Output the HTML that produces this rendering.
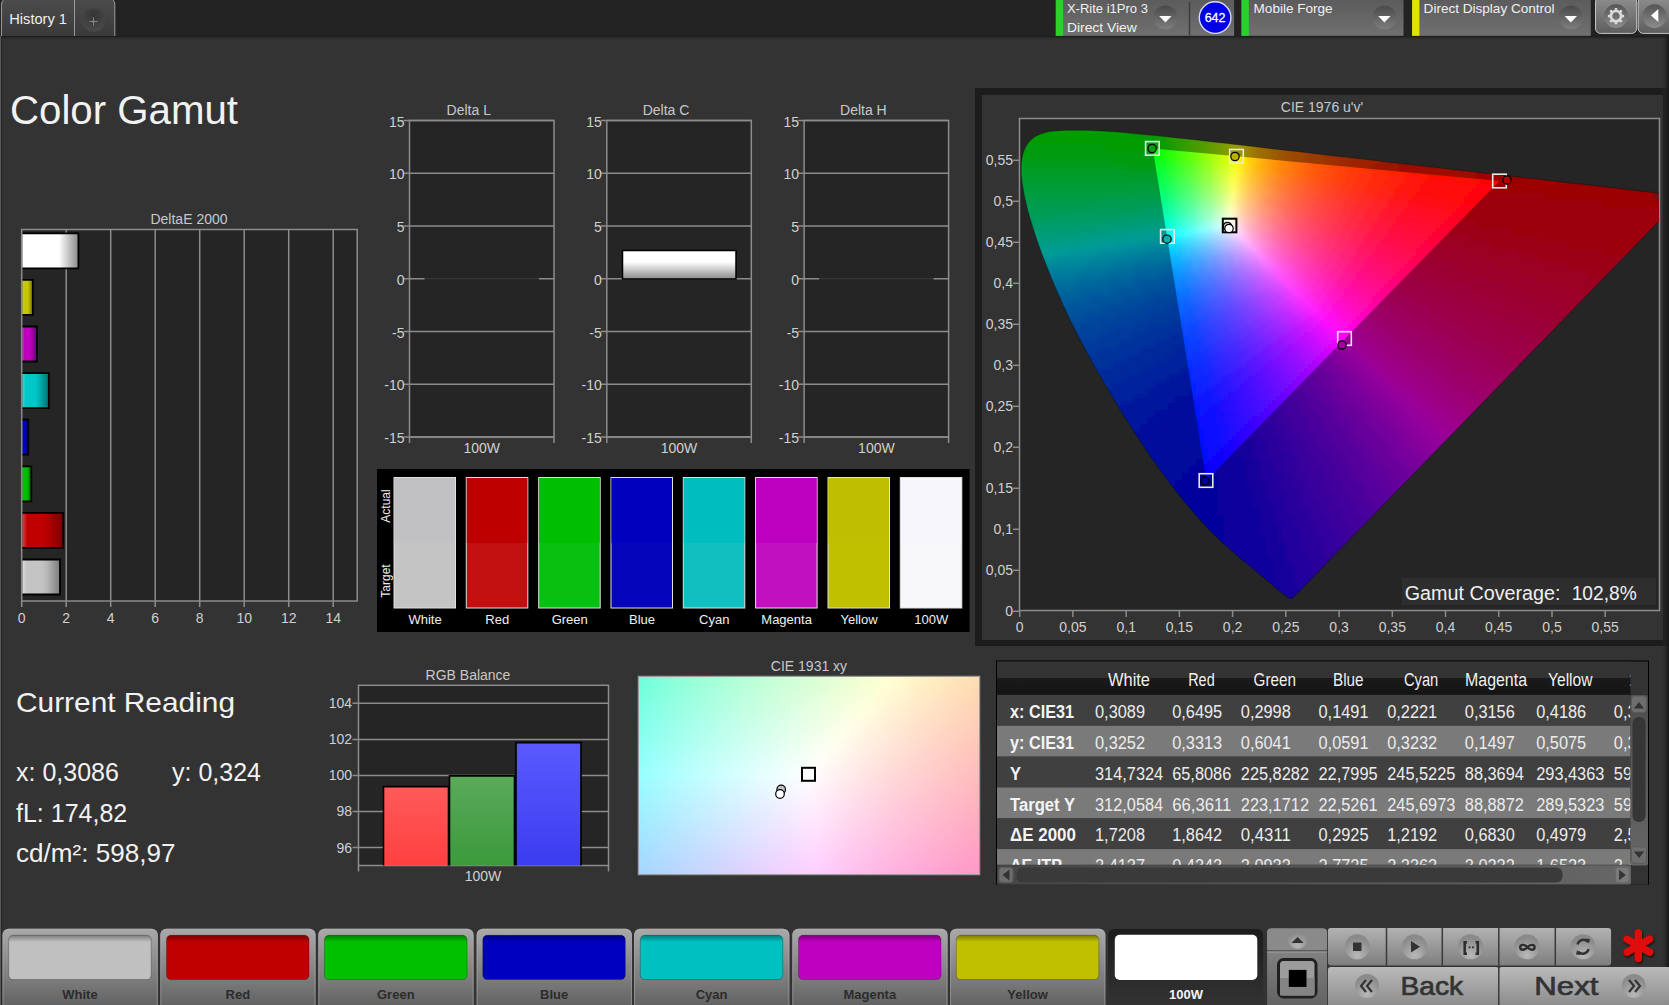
<!DOCTYPE html>
<html><head><meta charset="utf-8">
<style>
html,body{margin:0;padding:0;background:#333;overflow:hidden;}
body{width:1669px;height:1005px;position:relative;font-family:"Liberation Sans",sans-serif;}
svg{position:absolute;left:0;top:0;}
text{font-family:"Liberation Sans",sans-serif;}
</style></head><body>
<svg width="1669" height="1005" viewBox="0 0 1669 1005">
<defs>
<linearGradient id="tabg" x1="0" y1="0" x2="0" y2="1"><stop offset="0" stop-color="#4d4d4d"/><stop offset="1" stop-color="#383838"/></linearGradient>
<linearGradient id="blkg" x1="0" y1="0" x2="0" y2="1"><stop offset="0" stop-color="#5a5a5a"/><stop offset="1" stop-color="#6e6e6e"/></linearGradient>
<radialGradient id="ddg" cx="0.5" cy="0.3" r="0.6"><stop offset="0" stop-color="#4a4a4a"/><stop offset="1" stop-color="#7a7a7a"/></radialGradient>
<linearGradient id="whbar" x1="0" y1="0" x2="1" y2="0"><stop offset="0" stop-color="#fff"/><stop offset="0.45" stop-color="#fff"/><stop offset="1" stop-color="#8a8a8a"/></linearGradient>
<linearGradient id="dcbar" x1="0" y1="0" x2="0" y2="1"><stop offset="0" stop-color="#fff"/><stop offset="0.4" stop-color="#fff"/><stop offset="1" stop-color="#8a8a8a"/></linearGradient>
</defs>

<rect x="0" y="0" width="1669" height="36" fill="#232323"/>
<rect x="0" y="36" width="1669" height="969" fill="#333"/>
<rect x="0" y="36" width="1669" height="1.5" fill="#1e1e1e"/><rect x="0" y="37.5" width="1669" height="1" fill="#2a2a2a"/>
<rect x="0" y="36" width="1" height="969" fill="#5a5a5a"/><rect x="1" y="36" width="1" height="969" fill="#262626"/>
<defs>
<linearGradient id="tabg2" x1="0" y1="0" x2="0" y2="1"><stop offset="0" stop-color="#4b4b4b"/><stop offset="1" stop-color="#3a3a3a"/></linearGradient>
<linearGradient id="dvg" x1="0" y1="0" x2="0" y2="1"><stop offset="0" stop-color="#5c5c5c"/><stop offset="1" stop-color="#707070"/></linearGradient>
<linearGradient id="ddc" x1="0" y1="0" x2="0" y2="1"><stop offset="0" stop-color="#4a4a4a"/><stop offset="1" stop-color="#7e7e7e"/></linearGradient>
<radialGradient id="plusg" cx="0.5" cy="0.3" r="0.7"><stop offset="0" stop-color="#353535"/><stop offset="1" stop-color="#4a4a4a"/></radialGradient>
<linearGradient id="gearbg" x1="0" y1="0" x2="0" y2="1"><stop offset="0" stop-color="#6a6a6a"/><stop offset="1" stop-color="#7a7a7a"/></linearGradient>
</defs>
<path d="M1 36 V5 Q1 0 6 0 H111 Q115 0 115 4 V36Z" fill="url(#tabg2)"/>
<path d="M1.5 36 V5 Q1.5 1.5 3.5 0" fill="none" stroke="#9a9a9a" stroke-width="1"/>
<path d="M113 0 Q114.8 1.5 114.8 4 V36" fill="none" stroke="#9a9a9a" stroke-width="1"/>
<line x1="74.5" y1="0" x2="74.5" y2="36" stroke="#9a9a9a" stroke-width="1"/>
<text x="9.3" y="24" font-size="14" fill="#f0f0f0" textLength="57.7" lengthAdjust="spacingAndGlyphs">History 1</text>
<circle cx="93.5" cy="20" r="11.7" fill="url(#plusg)"/>
<path d="M89.5 21.5 h8 M93.5 17.5 v8" stroke="#8a8a8a" stroke-width="1"/>
<rect x="1055.8" y="0" width="178.29999999999995" height="35.8" fill="url(#dvg)"/>
<rect x="1055.8" y="0" width="7.3" height="35.8" fill="#2bd12b"/>
<circle cx="1165.4" cy="17.6" r="12" fill="url(#ddc)"/>
<path d="M1159.2 15.9 L1171.6000000000001 15.9 L1165.4 22.4Z" fill="#fff"/>
<line x1="1189.5" y1="2" x2="1189.5" y2="35.3" stroke="#3c3c3c" stroke-width="1.5"/>
<circle cx="1215.1" cy="17.6" r="15.8" fill="#0000e6" stroke="#dcdcff" stroke-width="1.4"/>
<text x="1215.1" y="22" font-size="12.5" fill="#fff" stroke="#fff" stroke-width="0.3" text-anchor="middle">642</text>
<text x="1066.9" y="13" font-size="13" fill="#f0f0f0" textLength="81" lengthAdjust="spacingAndGlyphs">X-Rite i1Pro 3</text>
<text x="1066.9" y="31.6" font-size="13" fill="#f0f0f0" textLength="70" lengthAdjust="spacingAndGlyphs">Direct View</text>
<rect x="1241.5" y="0" width="162.0" height="35.8" fill="url(#dvg)"/>
<rect x="1241.5" y="0" width="7.3" height="35.8" fill="#2bd12b"/>
<circle cx="1384.4" cy="17.6" r="12" fill="url(#ddc)"/>
<path d="M1378.2 15.9 L1390.6000000000001 15.9 L1384.4 22.4Z" fill="#fff"/>
<text x="1253.6" y="13" font-size="13" fill="#f0f0f0" textLength="79" lengthAdjust="spacingAndGlyphs">Mobile Forge</text>
<rect x="1412.1" y="0" width="178.70000000000005" height="35.8" fill="url(#dvg)"/>
<rect x="1412.1" y="0" width="7.3" height="35.8" fill="#e3e300"/>
<circle cx="1570.8" cy="17.6" r="12" fill="url(#ddc)"/>
<path d="M1564.6 15.9 L1577.0 15.9 L1570.8 22.4Z" fill="#fff"/>
<text x="1423.6" y="13" font-size="13" fill="#f0f0f0" textLength="131" lengthAdjust="spacingAndGlyphs">Direct Display Control</text>
<linearGradient id="gbg" x1="0" y1="0" x2="0" y2="1"><stop offset="0" stop-color="#8e8e8e"/><stop offset="1" stop-color="#5e5e5e"/></linearGradient>
<linearGradient id="gcg" x1="0" y1="0" x2="0" y2="1"><stop offset="0" stop-color="#545454"/><stop offset="1" stop-color="#8c8c8c"/></linearGradient>
<rect x="1595.5" y="-3" width="41.2" height="36.4" rx="5" fill="url(#gbg)" stroke="#c4c4c4" stroke-width="1"/>
<circle cx="1616" cy="16.1" r="11.9" fill="url(#gcg)"/>
<g transform="translate(1616 16.1)" fill="#dadada"><rect x="-1.3" y="-8.1" width="2.6" height="3" transform="rotate(0)"/><rect x="-1.3" y="-8.1" width="2.6" height="3" transform="rotate(45)"/><rect x="-1.3" y="-8.1" width="2.6" height="3" transform="rotate(90)"/><rect x="-1.3" y="-8.1" width="2.6" height="3" transform="rotate(135)"/><rect x="-1.3" y="-8.1" width="2.6" height="3" transform="rotate(180)"/><rect x="-1.3" y="-8.1" width="2.6" height="3" transform="rotate(225)"/><rect x="-1.3" y="-8.1" width="2.6" height="3" transform="rotate(270)"/><rect x="-1.3" y="-8.1" width="2.6" height="3" transform="rotate(315)"/><circle r="5.1" fill="none" stroke="#dadada" stroke-width="2.6"/></g>
<rect x="1638.2" y="-3" width="36" height="36.4" rx="5" fill="url(#gbg)" stroke="#c4c4c4" stroke-width="1"/>
<circle cx="1654.5" cy="16.1" r="11.9" fill="url(#gcg)"/>
<path d="M1651 15.6 L1658.3 9 L1658.3 22Z" fill="#fff"/>
<text x="10" y="124" font-size="40" fill="#f2f2f2" textLength="228" lengthAdjust="spacingAndGlyphs">Color Gamut</text>
<text x="189" y="224" font-size="14" fill="#c8c8c8" text-anchor="middle">DeltaE 2000</text>
<rect x="21.7" y="229.5" width="335.5" height="371.5" fill="#252525" stroke="#8c8c8c" stroke-width="1.5"/>
<line x1="66.2" y1="229.5" x2="66.2" y2="601" stroke="#8c8c8c" stroke-width="1.5"/>
<line x1="110.7" y1="229.5" x2="110.7" y2="601" stroke="#8c8c8c" stroke-width="1.5"/>
<line x1="155.2" y1="229.5" x2="155.2" y2="601" stroke="#8c8c8c" stroke-width="1.5"/>
<line x1="199.7" y1="229.5" x2="199.7" y2="601" stroke="#8c8c8c" stroke-width="1.5"/>
<line x1="244.2" y1="229.5" x2="244.2" y2="601" stroke="#8c8c8c" stroke-width="1.5"/>
<line x1="288.7" y1="229.5" x2="288.7" y2="601" stroke="#8c8c8c" stroke-width="1.5"/>
<line x1="333.2" y1="229.5" x2="333.2" y2="601" stroke="#8c8c8c" stroke-width="1.5"/>
<line x1="21.7" y1="601" x2="21.7" y2="607" stroke="#8c8c8c" stroke-width="1.5"/>
<text x="21.7" y="623" font-size="14" fill="#d0d0d0" text-anchor="middle">0</text>
<line x1="66.2" y1="601" x2="66.2" y2="607" stroke="#8c8c8c" stroke-width="1.5"/>
<text x="66.2" y="623" font-size="14" fill="#d0d0d0" text-anchor="middle">2</text>
<line x1="110.7" y1="601" x2="110.7" y2="607" stroke="#8c8c8c" stroke-width="1.5"/>
<text x="110.7" y="623" font-size="14" fill="#d0d0d0" text-anchor="middle">4</text>
<line x1="155.2" y1="601" x2="155.2" y2="607" stroke="#8c8c8c" stroke-width="1.5"/>
<text x="155.2" y="623" font-size="14" fill="#d0d0d0" text-anchor="middle">6</text>
<line x1="199.7" y1="601" x2="199.7" y2="607" stroke="#8c8c8c" stroke-width="1.5"/>
<text x="199.7" y="623" font-size="14" fill="#d0d0d0" text-anchor="middle">8</text>
<line x1="244.2" y1="601" x2="244.2" y2="607" stroke="#8c8c8c" stroke-width="1.5"/>
<text x="244.2" y="623" font-size="14" fill="#d0d0d0" text-anchor="middle">10</text>
<line x1="288.7" y1="601" x2="288.7" y2="607" stroke="#8c8c8c" stroke-width="1.5"/>
<text x="288.7" y="623" font-size="14" fill="#d0d0d0" text-anchor="middle">12</text>
<line x1="333.2" y1="601" x2="333.2" y2="607" stroke="#8c8c8c" stroke-width="1.5"/>
<text x="333.2" y="623" font-size="14" fill="#d0d0d0" text-anchor="middle">14</text>
<linearGradient id="deg1" x1="0" y1="0" x2="1" y2="0"><stop offset="0" stop-color="#ffffff"/><stop offset="0.12" stop-color="#ffffff"/><stop offset="0.5" stop-color="#ffffff"/><stop offset="0.65" stop-color="#ffffff"/><stop offset="1" stop-color="#8a8a8a"/></linearGradient>
<rect x="22.5" y="233.3" width="55.9" height="35" fill="url(#deg1)"/>
<path d="M22.5 233.3 H78.4 V268.3 H22.5" fill="none" stroke="#000" stroke-width="1.8"/>
<linearGradient id="deg2" x1="0" y1="0" x2="1" y2="0"><stop offset="0" stop-color="#d8d840"/><stop offset="0.12" stop-color="#c8c800"/><stop offset="0.5" stop-color="#c8c800"/><stop offset="0.65" stop-color="#b0b000"/><stop offset="1" stop-color="#707000"/></linearGradient>
<rect x="22.5" y="279.9" width="10.3" height="35" fill="url(#deg2)"/>
<path d="M22.5 279.9 H32.8 V314.9 H22.5" fill="none" stroke="#000" stroke-width="1.8"/>
<linearGradient id="deg3" x1="0" y1="0" x2="1" y2="0"><stop offset="0" stop-color="#d040d0"/><stop offset="0.12" stop-color="#c000c0"/><stop offset="0.5" stop-color="#c000c0"/><stop offset="0.65" stop-color="#a800a8"/><stop offset="1" stop-color="#680068"/></linearGradient>
<rect x="22.5" y="326.5" width="14.4" height="35" fill="url(#deg3)"/>
<path d="M22.5 326.5 H36.9 V361.5 H22.5" fill="none" stroke="#000" stroke-width="1.8"/>
<linearGradient id="deg4" x1="0" y1="0" x2="1" y2="0"><stop offset="0" stop-color="#40d8d8"/><stop offset="0.12" stop-color="#00c8c8"/><stop offset="0.5" stop-color="#00c8c8"/><stop offset="0.65" stop-color="#00b0b0"/><stop offset="1" stop-color="#007070"/></linearGradient>
<rect x="22.5" y="373.1" width="26.3" height="35" fill="url(#deg4)"/>
<path d="M22.5 373.1 H48.8 V408.1 H22.5" fill="none" stroke="#000" stroke-width="1.8"/>
<linearGradient id="deg5" x1="0" y1="0" x2="1" y2="0"><stop offset="0" stop-color="#4040d8"/><stop offset="0.12" stop-color="#0000c0"/><stop offset="0.5" stop-color="#0000c0"/><stop offset="0.65" stop-color="#0000a8"/><stop offset="1" stop-color="#000070"/></linearGradient>
<rect x="22.5" y="419.7" width="5.7" height="35" fill="url(#deg5)"/>
<path d="M22.5 419.7 H28.2 V454.7 H22.5" fill="none" stroke="#000" stroke-width="1.8"/>
<linearGradient id="deg6" x1="0" y1="0" x2="1" y2="0"><stop offset="0" stop-color="#40d840"/><stop offset="0.12" stop-color="#00c000"/><stop offset="0.5" stop-color="#00c000"/><stop offset="0.65" stop-color="#00a800"/><stop offset="1" stop-color="#006000"/></linearGradient>
<rect x="22.5" y="466.3" width="8.8" height="35" fill="url(#deg6)"/>
<path d="M22.5 466.3 H31.3 V501.3 H22.5" fill="none" stroke="#000" stroke-width="1.8"/>
<linearGradient id="deg7" x1="0" y1="0" x2="1" y2="0"><stop offset="0" stop-color="#d84040"/><stop offset="0.12" stop-color="#c00000"/><stop offset="0.5" stop-color="#c00000"/><stop offset="0.65" stop-color="#b00000"/><stop offset="1" stop-color="#780000"/></linearGradient>
<rect x="22.5" y="512.9" width="40.7" height="35" fill="url(#deg7)"/>
<path d="M22.5 512.9 H63.2 V547.9 H22.5" fill="none" stroke="#000" stroke-width="1.8"/>
<linearGradient id="deg8" x1="0" y1="0" x2="1" y2="0"><stop offset="0" stop-color="#dcdcdc"/><stop offset="0.12" stop-color="#c4c4c4"/><stop offset="0.5" stop-color="#c4c4c4"/><stop offset="0.65" stop-color="#b8b8b8"/><stop offset="1" stop-color="#7c7c7c"/></linearGradient>
<rect x="22.5" y="559.5" width="37.5" height="35" fill="url(#deg8)"/>
<path d="M22.5 559.5 H60.0 V594.5 H22.5" fill="none" stroke="#000" stroke-width="1.8"/>
<text x="468.8" y="115" font-size="14" fill="#c8c8c8" text-anchor="middle">Delta L</text>
<rect x="409.5" y="120.5" width="144.5" height="316.5" fill="#252525" stroke="#8c8c8c" stroke-width="1.5"/>
<line x1="403.5" y1="120.5" x2="554.0" y2="120.5" stroke="#8c8c8c" stroke-width="1.5"/>
<text x="404.5" y="126.5" font-size="14" fill="#d0d0d0" text-anchor="end">15</text>
<line x1="403.5" y1="173.2" x2="554.0" y2="173.2" stroke="#8c8c8c" stroke-width="1.5"/>
<text x="404.5" y="179.2" font-size="14" fill="#d0d0d0" text-anchor="end">10</text>
<line x1="403.5" y1="226.0" x2="554.0" y2="226.0" stroke="#8c8c8c" stroke-width="1.5"/>
<text x="404.5" y="232.0" font-size="14" fill="#d0d0d0" text-anchor="end">5</text>
<line x1="403.5" y1="278.8" x2="554.0" y2="278.8" stroke="#8c8c8c" stroke-width="1.5"/>
<text x="404.5" y="284.8" font-size="14" fill="#d0d0d0" text-anchor="end">0</text>
<line x1="403.5" y1="331.5" x2="554.0" y2="331.5" stroke="#8c8c8c" stroke-width="1.5"/>
<text x="404.5" y="337.5" font-size="14" fill="#d0d0d0" text-anchor="end">-5</text>
<line x1="403.5" y1="384.2" x2="554.0" y2="384.2" stroke="#8c8c8c" stroke-width="1.5"/>
<text x="404.5" y="390.2" font-size="14" fill="#d0d0d0" text-anchor="end">-10</text>
<line x1="403.5" y1="437.0" x2="554.0" y2="437.0" stroke="#8c8c8c" stroke-width="1.5"/>
<text x="404.5" y="443.0" font-size="14" fill="#d0d0d0" text-anchor="end">-15</text>
<line x1="409.5" y1="437" x2="409.5" y2="443" stroke="#8c8c8c" stroke-width="1.5"/>
<line x1="554.0" y1="437" x2="554.0" y2="443" stroke="#8c8c8c" stroke-width="1.5"/>
<text x="481.8" y="453" font-size="14" fill="#d0d0d0" text-anchor="middle">100W</text>
<line x1="424.5" y1="279" x2="539.0" y2="279" stroke="#1a1a1a" stroke-width="1.5"/>
<text x="666.0" y="115" font-size="14" fill="#c8c8c8" text-anchor="middle">Delta C</text>
<rect x="606.8" y="120.5" width="144.5" height="316.5" fill="#252525" stroke="#8c8c8c" stroke-width="1.5"/>
<line x1="600.8" y1="120.5" x2="751.3" y2="120.5" stroke="#8c8c8c" stroke-width="1.5"/>
<text x="601.8" y="126.5" font-size="14" fill="#d0d0d0" text-anchor="end">15</text>
<line x1="600.8" y1="173.2" x2="751.3" y2="173.2" stroke="#8c8c8c" stroke-width="1.5"/>
<text x="601.8" y="179.2" font-size="14" fill="#d0d0d0" text-anchor="end">10</text>
<line x1="600.8" y1="226.0" x2="751.3" y2="226.0" stroke="#8c8c8c" stroke-width="1.5"/>
<text x="601.8" y="232.0" font-size="14" fill="#d0d0d0" text-anchor="end">5</text>
<line x1="600.8" y1="278.8" x2="751.3" y2="278.8" stroke="#8c8c8c" stroke-width="1.5"/>
<text x="601.8" y="284.8" font-size="14" fill="#d0d0d0" text-anchor="end">0</text>
<line x1="600.8" y1="331.5" x2="751.3" y2="331.5" stroke="#8c8c8c" stroke-width="1.5"/>
<text x="601.8" y="337.5" font-size="14" fill="#d0d0d0" text-anchor="end">-5</text>
<line x1="600.8" y1="384.2" x2="751.3" y2="384.2" stroke="#8c8c8c" stroke-width="1.5"/>
<text x="601.8" y="390.2" font-size="14" fill="#d0d0d0" text-anchor="end">-10</text>
<line x1="600.8" y1="437.0" x2="751.3" y2="437.0" stroke="#8c8c8c" stroke-width="1.5"/>
<text x="601.8" y="443.0" font-size="14" fill="#d0d0d0" text-anchor="end">-15</text>
<line x1="606.8" y1="437" x2="606.8" y2="443" stroke="#8c8c8c" stroke-width="1.5"/>
<line x1="751.3" y1="437" x2="751.3" y2="443" stroke="#8c8c8c" stroke-width="1.5"/>
<text x="679.0" y="453" font-size="14" fill="#d0d0d0" text-anchor="middle">100W</text>
<rect x="622.5" y="250.5" width="113.5" height="28.5" fill="url(#dcbar)" stroke="#000" stroke-width="1.5"/>
<text x="863.4" y="115" font-size="14" fill="#c8c8c8" text-anchor="middle">Delta H</text>
<rect x="804.1" y="120.5" width="144.5" height="316.5" fill="#252525" stroke="#8c8c8c" stroke-width="1.5"/>
<line x1="798.1" y1="120.5" x2="948.6" y2="120.5" stroke="#8c8c8c" stroke-width="1.5"/>
<text x="799.1" y="126.5" font-size="14" fill="#d0d0d0" text-anchor="end">15</text>
<line x1="798.1" y1="173.2" x2="948.6" y2="173.2" stroke="#8c8c8c" stroke-width="1.5"/>
<text x="799.1" y="179.2" font-size="14" fill="#d0d0d0" text-anchor="end">10</text>
<line x1="798.1" y1="226.0" x2="948.6" y2="226.0" stroke="#8c8c8c" stroke-width="1.5"/>
<text x="799.1" y="232.0" font-size="14" fill="#d0d0d0" text-anchor="end">5</text>
<line x1="798.1" y1="278.8" x2="948.6" y2="278.8" stroke="#8c8c8c" stroke-width="1.5"/>
<text x="799.1" y="284.8" font-size="14" fill="#d0d0d0" text-anchor="end">0</text>
<line x1="798.1" y1="331.5" x2="948.6" y2="331.5" stroke="#8c8c8c" stroke-width="1.5"/>
<text x="799.1" y="337.5" font-size="14" fill="#d0d0d0" text-anchor="end">-5</text>
<line x1="798.1" y1="384.2" x2="948.6" y2="384.2" stroke="#8c8c8c" stroke-width="1.5"/>
<text x="799.1" y="390.2" font-size="14" fill="#d0d0d0" text-anchor="end">-10</text>
<line x1="798.1" y1="437.0" x2="948.6" y2="437.0" stroke="#8c8c8c" stroke-width="1.5"/>
<text x="799.1" y="443.0" font-size="14" fill="#d0d0d0" text-anchor="end">-15</text>
<line x1="804.1" y1="437" x2="804.1" y2="443" stroke="#8c8c8c" stroke-width="1.5"/>
<line x1="948.6" y1="437" x2="948.6" y2="443" stroke="#8c8c8c" stroke-width="1.5"/>
<text x="876.4" y="453" font-size="14" fill="#d0d0d0" text-anchor="middle">100W</text>
<line x1="819.1" y1="279" x2="933.6" y2="279" stroke="#1a1a1a" stroke-width="1.5"/>
<rect x="377" y="469" width="592.5" height="163" fill="#000"/>
<rect x="394.0" y="477.5" width="61.5" height="130.5" fill="#c4c4c4" stroke="#e0e0e0" stroke-width="1"/>
<rect x="394.5" y="478" width="60.5" height="65" fill="#c1c1c3"/>
<text x="425.0" y="624" font-size="13" fill="#f0f0f0" text-anchor="middle">White</text>
<rect x="466.3" y="477.5" width="61.5" height="130.5" fill="#c21010" stroke="#e0e0e0" stroke-width="1"/>
<rect x="466.8" y="478" width="60.5" height="65" fill="#be0000"/>
<text x="497.3" y="624" font-size="13" fill="#f0f0f0" text-anchor="middle">Red</text>
<rect x="538.7" y="477.5" width="61.5" height="130.5" fill="#08c010" stroke="#e0e0e0" stroke-width="1"/>
<rect x="539.2" y="478" width="60.5" height="65" fill="#00be00"/>
<text x="569.7" y="624" font-size="13" fill="#f0f0f0" text-anchor="middle">Green</text>
<rect x="611.0" y="477.5" width="61.5" height="130.5" fill="#0505bb" stroke="#e0e0e0" stroke-width="1"/>
<rect x="611.5" y="478" width="60.5" height="65" fill="#0000be"/>
<text x="642.0" y="624" font-size="13" fill="#f0f0f0" text-anchor="middle">Blue</text>
<rect x="683.3" y="477.5" width="61.5" height="130.5" fill="#10c0c0" stroke="#e0e0e0" stroke-width="1"/>
<rect x="683.8" y="478" width="60.5" height="65" fill="#00bec0"/>
<text x="714.3" y="624" font-size="13" fill="#f0f0f0" text-anchor="middle">Cyan</text>
<rect x="755.6" y="477.5" width="61.5" height="130.5" fill="#c010c0" stroke="#e0e0e0" stroke-width="1"/>
<rect x="756.1" y="478" width="60.5" height="65" fill="#bd00c0"/>
<text x="786.6" y="624" font-size="13" fill="#f0f0f0" text-anchor="middle">Magenta</text>
<rect x="828.0" y="477.5" width="61.5" height="130.5" fill="#c0c000" stroke="#e0e0e0" stroke-width="1"/>
<rect x="828.5" y="478" width="60.5" height="65" fill="#c0be00"/>
<text x="859.0" y="624" font-size="13" fill="#f0f0f0" text-anchor="middle">Yellow</text>
<rect x="900.3" y="477.5" width="61.5" height="130.5" fill="#f8f8fa" stroke="#e0e0e0" stroke-width="1"/>
<rect x="900.8" y="478" width="60.5" height="65" fill="#f6f6fb"/>
<text x="931.3" y="624" font-size="13" fill="#f0f0f0" text-anchor="middle">100W</text>
<text transform="translate(390,506) rotate(-90)" font-size="12" fill="#f0f0f0" text-anchor="middle">Actual</text>
<text transform="translate(390,581) rotate(-90)" font-size="12" fill="#f0f0f0" text-anchor="middle">Target</text>
<rect x="975" y="88" width="694" height="558" fill="#1c1c1c"/>
<rect x="982" y="95" width="681" height="545" fill="#333"/>
<defs><linearGradient id="rstr" x1="0" y1="0" x2="1" y2="0"><stop offset="0" stop-color="#333" stop-opacity="0"/><stop offset="1" stop-color="#151515"/></linearGradient></defs><rect x="1661" y="36" width="8" height="969" fill="url(#rstr)"/>
<text x="1322" y="112" font-size="14" fill="#c8c8c8" text-anchor="middle">CIE 1976 u'v'</text>
<rect x="1019.5" y="118.5" width="640" height="492" fill="#252525" stroke="#8c8c8c" stroke-width="1.5"/>
<defs><clipPath id="hclip"><path d="M1293.1 597.8 L1293.1 597.8 L1293.1 597.8 L1293.0 597.7 L1293.0 597.7 L1292.9 597.7 L1292.9 597.8 L1292.8 597.8 L1292.8 597.9 L1292.7 597.9 L1292.6 597.9 L1292.5 597.9 L1292.4 597.9 L1292.3 597.8 L1292.3 597.9 L1292.2 597.9 L1292.2 598.0 L1292.1 598.1 L1292.1 598.1 L1292.0 598.2 L1292.0 598.2 L1291.9 598.3 L1291.8 598.3 L1291.7 598.3 L1291.6 598.3 L1291.4 598.3 L1291.3 598.3 L1291.1 598.3 L1290.9 598.2 L1290.8 598.2 L1290.6 598.2 L1290.5 598.3 L1290.3 598.3 L1290.1 598.2 L1289.9 598.2 L1289.7 598.2 L1289.5 598.1 L1289.3 598.0 L1289.0 597.9 L1288.6 597.7 L1288.2 597.4 L1287.7 597.2 L1287.2 596.8 L1286.6 596.5 L1286.0 596.1 L1285.4 595.6 L1284.8 595.2 L1284.1 594.6 L1283.3 594.1 L1282.5 593.4 L1281.7 592.7 L1280.7 592.0 L1279.7 591.2 L1278.6 590.4 L1277.5 589.5 L1276.4 588.5 L1275.1 587.5 L1273.8 586.3 L1272.5 585.2 L1271.1 584.0 L1269.6 582.7 L1268.0 581.4 L1266.4 580.0 L1264.7 578.6 L1262.9 577.1 L1261.0 575.5 L1258.9 573.8 L1256.8 572.0 L1254.6 570.2 L1252.2 568.2 L1249.8 566.2 L1247.2 564.1 L1244.6 562.0 L1241.9 559.7 L1239.0 557.3 L1236.1 554.8 L1233.0 552.1 L1229.8 549.3 L1226.5 546.3 L1223.0 543.2 L1219.5 539.9 L1215.8 536.4 L1212.0 532.7 L1208.1 528.7 L1204.0 524.3 L1199.6 519.5 L1194.9 514.2 L1189.8 508.3 L1184.5 501.9 L1178.9 494.9 L1173.1 487.5 L1167.1 479.6 L1161.0 471.3 L1154.7 462.6 L1148.3 453.4 L1141.8 443.7 L1135.1 433.5 L1128.3 422.9 L1121.5 411.9 L1114.7 400.7 L1107.9 389.2 L1101.1 377.6 L1094.3 365.9 L1087.7 354.0 L1081.3 342.1 L1075.2 330.3 L1069.4 318.5 L1064.0 306.9 L1058.9 295.6 L1054.1 284.5 L1049.7 273.7 L1045.5 263.3 L1041.7 253.3 L1038.2 243.7 L1035.1 234.6 L1032.3 226.0 L1029.9 218.0 L1027.8 210.4 L1026.1 203.4 L1024.6 196.8 L1023.4 190.6 L1022.4 184.8 L1021.8 179.5 L1021.3 174.6 L1021.2 170.1 L1021.2 165.9 L1021.5 162.0 L1022.0 158.3 L1022.6 154.9 L1023.5 151.8 L1024.6 149.0 L1025.9 146.3 L1027.4 143.9 L1029.0 141.8 L1030.8 139.9 L1032.8 138.2 L1034.8 136.7 L1037.1 135.5 L1039.4 134.4 L1041.8 133.5 L1044.3 132.7 L1046.9 132.1 L1049.6 131.6 L1052.3 131.2 L1055.1 130.9 L1058.0 130.7 L1061.0 130.5 L1063.9 130.3 L1066.9 130.3 L1070.0 130.2 L1073.0 130.2 L1076.0 130.2 L1079.0 130.2 L1082.1 130.2 L1085.1 130.3 L1088.2 130.3 L1091.3 130.5 L1094.4 130.6 L1097.6 130.7 L1100.8 130.9 L1104.0 131.1 L1107.3 131.3 L1110.7 131.5 L1114.1 131.8 L1117.6 132.0 L1121.1 132.3 L1124.7 132.6 L1128.3 132.9 L1132.0 133.3 L1135.8 133.6 L1139.7 134.0 L1143.6 134.4 L1147.6 134.8 L1151.7 135.2 L1155.9 135.6 L1160.1 136.1 L1164.4 136.5 L1168.9 137.0 L1173.4 137.5 L1178.0 138.0 L1182.7 138.5 L1187.5 139.0 L1192.4 139.6 L1197.4 140.1 L1202.5 140.7 L1207.7 141.3 L1213.0 141.9 L1218.4 142.5 L1224.0 143.1 L1229.6 143.8 L1235.3 144.4 L1241.2 145.1 L1247.2 145.8 L1253.3 146.5 L1259.5 147.2 L1265.8 147.9 L1272.2 148.7 L1278.7 149.4 L1285.4 150.2 L1292.1 151.0 L1299.0 151.7 L1305.9 152.5 L1313.0 153.4 L1320.1 154.2 L1327.4 155.0 L1334.7 155.9 L1342.1 156.7 L1349.6 157.6 L1357.2 158.4 L1364.9 159.3 L1372.6 160.2 L1380.3 161.1 L1388.1 162.0 L1396.0 162.9 L1403.8 163.8 L1411.5 164.7 L1419.2 165.6 L1426.8 166.5 L1434.3 167.3 L1441.8 168.2 L1449.2 169.0 L1456.7 169.9 L1464.1 170.8 L1471.5 171.6 L1478.8 172.4 L1485.9 173.3 L1492.9 174.1 L1499.7 174.8 L1506.3 175.6 L1512.8 176.3 L1519.1 177.1 L1525.3 177.8 L1531.3 178.5 L1537.2 179.1 L1542.9 179.8 L1548.4 180.4 L1553.8 181.1 L1559.0 181.7 L1564.0 182.2 L1568.8 182.8 L1573.5 183.3 L1578.0 183.8 L1582.3 184.3 L1586.5 184.8 L1590.5 185.3 L1594.5 185.7 L1598.2 186.2 L1601.8 186.6 L1605.4 187.0 L1608.8 187.4 L1612.1 187.8 L1615.3 188.1 L1618.5 188.5 L1621.6 188.9 L1624.5 189.2 L1627.4 189.5 L1630.2 189.8 L1632.9 190.2 L1635.4 190.5 L1637.9 190.7 L1640.3 191.0 L1642.6 191.3 L1644.9 191.5 L1647.0 191.8 L1649.0 192.0 L1650.9 192.2 L1652.7 192.4 L1654.4 192.6 L1656.0 192.8 L1657.5 193.0 L1658.9 193.2 L1660.3 193.3 L1661.6 193.5 L1662.9 193.6 L1664.0 193.8 L1665.2 193.9 L1666.2 194.0 L1667.2 194.1 L1668.2 194.2 L1669.1 194.3 L1669.9 194.4 L1670.6 194.5 L1671.3 194.6 L1671.9 194.7 L1672.5 194.7 L1673.0 194.8 L1673.6 194.9 L1674.1 194.9 L1674.6 195.0 L1675.1 195.0 L1675.6 195.1 L1676.0 195.1 L1676.5 195.2 L1676.9 195.2 L1677.3 195.3 L1677.6 195.3 L1678.0 195.4 L1678.4 195.4 L1678.8 195.5 L1679.2 195.5 L1679.6 195.6 L1680.0 195.6 L1680.4 195.6 L1680.8 195.7 L1681.1 195.7 L1681.4 195.8 L1681.7 195.8 L1681.9 195.8 L1682.1 195.8 L1682.3 195.9 L1682.4 195.9 L1682.5 195.9 L1682.7 195.9 L1682.8 195.9 L1682.9 195.9 L1683.0 195.9 L1683.1 196.0 L1683.2 196.0 L1683.2 196.0 L1683.3 196.0 L1683.3 196.0Z"/></clipPath><clipPath id="tclip"><path d="M1499.47 180.92 L1152.76 148.45 L1206.41 480.22Z"/></clipPath><clipPath id="pclip"><rect x="1020" y="119" width="639" height="491"/></clipPath><filter id="bl1" x="-5%" y="-5%" width="110%" height="110%"><feGaussianBlur stdDeviation="3.5"/></filter><filter id="bl2" x="-5%" y="-5%" width="110%" height="110%"><feGaussianBlur stdDeviation="2.2"/></filter></defs>
<g clip-path="url(#pclip)"><g clip-path="url(#hclip)"><g filter="url(#bl1)"><path fill="#009c00" d="M1042 123h91v7h-91zM1028 130h126v7h-126zM1021 137h133v7h-133zM1105 144h49v7h-49z"/><path fill="#089c00" d="M1154 130h7v7h-7zM1154 137h7v7h-7zM1154 144h7v7h-7z"/><path fill="#109c00" d="M1161 130h7v7h-7zM1161 137h7v7h-7zM1161 144h7v7h-7z"/><path fill="#219c00" d="M1168 130h7v7h-7zM1168 137h7v7h-7z"/><path fill="#299c00" d="M1175 130h7v7h-7zM1175 137h7v7h-7zM1175 144h7v7h-7z"/><path fill="#319c00" d="M1182 130h7v7h-7zM1182 137h7v7h-7zM1182 144h7v7h-7z"/><path fill="#429c00" d="M1189 130h7v7h-7zM1189 137h7v7h-7zM1189 144h7v7h-7zM1189 151h7v7h-7z"/><path fill="#4a9c00" d="M1196 130h7v7h-7zM1196 137h7v7h-7zM1196 144h7v7h-7zM1196 151h7v7h-7z"/><path fill="#5a9c00" d="M1203 137h7v7h-7zM1203 144h7v7h-7zM1203 151h7v7h-7z"/><path fill="#639c00" d="M1210 137h7v7h-7zM1210 144h7v7h-7zM1210 151h7v7h-7z"/><path fill="#739c00" d="M1217 137h7v7h-7zM1217 144h7v7h-7zM1217 151h7v7h-7z"/><path fill="#849c00" d="M1224 137h7v7h-7zM1224 144h7v7h-7zM1224 151h7v7h-7z"/><path fill="#949c00" d="M1231 137h7v7h-7zM1231 144h7v7h-7zM1231 151h7v7h-7z"/><path fill="#9c9400" d="M1238 137h7v7h-7zM1238 144h7v7h-7z"/><path fill="#9c8400" d="M1245 137h7v7h-7zM1245 144h7v7h-7zM1245 151h7v7h-7z"/><path fill="#9c7b00" d="M1252 137h7v7h-7z"/><path fill="#9c6b00" d="M1259 137h7v7h-7zM1259 144h7v7h-7zM1259 151h7v7h-7zM1259 158h7v7h-7z"/><path fill="#009c08" d="M1021 144h84v7h-84zM1105 151h49v7h-49z"/><path fill="#199c00" d="M1168 144h7v7h-7z"/><path fill="#9c7300" d="M1252 144h7v7h-7zM1252 151h7v7h-7z"/><path fill="#9c6300" d="M1266 144h7v7h-7zM1266 151h7v7h-7zM1266 158h7v7h-7z"/><path fill="#9c5a00" d="M1273 144h7v7h-7zM1273 151h7v7h-7zM1273 158h7v7h-7z"/><path fill="#9c5200" d="M1280 144h7v7h-7zM1280 151h7v7h-7zM1280 158h7v7h-7z"/><path fill="#9c4a00" d="M1287 144h14v7h-14zM1287 151h14v7h-14zM1287 158h7v7h-7z"/><path fill="#9c4200" d="M1301 144h7v7h-7zM1301 151h7v7h-7zM1294 158h14v7h-14z"/><path fill="#9c3a00" d="M1308 144h14v7h-14zM1308 151h14v7h-14zM1308 158h14v7h-14z"/><path fill="#009c10" d="M1014 151h91v7h-91zM1112 158h49v7h-49z"/><path fill="#089c08" d="M1154 151h7v7h-7z"/><path fill="#109c08" d="M1161 151h7v7h-7z"/><path fill="#199c08" d="M1168 151h7v7h-7z"/><path fill="#299c08" d="M1175 151h7v7h-7z"/><path fill="#319c08" d="M1182 151h7v7h-7z"/><path fill="#9c8c00" d="M1238 151h7v7h-7z"/><path fill="#9c3100" d="M1322 151h14v7h-14zM1322 158h14v7h-14zM1315 165h14v7h-14z"/><path fill="#9c2900" d="M1336 151h21v7h-21zM1336 158h14v7h-14zM1329 165h21v7h-21z"/><path fill="#9c2100" d="M1357 151h21v7h-21zM1350 158h28v7h-28zM1350 165h21v7h-21z"/><path fill="#9c1900" d="M1378 151h7v7h-7zM1378 158h28v7h-28zM1371 165h28v7h-28zM1371 172h21v7h-21z"/><path fill="#009c19" d="M1014 158h98v7h-98zM1126 165h35v7h-35z"/><path fill="#109c10" d="M1161 158h7v7h-7z"/><path fill="#199c10" d="M1168 158h7v7h-7z"/><path fill="#219c10" d="M1175 158h7v7h-7z"/><path fill="#319c10" d="M1182 158h7v7h-7z"/><path fill="#3a9c10" d="M1189 158h7v7h-7z"/><path fill="#4a9c10" d="M1196 158h7v7h-7z"/><path fill="#5a9c10" d="M1203 158h7v7h-7z"/><path fill="#639c08" d="M1210 158h7v7h-7z"/><path fill="#739c08" d="M1217 158h7v7h-7z"/><path fill="#849c08" d="M1224 158h7v7h-7z"/><path fill="#949c08" d="M1231 158h7v7h-7z"/><path fill="#9c8c08" d="M1238 158h7v7h-7z"/><path fill="#9c7b08" d="M1245 158h7v7h-7z"/><path fill="#9c7308" d="M1252 158h7v7h-7z"/><path fill="#9c1000" d="M1406 158h35v7h-35zM1399 165h35v7h-35zM1392 172h35v7h-35z"/><path fill="#9c0800" d="M1441 158h7v7h-7zM1434 165h49v7h-49zM1427 172h49v7h-49zM1434 179h35v7h-35z"/><path fill="#009c21" d="M1014 165h112v7h-112z"/><path fill="#109c19" d="M1161 165h7v7h-7z"/><path fill="#199c19" d="M1168 165h7v7h-7z"/><path fill="#219c19" d="M1175 165h7v7h-7z"/><path fill="#319c19" d="M1182 165h7v7h-7z"/><path fill="#3a9c19" d="M1189 165h7v7h-7z"/><path fill="#4a9c19" d="M1196 165h7v7h-7z"/><path fill="#5a9c19" d="M1203 165h7v7h-7z"/><path fill="#639c19" d="M1210 165h7v7h-7z"/><path fill="#739c19" d="M1217 165h7v7h-7z"/><path fill="#849c19" d="M1224 165h7v7h-7z"/><path fill="#949c19" d="M1231 165h7v7h-7z"/><path fill="#9c8c10" d="M1238 165h7v7h-7z"/><path fill="#9c7b10" d="M1245 165h7v7h-7z"/><path fill="#9c7310" d="M1252 165h7v7h-7z"/><path fill="#9c6b10" d="M1259 165h7v7h-7z"/><path fill="#9c5a08" d="M1266 165h7v7h-7z"/><path fill="#9c5208" d="M1273 165h14v7h-14z"/><path fill="#9c4a08" d="M1287 165h7v7h-7z"/><path fill="#9c4208" d="M1294 165h7v7h-7z"/><path fill="#9c3a08" d="M1301 165h14v7h-14zM1308 172h7v7h-7z"/><path fill="#9c0000" d="M1483 165h21v7h-21zM1476 172h91v7h-91zM1469 179h161v7h-161zM1490 186h168v7h-168zM1546 193h112v7h-112zM1602 200h63v7h-63zM1658 207h7v7h-7z"/><path fill="#009c29" d="M1014 172h147v7h-147z"/><path fill="#089c29" d="M1161 172h7v7h-7z"/><path fill="#199c29" d="M1168 172h7v7h-7z"/><path fill="#219c29" d="M1175 172h7v7h-7z"/><path fill="#319c29" d="M1182 172h7v7h-7z"/><path fill="#3a9c21" d="M1189 172h7v7h-7z"/><path fill="#4a9c21" d="M1196 172h7v7h-7z"/><path fill="#5a9c21" d="M1203 172h7v7h-7z"/><path fill="#639c21" d="M1210 172h7v7h-7z"/><path fill="#739c21" d="M1217 172h7v7h-7z"/><path fill="#849c21" d="M1224 172h7v7h-7z"/><path fill="#949c21" d="M1231 172h7v7h-7z"/><path fill="#9c8c21" d="M1238 172h7v7h-7z"/><path fill="#9c7b19" d="M1245 172h7v7h-7z"/><path fill="#9c7319" d="M1252 172h7v7h-7z"/><path fill="#9c6319" d="M1259 172h7v7h-7z"/><path fill="#9c5a10" d="M1266 172h7v7h-7z"/><path fill="#9c5210" d="M1273 172h7v7h-7z"/><path fill="#9c4a10" d="M1280 172h14v7h-14z"/><path fill="#9c4210" d="M1294 172h7v7h-7z"/><path fill="#9c3a10" d="M1301 172h7v7h-7zM1301 179h14v7h-14z"/><path fill="#9c3108" d="M1315 172h14v7h-14z"/><path fill="#9c2908" d="M1329 172h14v7h-14z"/><path fill="#9c2108" d="M1343 172h28v7h-28zM1343 179h21v7h-21z"/><path fill="#009c31" d="M1014 179h147v7h-147z"/><path fill="#089c31" d="M1161 179h7v7h-7z"/><path fill="#199c31" d="M1168 179h7v7h-7z"/><path fill="#219c31" d="M1175 179h7v7h-7z"/><path fill="#319c31" d="M1182 179h7v7h-7z"/><path fill="#3a9c31" d="M1189 179h7v7h-7z"/><path fill="#4a9c31" d="M1196 179h7v7h-7z"/><path fill="#5a9c31" d="M1203 179h7v7h-7z"/><path fill="#6b9c31" d="M1210 179h7v7h-7z"/><path fill="#739c31" d="M1217 179h7v7h-7z"/><path fill="#849c31" d="M1224 179h7v7h-7z"/><path fill="#9c9c31" d="M1231 179h7v7h-7z"/><path fill="#9c8c29" d="M1238 179h7v7h-7z"/><path fill="#9c7b29" d="M1245 179h7v7h-7z"/><path fill="#9c6b21" d="M1252 179h7v7h-7z"/><path fill="#9c6321" d="M1259 179h7v7h-7z"/><path fill="#9c5a21" d="M1266 179h7v7h-7z"/><path fill="#9c5219" d="M1273 179h7v7h-7z"/><path fill="#9c4a19" d="M1280 179h7v7h-7z"/><path fill="#9c4219" d="M1287 179h14v7h-14zM1294 186h7v7h-7z"/><path fill="#9c3110" d="M1315 179h14v7h-14z"/><path fill="#9c2910" d="M1329 179h14v7h-14zM1329 186h14v7h-14z"/><path fill="#9c1908" d="M1364 179h28v7h-28z"/><path fill="#9c1008" d="M1392 179h35v7h-35zM1385 186h35v7h-35z"/><path fill="#9c0808" d="M1427 179h7v7h-7zM1420 186h42v7h-42zM1420 193h35v7h-35z"/><path fill="#009c3a" d="M1014 186h147v7h-147z"/><path fill="#089c3a" d="M1161 186h7v7h-7z"/><path fill="#109c3a" d="M1168 186h7v7h-7z"/><path fill="#219c3a" d="M1175 186h7v7h-7z"/><path fill="#319c3a" d="M1182 186h7v7h-7z"/><path fill="#3a9c3a" d="M1189 186h7v7h-7z"/><path fill="#4a9c42" d="M1196 186h7v7h-7z"/><path fill="#5a9c42" d="M1203 186h7v7h-7z"/><path fill="#6b9c42" d="M1210 186h7v7h-7z"/><path fill="#7b9c42" d="M1217 186h7v7h-7z"/><path fill="#8c9c42" d="M1224 186h7v7h-7z"/><path fill="#9c9442" d="M1231 186h7v7h-7z"/><path fill="#9c843a" d="M1238 186h7v7h-7z"/><path fill="#9c7b31" d="M1245 186h7v7h-7z"/><path fill="#9c6b31" d="M1252 186h7v7h-7z"/><path fill="#9c6329" d="M1259 186h7v7h-7z"/><path fill="#9c5a29" d="M1266 186h7v7h-7z"/><path fill="#9c5221" d="M1273 186h7v7h-7z"/><path fill="#9c4a21" d="M1280 186h7v7h-7z"/><path fill="#9c4221" d="M1287 186h7v7h-7z"/><path fill="#9c3a19" d="M1301 186h7v7h-7z"/><path fill="#9c3119" d="M1308 186h14v7h-14z"/><path fill="#9c2919" d="M1322 186h7v7h-7zM1322 193h14v7h-14z"/><path fill="#9c2110" d="M1343 186h14v7h-14z"/><path fill="#9c1910" d="M1357 186h28v7h-28zM1357 193h21v7h-21z"/><path fill="#9c0008" d="M1462 186h28v7h-28zM1455 193h91v7h-91zM1462 200h140v7h-140zM1504 207h154v7h-154zM1539 214h126v7h-126zM1581 221h84v7h-84zM1623 228h35v7h-35z"/><path fill="#009c42" d="M1014 193h119v7h-119z"/><path fill="#009c4a" d="M1133 193h28v7h-28zM1021 200h77v7h-77z"/><path fill="#089c4a" d="M1161 193h7v7h-7z"/><path fill="#109c4a" d="M1168 193h7v7h-7z"/><path fill="#219c4a" d="M1175 193h7v7h-7z"/><path fill="#299c4a" d="M1182 193h7v7h-7z"/><path fill="#3a9c4a" d="M1189 193h7v7h-7z"/><path fill="#4a9c4a" d="M1196 193h7v7h-7z"/><path fill="#5a9c4a" d="M1203 193h7v7h-7z"/><path fill="#6b9c4a" d="M1210 193h7v7h-7z"/><path fill="#7b9c4a" d="M1217 193h7v7h-7z"/><path fill="#8c9c52" d="M1224 193h7v7h-7z"/><path fill="#9c944a" d="M1231 193h7v7h-7z"/><path fill="#9c8442" d="M1238 193h7v7h-7z"/><path fill="#9c7342" d="M1245 193h7v7h-7z"/><path fill="#9c6b3a" d="M1252 193h7v7h-7z"/><path fill="#9c6331" d="M1259 193h7v7h-7z"/><path fill="#9c5a31" d="M1266 193h7v7h-7z"/><path fill="#9c5229" d="M1273 193h7v7h-7z"/><path fill="#9c4a29" d="M1280 193h7v7h-7z"/><path fill="#9c4229" d="M1287 193h7v7h-7z"/><path fill="#9c3a21" d="M1294 193h14v7h-14z"/><path fill="#9c3121" d="M1308 193h14v7h-14z"/><path fill="#9c2119" d="M1336 193h21v7h-21zM1343 200h7v7h-7z"/><path fill="#9c1010" d="M1378 193h35v7h-35zM1392 200h14v7h-14z"/><path fill="#9c0810" d="M1413 193h7v7h-7zM1406 200h42v7h-42zM1420 207h21v7h-21z"/><path fill="#009c52" d="M1098 200h63v7h-63zM1021 207h56v7h-56z"/><path fill="#089c52" d="M1161 200h7v7h-7z"/><path fill="#109c52" d="M1168 200h7v7h-7z"/><path fill="#219c5a" d="M1175 200h7v7h-7z"/><path fill="#299c5a" d="M1182 200h7v7h-7z"/><path fill="#3a9c5a" d="M1189 200h7v7h-7z"/><path fill="#4a9c5a" d="M1196 200h7v7h-7z"/><path fill="#5a9c5a" d="M1203 200h7v7h-7z"/><path fill="#6b9c5a" d="M1210 200h7v7h-7z"/><path fill="#7b9c5a" d="M1217 200h7v7h-7z"/><path fill="#8c9c63" d="M1224 200h7v7h-7z"/><path fill="#9c945a" d="M1231 200h7v7h-7z"/><path fill="#9c8452" d="M1238 200h7v7h-7z"/><path fill="#9c734a" d="M1245 200h7v7h-7z"/><path fill="#9c6b42" d="M1252 200h7v7h-7z"/><path fill="#9c5a42" d="M1259 200h7v7h-7z"/><path fill="#9c523a" d="M1266 200h7v7h-7z"/><path fill="#9c4a3a" d="M1273 200h7v7h-7z"/><path fill="#9c4a31" d="M1280 200h7v7h-7z"/><path fill="#9c4231" d="M1287 200h7v7h-7z"/><path fill="#9c3a29" d="M1294 200h7v7h-7z"/><path fill="#9c3129" d="M1301 200h14v7h-14zM1308 207h7v7h-7z"/><path fill="#9c2921" d="M1315 200h21v7h-21z"/><path fill="#9c2121" d="M1336 200h7v7h-7zM1336 207h14v7h-14z"/><path fill="#9c1919" d="M1350 200h28v7h-28z"/><path fill="#9c1019" d="M1378 200h14v7h-14zM1371 207h35v7h-35zM1392 214h7v7h-7z"/><path fill="#9c0010" d="M1448 200h14v7h-14zM1441 207h63v7h-63zM1448 214h91v7h-91zM1476 221h105v7h-105zM1511 228h112v7h-112zM1539 235h112v7h-112zM1567 242h77v7h-77zM1602 249h35v7h-35z"/><path fill="#009c5a" d="M1077 207h63v7h-63zM1021 214h35v7h-35z"/><path fill="#009c63" d="M1140 207h28v7h-28zM1056 214h63v7h-63zM1028 221h14v7h-14z"/><path fill="#109c63" d="M1168 207h7v7h-7z"/><path fill="#199c63" d="M1175 207h7v7h-7z"/><path fill="#299c63" d="M1182 207h7v7h-7z"/><path fill="#3a9c6b" d="M1189 207h7v7h-7z"/><path fill="#4a9c6b" d="M1196 207h7v7h-7z"/><path fill="#5a9c6b" d="M1203 207h7v7h-7z"/><path fill="#6b9c6b" d="M1210 207h7v7h-7z"/><path fill="#7b9c6b" d="M1217 207h7v7h-7z"/><path fill="#8c9c73" d="M1224 207h7v7h-7z"/><path fill="#9c946b" d="M1231 207h7v7h-7z"/><path fill="#9c8463" d="M1238 207h7v7h-7z"/><path fill="#9c735a" d="M1245 207h7v7h-7z"/><path fill="#9c6352" d="M1252 207h7v7h-7z"/><path fill="#9c5a4a" d="M1259 207h7v7h-7z"/><path fill="#9c5242" d="M1266 207h7v7h-7z"/><path fill="#9c4a42" d="M1273 207h7v7h-7z"/><path fill="#9c423a" d="M1280 207h14v7h-14z"/><path fill="#9c3a31" d="M1294 207h7v7h-7z"/><path fill="#9c3131" d="M1301 207h7v7h-7zM1308 214h7v7h-7z"/><path fill="#9c2929" d="M1315 207h14v7h-14z"/><path fill="#9c2129" d="M1329 207h7v7h-7zM1329 214h14v7h-14z"/><path fill="#9c1921" d="M1350 207h21v7h-21zM1357 214h14v7h-14z"/><path fill="#9c0819" d="M1406 207h14v7h-14zM1399 214h42v7h-42zM1420 221h14v7h-14z"/><path fill="#009c6b" d="M1119 214h42v7h-42zM1042 221h56v7h-56z"/><path fill="#009c73" d="M1161 214h7v7h-7zM1098 221h35v7h-35zM1028 228h49v7h-49z"/><path fill="#109c73" d="M1168 214h7v7h-7z"/><path fill="#199c73" d="M1175 214h7v7h-7z"/><path fill="#299c73" d="M1182 214h7v7h-7z"/><path fill="#3a9c73" d="M1189 214h7v7h-7z"/><path fill="#4a9c7b" d="M1196 214h7v7h-7z"/><path fill="#5a9c7b" d="M1203 214h7v7h-7z"/><path fill="#6b9c7b" d="M1210 214h7v7h-7z"/><path fill="#7b9c7b" d="M1217 214h7v7h-7z"/><path fill="#8c9c84" d="M1224 214h7v7h-7z"/><path fill="#9c8c7b" d="M1231 214h7v7h-7z"/><path fill="#9c7b73" d="M1238 214h7v7h-7z"/><path fill="#9c7363" d="M1245 214h7v7h-7z"/><path fill="#9c635a" d="M1252 214h7v7h-7z"/><path fill="#9c5a52" d="M1259 214h7v7h-7z"/><path fill="#9c5252" d="M1266 214h7v7h-7z"/><path fill="#9c4a4a" d="M1273 214h7v7h-7z"/><path fill="#9c4242" d="M1280 214h7v7h-7z"/><path fill="#9c3a42" d="M1287 214h7v7h-7z"/><path fill="#9c3a3a" d="M1294 214h7v7h-7z"/><path fill="#9c313a" d="M1301 214h7v7h-7z"/><path fill="#9c2931" d="M1315 214h14v7h-14z"/><path fill="#9c1929" d="M1343 214h14v7h-14zM1350 221h14v7h-14z"/><path fill="#9c1021" d="M1371 214h21v7h-21zM1378 221h14v7h-14z"/><path fill="#9c0019" d="M1441 214h7v7h-7zM1434 221h42v7h-42zM1441 228h70v7h-70zM1469 235h70v7h-70zM1490 242h77v7h-77zM1518 249h84v7h-84zM1539 256h91v7h-91zM1567 263h56v7h-56zM1588 270h28v7h-28z"/><path fill="#009c7b" d="M1133 221h35v7h-35zM1077 228h35v7h-35zM1028 235h35v7h-35z"/><path fill="#089c84" d="M1168 221h7v7h-7z"/><path fill="#199c84" d="M1175 221h7v7h-7z"/><path fill="#299c84" d="M1182 221h7v7h-7z"/><path fill="#3a9c84" d="M1189 221h7v7h-7z"/><path fill="#4a9c8c" d="M1196 221h7v7h-7z"/><path fill="#5a9c8c" d="M1203 221h7v7h-7z"/><path fill="#6b9c8c" d="M1210 221h7v7h-7z"/><path fill="#7b9c94" d="M1217 221h7v7h-7z"/><path fill="#949c94" d="M1224 221h7v7h-7z"/><path fill="#9c8c8c" d="M1231 221h7v7h-7z"/><path fill="#9c7b7b" d="M1238 221h7v7h-7z"/><path fill="#9c6b73" d="M1245 221h7v7h-7z"/><path fill="#9c636b" d="M1252 221h7v7h-7z"/><path fill="#9c5a63" d="M1259 221h7v7h-7z"/><path fill="#9c525a" d="M1266 221h7v7h-7z"/><path fill="#9c4a52" d="M1273 221h7v7h-7z"/><path fill="#9c424a" d="M1280 221h7v7h-7z"/><path fill="#9c3a4a" d="M1287 221h7v7h-7z"/><path fill="#9c3142" d="M1294 221h14v7h-14z"/><path fill="#9c293a" d="M1308 221h14v7h-14z"/><path fill="#9c2131" d="M1322 221h21v7h-21z"/><path fill="#9c1931" d="M1343 221h7v7h-7zM1343 228h14v7h-14z"/><path fill="#9c1029" d="M1364 221h14v7h-14zM1364 228h21v7h-21z"/><path fill="#9c0821" d="M1392 221h28v7h-28zM1399 228h28v7h-28z"/><path fill="#009c84" d="M1112 228h35v7h-35zM1063 235h35v7h-35zM1028 242h21v7h-21z"/><path fill="#009c8c" d="M1147 228h21v7h-21zM1098 235h28v7h-28zM1049 242h35v7h-35z"/><path fill="#089c8c" d="M1168 228h7v7h-7z"/><path fill="#199c94" d="M1175 228h7v7h-7z"/><path fill="#299c94" d="M1182 228h7v7h-7z"/><path fill="#3a9c94" d="M1189 228h7v7h-7z"/><path fill="#42949c" d="M1196 228h7v7h-7z"/><path fill="#52949c" d="M1203 228h7v7h-7z"/><path fill="#63949c" d="M1210 228h7v7h-7z"/><path fill="#738c9c" d="M1217 228h7v7h-7z"/><path fill="#848c9c" d="M1224 228h7v7h-7z"/><path fill="#94849c" d="M1231 228h7v7h-7z"/><path fill="#9c7b8c" d="M1238 228h7v7h-7z"/><path fill="#9c6b84" d="M1245 228h7v7h-7z"/><path fill="#9c6373" d="M1252 228h7v7h-7z"/><path fill="#9c526b" d="M1259 228h7v7h-7z"/><path fill="#9c4a63" d="M1266 228h7v7h-7z"/><path fill="#9c425a" d="M1273 228h7v7h-7z"/><path fill="#9c4252" d="M1280 228h7v7h-7z"/><path fill="#9c3a52" d="M1287 228h7v7h-7z"/><path fill="#9c314a" d="M1294 228h14v7h-14z"/><path fill="#9c2942" d="M1308 228h14v7h-14z"/><path fill="#9c213a" d="M1322 228h14v7h-14z"/><path fill="#9c193a" d="M1336 228h7v7h-7zM1336 235h21v7h-21z"/><path fill="#9c1031" d="M1357 228h7v7h-7zM1357 235h28v7h-28zM1371 242h7v7h-7z"/><path fill="#9c0829" d="M1385 228h14v7h-14zM1385 235h35v7h-35zM1399 242h14v7h-14z"/><path fill="#9c0021" d="M1427 228h14v7h-14zM1420 235h49v7h-49zM1441 242h49v7h-49zM1462 249h56v7h-56zM1483 256h56v7h-56zM1497 263h70v7h-70zM1518 270h70v7h-70zM1539 277h70v7h-70zM1560 284h42v7h-42zM1581 291h14v7h-14z"/><path fill="#009c94" d="M1126 235h28v7h-28zM1084 242h21v7h-21zM1035 249h28v7h-28z"/><path fill="#00949c" d="M1154 235h14v7h-14zM1112 242h28v7h-28zM1070 249h28v7h-28zM1035 256h21v7h-21z"/><path fill="#08949c" d="M1168 235h7v7h-7z"/><path fill="#198c9c" d="M1175 235h7v7h-7z"/><path fill="#218c9c" d="M1182 235h7v7h-7z"/><path fill="#318c9c" d="M1189 235h7v7h-7z"/><path fill="#42849c" d="M1196 235h7v7h-7z"/><path fill="#4a849c" d="M1203 235h7v7h-7z"/><path fill="#5a849c" d="M1210 235h7v7h-7z"/><path fill="#6b7b9c" d="M1217 235h7v7h-7z"/><path fill="#737b9c" d="M1224 235h7v7h-7z"/><path fill="#847b9c" d="M1231 235h7v7h-7z"/><path fill="#94739c" d="M1238 235h7v7h-7z"/><path fill="#9c6b8c" d="M1245 235h7v7h-7z"/><path fill="#9c5a84" d="M1252 235h7v7h-7z"/><path fill="#9c5273" d="M1259 235h7v7h-7z"/><path fill="#9c4a6b" d="M1266 235h7v7h-7z"/><path fill="#9c4263" d="M1273 235h7v7h-7z"/><path fill="#9c3a63" d="M1280 235h7v7h-7z"/><path fill="#9c3a5a" d="M1287 235h7v7h-7z"/><path fill="#9c3152" d="M1294 235h7v7h-7z"/><path fill="#9c2952" d="M1301 235h7v7h-7zM1308 242h7v7h-7z"/><path fill="#9c294a" d="M1308 235h7v7h-7z"/><path fill="#9c214a" d="M1315 235h7v7h-7zM1315 242h14v7h-14z"/><path fill="#9c2142" d="M1322 235h14v7h-14z"/><path fill="#009c9c" d="M1105 242h7v7h-7zM1063 249h7v7h-7z"/><path fill="#008c9c" d="M1140 242h21v7h-21zM1098 249h28v7h-28zM1056 256h35v7h-35zM1042 263h7v7h-7z"/><path fill="#00849c" d="M1161 242h7v7h-7zM1126 249h21v7h-21zM1091 256h21v7h-21zM1049 263h35v7h-35zM1042 270h7v7h-7z"/><path fill="#08849c" d="M1168 242h7v7h-7z"/><path fill="#10849c" d="M1175 242h7v7h-7z"/><path fill="#217b9c" d="M1182 242h7v7h-7z"/><path fill="#297b9c" d="M1189 242h7v7h-7z"/><path fill="#3a7b9c" d="M1196 242h7v7h-7z"/><path fill="#42739c" d="M1203 242h7v7h-7z"/><path fill="#52739c" d="M1210 242h7v7h-7z"/><path fill="#5a739c" d="M1217 242h7v7h-7z"/><path fill="#6b6b9c" d="M1224 242h7v7h-7z"/><path fill="#7b6b9c" d="M1231 242h7v7h-7z"/><path fill="#846b9c" d="M1238 242h7v7h-7z"/><path fill="#94639c" d="M1245 242h7v7h-7z"/><path fill="#9c5a8c" d="M1252 242h7v7h-7z"/><path fill="#9c5284" d="M1259 242h7v7h-7z"/><path fill="#9c4a7b" d="M1266 242h7v7h-7z"/><path fill="#9c4273" d="M1273 242h7v7h-7z"/><path fill="#9c3a6b" d="M1280 242h7v7h-7z"/><path fill="#9c3163" d="M1287 242h7v7h-7zM1294 249h7v7h-7z"/><path fill="#9c315a" d="M1294 242h7v7h-7z"/><path fill="#9c295a" d="M1301 242h7v7h-7z"/><path fill="#9c1942" d="M1329 242h21v7h-21zM1343 249h7v7h-7z"/><path fill="#9c103a" d="M1350 242h21v7h-21zM1364 249h7v7h-7z"/><path fill="#9c0831" d="M1378 242h21v7h-21zM1385 249h21v7h-21z"/><path fill="#9c0029" d="M1413 242h28v7h-28zM1420 249h42v7h-42zM1434 256h49v7h-49zM1455 263h42v7h-42zM1469 270h49v7h-49zM1490 277h49v7h-49zM1511 284h49v7h-49zM1525 291h56v7h-56zM1546 298h42v7h-42zM1560 305h21v7h-21z"/><path fill="#007b9c" d="M1147 249h28v7h-28zM1112 256h28v7h-28zM1084 263h28v7h-28zM1049 270h28v7h-28z"/><path fill="#10739c" d="M1175 249h7v7h-7z"/><path fill="#19739c" d="M1182 249h7v7h-7z"/><path fill="#29739c" d="M1189 249h7v7h-7z"/><path fill="#316b9c" d="M1196 249h7v7h-7z"/><path fill="#3a6b9c" d="M1203 249h7v7h-7z"/><path fill="#4a6b9c" d="M1210 249h7v7h-7z"/><path fill="#52639c" d="M1217 249h7v7h-7z"/><path fill="#63639c" d="M1224 249h7v7h-7z"/><path fill="#6b639c" d="M1231 249h7v7h-7z"/><path fill="#7b5a9c" d="M1238 249h7v7h-7z"/><path fill="#8c5a9c" d="M1245 249h7v7h-7z"/><path fill="#945a9c" d="M1252 249h7v7h-7z"/><path fill="#9c528c" d="M1259 249h7v7h-7z"/><path fill="#9c4a84" d="M1266 249h7v7h-7z"/><path fill="#9c427b" d="M1273 249h7v7h-7z"/><path fill="#9c3a73" d="M1280 249h7v7h-7z"/><path fill="#9c316b" d="M1287 249h7v7h-7z"/><path fill="#9c2963" d="M1301 249h7v7h-7z"/><path fill="#9c215a" d="M1308 249h7v7h-7zM1315 256h7v7h-7z"/><path fill="#9c2152" d="M1315 249h14v7h-14z"/><path fill="#9c194a" d="M1329 249h14v7h-14z"/><path fill="#9c1042" d="M1350 249h14v7h-14zM1357 256h14v7h-14z"/><path fill="#9c083a" d="M1371 249h14v7h-14zM1378 256h21v7h-21z"/><path fill="#9c0031" d="M1406 249h14v7h-14zM1406 256h28v7h-28zM1420 263h35v7h-35zM1434 270h35v7h-35zM1448 277h42v7h-42zM1469 284h42v7h-42zM1483 291h42v7h-42zM1497 298h49v7h-49zM1511 305h49v7h-49zM1532 312h42v7h-42zM1546 319h21v7h-21z"/><path fill="#00739c" d="M1140 256h28v7h-28zM1112 263h21v7h-21zM1077 270h28v7h-28zM1042 277h35v7h-35z"/><path fill="#006b9c" d="M1168 256h7v7h-7zM1133 263h28v7h-28zM1105 270h28v7h-28zM1077 277h28v7h-28zM1049 284h28v7h-28z"/><path fill="#086b9c" d="M1175 256h7v7h-7z"/><path fill="#196b9c" d="M1182 256h7v7h-7z"/><path fill="#21639c" d="M1189 256h7v7h-7z"/><path fill="#29639c" d="M1196 256h7v7h-7z"/><path fill="#3a639c" d="M1203 256h7v7h-7z"/><path fill="#425a9c" d="M1210 256h7v7h-7z"/><path fill="#525a9c" d="M1217 256h7v7h-7z"/><path fill="#5a5a9c" d="M1224 256h7v7h-7z"/><path fill="#63529c" d="M1231 256h7v7h-7z"/><path fill="#73529c" d="M1238 256h7v7h-7z"/><path fill="#7b529c" d="M1245 256h7v7h-7z"/><path fill="#8c529c" d="M1252 256h7v7h-7z"/><path fill="#944a9c" d="M1259 256h7v7h-7z"/><path fill="#9c4294" d="M1266 256h7v7h-7z"/><path fill="#9c3a84" d="M1273 256h7v7h-7z"/><path fill="#9c3a7b" d="M1280 256h7v7h-7z"/><path fill="#9c3173" d="M1287 256h7v7h-7z"/><path fill="#9c296b" d="M1294 256h14v7h-14z"/><path fill="#9c2163" d="M1308 256h7v7h-7zM1315 263h7v7h-7z"/><path fill="#9c195a" d="M1322 256h7v7h-7zM1322 263h14v7h-14z"/><path fill="#9c1952" d="M1329 256h14v7h-14z"/><path fill="#9c104a" d="M1343 256h14v7h-14zM1350 263h14v7h-14z"/><path fill="#9c0842" d="M1371 256h7v7h-7zM1371 263h21v7h-21zM1385 270h7v7h-7z"/><path fill="#9c003a" d="M1399 256h7v7h-7zM1392 263h28v7h-28zM1406 270h28v7h-28zM1420 277h28v7h-28zM1434 284h35v7h-35zM1448 291h35v7h-35zM1462 298h35v7h-35zM1476 305h35v7h-35zM1490 312h42v7h-42zM1504 319h42v7h-42zM1518 326h42v7h-42zM1532 333h28v7h-28zM1546 340h7v7h-7z"/><path fill="#00639c" d="M1161 263h14v7h-14zM1133 270h28v7h-28zM1105 277h28v7h-28zM1077 284h35v7h-35zM1049 291h35v7h-35z"/><path fill="#08639c" d="M1175 263h7v7h-7z"/><path fill="#10639c" d="M1182 263h7v7h-7z"/><path fill="#215a9c" d="M1189 263h7v7h-7z"/><path fill="#295a9c" d="M1196 263h7v7h-7z"/><path fill="#315a9c" d="M1203 263h7v7h-7z"/><path fill="#3a529c" d="M1210 263h7v7h-7z"/><path fill="#4a529c" d="M1217 263h7v7h-7z"/><path fill="#52529c" d="M1224 263h7v7h-7z"/><path fill="#5a4a9c" d="M1231 263h7v7h-7z"/><path fill="#6b4a9c" d="M1238 263h7v7h-7z"/><path fill="#734a9c" d="M1245 263h7v7h-7z"/><path fill="#7b4a9c" d="M1252 263h7v7h-7z"/><path fill="#8c429c" d="M1259 263h7v7h-7z"/><path fill="#94429c" d="M1266 263h7v7h-7z"/><path fill="#9c3a94" d="M1273 263h7v7h-7z"/><path fill="#9c3184" d="M1280 263h7v7h-7z"/><path fill="#9c317b" d="M1287 263h7v7h-7z"/><path fill="#9c2973" d="M1294 263h14v7h-14z"/><path fill="#9c216b" d="M1308 263h7v7h-7z"/><path fill="#9c1052" d="M1336 263h14v7h-14zM1350 270h7v7h-7z"/><path fill="#9c084a" d="M1364 263h7v7h-7zM1364 270h21v7h-21zM1378 277h7v7h-7z"/><path fill="#005a9c" d="M1161 270h14v7h-14zM1133 277h28v7h-28zM1112 284h28v7h-28zM1084 291h35v7h-35zM1056 298h35v7h-35zM1056 305h14v7h-14z"/><path fill="#085a9c" d="M1175 270h7v7h-7z"/><path fill="#105a9c" d="M1182 270h7v7h-7z"/><path fill="#19529c" d="M1189 270h7v7h-7z"/><path fill="#21529c" d="M1196 270h7v7h-7z"/><path fill="#31529c" d="M1203 270h7v7h-7z"/><path fill="#3a4a9c" d="M1210 270h7v7h-7z"/><path fill="#424a9c" d="M1217 270h7v7h-7z"/><path fill="#4a4a9c" d="M1224 270h7v7h-7z"/><path fill="#524a9c" d="M1231 270h7v7h-7z"/><path fill="#63429c" d="M1238 270h7v7h-7z"/><path fill="#6b429c" d="M1245 270h7v7h-7z"/><path fill="#73429c" d="M1252 270h7v7h-7z"/><path fill="#843a9c" d="M1259 270h7v7h-7z"/><path fill="#8c3a9c" d="M1266 270h7v7h-7z"/><path fill="#943a9c" d="M1273 270h7v7h-7z"/><path fill="#9c3194" d="M1280 270h7v7h-7z"/><path fill="#9c298c" d="M1287 270h7v7h-7zM1294 277h7v7h-7z"/><path fill="#9c297b" d="M1294 270h7v7h-7z"/><path fill="#9c217b" d="M1301 270h7v7h-7zM1308 277h7v7h-7z"/><path fill="#9c2173" d="M1308 270h7v7h-7z"/><path fill="#9c196b" d="M1315 270h7v7h-7zM1322 277h7v7h-7z"/><path fill="#9c1963" d="M1322 270h14v7h-14z"/><path fill="#9c105a" d="M1336 270h14v7h-14zM1343 277h7v7h-7z"/><path fill="#9c0852" d="M1357 270h7v7h-7zM1357 277h21v7h-21zM1371 284h7v7h-7z"/><path fill="#9c0042" d="M1392 270h14v7h-14zM1399 277h21v7h-21zM1406 284h28v7h-28zM1420 291h28v7h-28zM1434 298h28v7h-28zM1448 305h28v7h-28zM1462 312h28v7h-28zM1476 319h28v7h-28zM1490 326h28v7h-28zM1497 333h35v7h-35zM1511 340h35v7h-35zM1525 347h21v7h-21z"/><path fill="#00529c" d="M1161 277h14v7h-14zM1140 284h28v7h-28zM1119 291h28v7h-28zM1091 298h35v7h-35zM1070 305h35v7h-35zM1063 312h21v7h-21z"/><path fill="#08529c" d="M1175 277h7v7h-7z"/><path fill="#10529c" d="M1182 277h7v7h-7z"/><path fill="#194a9c" d="M1189 277h7v7h-7zM1189 284h7v7h-7z"/><path fill="#214a9c" d="M1196 277h7v7h-7z"/><path fill="#294a9c" d="M1203 277h7v7h-7z"/><path fill="#314a9c" d="M1210 277h7v7h-7z"/><path fill="#3a429c" d="M1217 277h7v7h-7zM1217 284h7v7h-7z"/><path fill="#4a429c" d="M1224 277h7v7h-7z"/><path fill="#52429c" d="M1231 277h7v7h-7z"/><path fill="#5a3a9c" d="M1238 277h7v7h-7zM1245 284h7v7h-7z"/><path fill="#633a9c" d="M1245 277h7v7h-7z"/><path fill="#6b3a9c" d="M1252 277h7v7h-7z"/><path fill="#7b3a9c" d="M1259 277h7v7h-7z"/><path fill="#84319c" d="M1266 277h7v7h-7z"/><path fill="#8c319c" d="M1273 277h7v7h-7z"/><path fill="#94319c" d="M1280 277h7v7h-7z"/><path fill="#9c2994" d="M1287 277h7v7h-7z"/><path fill="#9c2184" d="M1301 277h7v7h-7z"/><path fill="#9c1973" d="M1315 277h7v7h-7z"/><path fill="#9c106b" d="M1329 277h7v7h-7zM1329 284h14v7h-14z"/><path fill="#9c1063" d="M1336 277h7v7h-7zM1343 284h7v7h-7z"/><path fill="#9c085a" d="M1350 277h7v7h-7zM1357 284h14v7h-14zM1364 291h7v7h-7z"/><path fill="#9c004a" d="M1385 277h14v7h-14zM1385 284h21v7h-21zM1399 291h21v7h-21zM1413 298h21v7h-21zM1427 305h21v7h-21zM1434 312h28v7h-28zM1448 319h28v7h-28zM1462 326h28v7h-28zM1469 333h28v7h-28zM1483 340h28v7h-28zM1497 347h28v7h-28zM1504 354h35v7h-35zM1518 361h14v7h-14z"/><path fill="#004a9c" d="M1168 284h14v7h-14zM1147 291h28v7h-28zM1126 298h28v7h-28zM1105 305h35v7h-35zM1084 312h35v7h-35zM1063 319h35v7h-35zM1070 326h7v7h-7z"/><path fill="#104a9c" d="M1182 284h7v7h-7z"/><path fill="#21429c" d="M1196 284h7v7h-7z"/><path fill="#29429c" d="M1203 284h7v7h-7z"/><path fill="#31429c" d="M1210 284h7v7h-7z"/><path fill="#423a9c" d="M1224 284h7v7h-7z"/><path fill="#4a3a9c" d="M1231 284h7v7h-7z"/><path fill="#523a9c" d="M1238 284h7v7h-7z"/><path fill="#63319c" d="M1252 284h7v7h-7zM1252 291h7v7h-7z"/><path fill="#73319c" d="M1259 284h7v7h-7z"/><path fill="#7b319c" d="M1266 284h7v7h-7z"/><path fill="#84299c" d="M1273 284h7v7h-7zM1280 291h7v7h-7z"/><path fill="#8c299c" d="M1280 284h7v7h-7z"/><path fill="#94299c" d="M1287 284h7v7h-7z"/><path fill="#9c2194" d="M1294 284h7v7h-7zM1301 291h7v7h-7z"/><path fill="#9c218c" d="M1301 284h7v7h-7z"/><path fill="#9c1984" d="M1308 284h7v7h-7zM1315 291h7v7h-7z"/><path fill="#9c197b" d="M1315 284h7v7h-7z"/><path fill="#9c1073" d="M1322 284h7v7h-7zM1329 291h14v7h-14z"/><path fill="#9c0863" d="M1350 284h7v7h-7zM1350 291h14v7h-14z"/><path fill="#9c0052" d="M1378 284h7v7h-7zM1385 291h14v7h-14zM1392 298h21v7h-21zM1406 305h21v7h-21zM1413 312h21v7h-21zM1427 319h21v7h-21zM1434 326h28v7h-28zM1448 333h21v7h-21zM1455 340h28v7h-28zM1469 347h28v7h-28zM1483 354h21v7h-21zM1490 361h28v7h-28zM1504 368h21v7h-21zM1511 375h7v7h-7z"/><path fill="#00429c" d="M1175 291h7v7h-7zM1154 298h28v7h-28zM1140 305h28v7h-28zM1119 312h28v7h-28zM1098 319h35v7h-35zM1077 326h35v7h-35zM1070 333h28v7h-28z"/><path fill="#08429c" d="M1182 291h7v7h-7zM1182 298h7v7h-7z"/><path fill="#10429c" d="M1189 291h7v7h-7z"/><path fill="#19429c" d="M1196 291h7v7h-7z"/><path fill="#213a9c" d="M1203 291h7v7h-7zM1203 298h7v7h-7z"/><path fill="#293a9c" d="M1210 291h7v7h-7zM1210 298h7v7h-7z"/><path fill="#313a9c" d="M1217 291h7v7h-7z"/><path fill="#3a3a9c" d="M1224 291h7v7h-7z"/><path fill="#42319c" d="M1231 291h7v7h-7zM1231 298h7v7h-7z"/><path fill="#4a319c" d="M1238 291h7v7h-7zM1238 298h7v7h-7z"/><path fill="#5a319c" d="M1245 291h7v7h-7z"/><path fill="#6b299c" d="M1259 291h7v7h-7zM1266 298h7v7h-7z"/><path fill="#73299c" d="M1266 291h7v7h-7z"/><path fill="#7b299c" d="M1273 291h7v7h-7z"/><path fill="#8c219c" d="M1287 291h7v7h-7z"/><path fill="#94219c" d="M1294 291h7v7h-7z"/><path fill="#9c198c" d="M1308 291h7v7h-7z"/><path fill="#9c107b" d="M1322 291h7v7h-7zM1329 298h7v7h-7z"/><path fill="#9c086b" d="M1343 291h7v7h-7zM1350 298h14v7h-14z"/><path fill="#9c005a" d="M1371 291h14v7h-14zM1378 298h14v7h-14zM1385 305h21v7h-21zM1399 312h14v7h-14zM1406 319h21v7h-21zM1420 326h14v7h-14zM1427 333h21v7h-21zM1441 340h14v7h-14zM1448 347h21v7h-21zM1455 354h28v7h-28zM1469 361h21v7h-21zM1476 368h28v7h-28zM1490 375h21v7h-21zM1497 382h14v7h-14z"/><path fill="#103a9c" d="M1189 298h7v7h-7zM1189 305h7v7h-7z"/><path fill="#193a9c" d="M1196 298h7v7h-7z"/><path fill="#31319c" d="M1217 298h7v7h-7zM1224 305h7v7h-7z"/><path fill="#3a319c" d="M1224 298h7v7h-7z"/><path fill="#52299c" d="M1245 298h7v7h-7zM1252 305h7v7h-7z"/><path fill="#5a299c" d="M1252 298h7v7h-7z"/><path fill="#63299c" d="M1259 298h7v7h-7z"/><path fill="#73219c" d="M1273 298h7v7h-7zM1280 305h7v7h-7z"/><path fill="#7b219c" d="M1280 298h7v7h-7z"/><path fill="#84219c" d="M1287 298h7v7h-7z"/><path fill="#8c199c" d="M1294 298h7v7h-7zM1301 305h7v7h-7z"/><path fill="#94199c" d="M1301 298h7v7h-7zM1308 305h7v7h-7z"/><path fill="#9c1994" d="M1308 298h7v7h-7z"/><path fill="#9c108c" d="M1315 298h7v7h-7zM1322 305h7v7h-7z"/><path fill="#9c1084" d="M1322 298h7v7h-7z"/><path fill="#9c0873" d="M1336 298h14v7h-14zM1350 305h7v7h-7z"/><path fill="#9c0063" d="M1364 298h14v7h-14zM1371 305h14v7h-14zM1378 312h21v7h-21zM1392 319h14v7h-14zM1399 326h21v7h-21zM1413 333h14v7h-14zM1420 340h21v7h-21zM1427 347h21v7h-21zM1441 354h14v7h-14zM1448 361h21v7h-21zM1455 368h21v7h-21zM1469 375h21v7h-21zM1476 382h21v7h-21zM1490 389h14v7h-14z"/><path fill="#003a9c" d="M1168 305h14v7h-14zM1147 312h35v7h-35zM1133 319h35v7h-35zM1112 326h35v7h-35zM1098 333h35v7h-35zM1077 340h42v7h-42zM1077 347h21v7h-21z"/><path fill="#083a9c" d="M1182 305h7v7h-7z"/><path fill="#19319c" d="M1196 305h7v7h-7zM1203 312h7v7h-7z"/><path fill="#21319c" d="M1203 305h7v7h-7zM1210 312h7v7h-7z"/><path fill="#29319c" d="M1210 305h14v7h-14z"/><path fill="#3a299c" d="M1231 305h7v7h-7zM1231 312h7v7h-7z"/><path fill="#42299c" d="M1238 305h7v7h-7zM1238 312h7v7h-7z"/><path fill="#4a299c" d="M1245 305h7v7h-7z"/><path fill="#5a219c" d="M1259 305h7v7h-7zM1259 312h14v7h-14z"/><path fill="#63219c" d="M1266 305h7v7h-7z"/><path fill="#6b219c" d="M1273 305h7v7h-7z"/><path fill="#7b199c" d="M1287 305h7v7h-7zM1294 312h7v7h-7z"/><path fill="#84199c" d="M1294 305h7v7h-7z"/><path fill="#9c1094" d="M1315 305h7v7h-7zM1322 312h7v7h-7z"/><path fill="#9c0884" d="M1329 305h7v7h-7zM1336 312h7v7h-7z"/><path fill="#9c087b" d="M1336 305h14v7h-14zM1343 312h7v7h-7z"/><path fill="#9c006b" d="M1357 305h14v7h-14zM1371 312h7v7h-7zM1378 319h14v7h-14zM1385 326h14v7h-14zM1392 333h21v7h-21zM1406 340h14v7h-14zM1413 347h14v7h-14zM1420 354h21v7h-21zM1434 361h14v7h-14zM1441 368h14v7h-14zM1448 375h21v7h-21zM1455 382h21v7h-21zM1469 389h21v7h-21zM1476 396h21v7h-21zM1483 403h7v7h-7z"/><path fill="#08319c" d="M1182 312h7v7h-7zM1182 319h14v7h-14z"/><path fill="#10319c" d="M1189 312h14v7h-14z"/><path fill="#29299c" d="M1217 312h7v7h-7zM1217 319h7v7h-7z"/><path fill="#31299c" d="M1224 312h7v7h-7zM1224 319h7v7h-7z"/><path fill="#4a219c" d="M1245 312h7v7h-7zM1252 319h7v7h-7z"/><path fill="#52219c" d="M1252 312h7v7h-7z"/><path fill="#63199c" d="M1273 312h7v7h-7zM1273 319h7v7h-7z"/><path fill="#6b199c" d="M1280 312h7v7h-7zM1280 319h7v7h-7z"/><path fill="#73199c" d="M1287 312h7v7h-7zM1287 319h7v7h-7z"/><path fill="#84109c" d="M1301 312h7v7h-7zM1308 319h7v7h-7z"/><path fill="#8c109c" d="M1308 312h7v7h-7zM1315 319h7v7h-7z"/><path fill="#94109c" d="M1315 312h7v7h-7z"/><path fill="#9c088c" d="M1329 312h7v7h-7zM1336 319h7v7h-7z"/><path fill="#9c007b" d="M1350 312h7v7h-7zM1357 319h7v7h-7zM1364 326h7v7h-7zM1371 333h14v7h-14zM1378 340h14v7h-14zM1385 347h14v7h-14zM1392 354h14v7h-14zM1406 361h7v7h-7zM1413 368h14v7h-14zM1420 375h14v7h-14zM1427 382h14v7h-14zM1434 389h14v7h-14zM1441 396h21v7h-21zM1448 403h21v7h-21zM1462 410h14v7h-14zM1469 417h7v7h-7z"/><path fill="#9c0073" d="M1357 312h14v7h-14zM1364 319h14v7h-14zM1371 326h14v7h-14zM1385 333h7v7h-7zM1392 340h14v7h-14zM1399 347h14v7h-14zM1406 354h14v7h-14zM1413 361h21v7h-21zM1427 368h14v7h-14zM1434 375h14v7h-14zM1441 382h14v7h-14zM1448 389h21v7h-21zM1462 396h14v7h-14zM1469 403h14v7h-14zM1476 410h7v7h-7z"/><path fill="#00319c" d="M1168 319h14v7h-14zM1147 326h35v7h-35zM1133 333h35v7h-35zM1119 340h35v7h-35zM1098 347h42v7h-42zM1084 354h42v7h-42zM1084 361h28v7h-28zM1091 368h7v7h-7z"/><path fill="#10299c" d="M1196 319h7v7h-7zM1196 326h7v7h-7zM1196 333h7v7h-7z"/><path fill="#19299c" d="M1203 319h7v7h-7zM1203 326h7v7h-7z"/><path fill="#21299c" d="M1210 319h7v7h-7zM1210 326h7v7h-7z"/><path fill="#31219c" d="M1231 319h7v7h-7zM1231 326h7v7h-7zM1231 333h7v7h-7z"/><path fill="#3a219c" d="M1238 319h7v7h-7zM1238 326h7v7h-7z"/><path fill="#42219c" d="M1245 319h7v7h-7zM1245 326h7v7h-7z"/><path fill="#52199c" d="M1259 319h7v7h-7zM1266 326h7v7h-7zM1266 333h7v7h-7z"/><path fill="#5a199c" d="M1266 319h7v7h-7zM1273 326h7v7h-7z"/><path fill="#7b109c" d="M1294 319h14v7h-14zM1301 326h7v7h-7z"/><path fill="#94089c" d="M1322 319h7v7h-7zM1329 326h7v7h-7z"/><path fill="#9c0894" d="M1329 319h7v7h-7z"/><path fill="#9c0084" d="M1343 319h14v7h-14zM1350 326h14v7h-14zM1357 333h14v7h-14zM1371 340h7v7h-7zM1378 347h7v7h-7zM1385 354h7v7h-7zM1392 361h14v7h-14zM1399 368h14v7h-14zM1406 375h14v7h-14zM1413 382h14v7h-14zM1420 389h14v7h-14zM1427 396h14v7h-14zM1434 403h14v7h-14zM1448 410h14v7h-14zM1455 417h14v7h-14zM1462 424h7v7h-7z"/><path fill="#00299c" d="M1182 326h7v7h-7zM1168 333h21v7h-21zM1154 340h35v7h-35zM1140 347h35v7h-35zM1126 354h42v7h-42zM1112 361h42v7h-42zM1098 368h42v7h-42zM1091 375h35v7h-35zM1098 382h14v7h-14z"/><path fill="#08299c" d="M1189 326h7v7h-7zM1189 333h7v7h-7z"/><path fill="#21219c" d="M1217 326h7v7h-7zM1217 333h7v7h-7zM1217 340h7v7h-7z"/><path fill="#29219c" d="M1224 326h7v7h-7zM1224 333h7v7h-7z"/><path fill="#4a199c" d="M1252 326h14v7h-14zM1259 333h7v7h-7z"/><path fill="#63109c" d="M1280 326h7v7h-7zM1287 333h7v7h-7zM1287 340h7v7h-7z"/><path fill="#6b109c" d="M1287 326h7v7h-7zM1294 333h7v7h-7z"/><path fill="#73109c" d="M1294 326h7v7h-7z"/><path fill="#84089c" d="M1308 326h14v7h-14zM1315 333h7v7h-7z"/><path fill="#8c089c" d="M1322 326h7v7h-7zM1322 333h7v7h-7z"/><path fill="#9c0094" d="M1336 326h7v7h-7zM1343 333h7v7h-7zM1350 340h7v7h-7zM1357 347h7v7h-7zM1364 354h7v7h-7zM1371 361h7v7h-7zM1378 368h7v7h-7zM1385 375h7v7h-7zM1392 382h7v7h-7zM1399 389h14v7h-14zM1406 396h14v7h-14zM1413 403h14v7h-14zM1420 410h14v7h-14zM1427 417h14v7h-14zM1434 424h14v7h-14zM1441 431h14v7h-14zM1448 438h7v7h-7z"/><path fill="#9c008c" d="M1343 326h7v7h-7zM1350 333h7v7h-7zM1357 340h14v7h-14zM1364 347h14v7h-14zM1371 354h14v7h-14zM1378 361h14v7h-14zM1385 368h14v7h-14zM1392 375h14v7h-14zM1399 382h14v7h-14zM1413 389h7v7h-7zM1420 396h7v7h-7zM1427 403h7v7h-7zM1434 410h14v7h-14zM1441 417h14v7h-14zM1448 424h14v7h-14zM1455 431h7v7h-7z"/><path fill="#19219c" d="M1203 333h14v7h-14zM1210 340h7v7h-7zM1210 347h7v7h-7z"/><path fill="#31199c" d="M1238 333h7v7h-7zM1238 340h7v7h-7zM1238 347h7v7h-7z"/><path fill="#3a199c" d="M1245 333h7v7h-7zM1245 340h7v7h-7zM1245 347h7v7h-7z"/><path fill="#42199c" d="M1252 333h7v7h-7zM1252 340h7v7h-7z"/><path fill="#5a109c" d="M1273 333h14v7h-14zM1280 340h7v7h-7z"/><path fill="#73089c" d="M1301 333h7v7h-7zM1308 340h7v7h-7z"/><path fill="#7b089c" d="M1308 333h7v7h-7zM1315 340h7v7h-7z"/><path fill="#8c009c" d="M1329 333h7v7h-7zM1329 340h14v7h-14zM1336 347h7v7h-7zM1343 354h7v7h-7zM1350 361h7v7h-7zM1357 368h7v7h-7zM1364 375h7v7h-7zM1371 382h7v7h-7zM1378 389h7v7h-7zM1385 396h7v7h-7zM1392 403h7v7h-7zM1399 410h7v7h-7zM1399 417h14v7h-14zM1406 424h14v7h-14zM1413 431h14v7h-14zM1420 438h14v7h-14zM1427 445h14v7h-14zM1434 452h7v7h-7z"/><path fill="#94009c" d="M1336 333h7v7h-7zM1343 340h7v7h-7zM1343 347h14v7h-14zM1350 354h14v7h-14zM1357 361h14v7h-14zM1364 368h14v7h-14zM1371 375h14v7h-14zM1378 382h14v7h-14zM1385 389h14v7h-14zM1392 396h14v7h-14zM1399 403h14v7h-14zM1406 410h14v7h-14zM1413 417h14v7h-14zM1420 424h14v7h-14zM1427 431h14v7h-14zM1434 438h14v7h-14zM1441 445h7v7h-7z"/><path fill="#08219c" d="M1189 340h7v7h-7zM1189 347h14v7h-14zM1189 354h14v7h-14z"/><path fill="#10219c" d="M1196 340h14v7h-14zM1203 347h7v7h-7z"/><path fill="#29199c" d="M1224 340h14v7h-14zM1231 347h7v7h-7zM1231 354h7v7h-7z"/><path fill="#42109c" d="M1259 340h7v7h-7zM1259 347h7v7h-7zM1259 354h14v7h-14z"/><path fill="#4a109c" d="M1266 340h7v7h-7zM1266 347h7v7h-7z"/><path fill="#52109c" d="M1273 340h7v7h-7zM1273 347h14v7h-14z"/><path fill="#63089c" d="M1294 340h7v7h-7zM1294 347h7v7h-7zM1301 354h7v7h-7z"/><path fill="#6b089c" d="M1301 340h7v7h-7zM1301 347h14v7h-14z"/><path fill="#84009c" d="M1322 340h7v7h-7zM1329 347h7v7h-7zM1336 354h7v7h-7zM1343 361h7v7h-7zM1350 368h7v7h-7zM1357 375h7v7h-7zM1357 382h14v7h-14zM1364 389h14v7h-14zM1371 396h14v7h-14zM1378 403h14v7h-14zM1385 410h14v7h-14zM1392 417h7v7h-7zM1399 424h7v7h-7zM1406 431h7v7h-7zM1406 438h14v7h-14zM1413 445h14v7h-14zM1420 452h14v7h-14zM1427 459h7v7h-7z"/><path fill="#00219c" d="M1175 347h14v7h-14zM1168 354h21v7h-21zM1154 361h35v7h-35zM1140 368h42v7h-42zM1126 375h42v7h-42zM1112 382h42v7h-42zM1105 389h42v7h-42zM1105 396h28v7h-28zM1112 403h7v7h-7z"/><path fill="#21199c" d="M1217 347h14v7h-14zM1224 354h7v7h-7zM1224 361h7v7h-7z"/><path fill="#3a109c" d="M1252 347h7v7h-7zM1252 354h7v7h-7zM1252 361h14v7h-14z"/><path fill="#5a089c" d="M1287 347h7v7h-7zM1287 354h14v7h-14zM1294 361h7v7h-7z"/><path fill="#73009c" d="M1315 347h7v7h-7zM1315 354h14v7h-14zM1322 361h7v7h-7zM1329 368h7v7h-7zM1336 375h7v7h-7zM1336 382h14v7h-14zM1343 389h14v7h-14zM1350 396h14v7h-14zM1357 403h7v7h-7zM1364 410h7v7h-7zM1364 417h14v7h-14zM1371 424h14v7h-14zM1378 431h14v7h-14zM1385 438h14v7h-14zM1392 445h7v7h-7zM1392 452h14v7h-14zM1399 459h14v7h-14zM1406 466h14v7h-14zM1413 473h7v7h-7z"/><path fill="#7b009c" d="M1322 347h7v7h-7zM1329 354h7v7h-7zM1329 361h14v7h-14zM1336 368h14v7h-14zM1343 375h14v7h-14zM1350 382h7v7h-7zM1357 389h7v7h-7zM1364 396h7v7h-7zM1364 403h14v7h-14zM1371 410h14v7h-14zM1378 417h14v7h-14zM1385 424h14v7h-14zM1392 431h14v7h-14zM1399 438h7v7h-7zM1399 445h14v7h-14zM1406 452h14v7h-14zM1413 459h14v7h-14zM1420 466h7v7h-7z"/><path fill="#10199c" d="M1203 354h7v7h-7zM1203 361h14v7h-14zM1203 368h14v7h-14z"/><path fill="#19199c" d="M1210 354h14v7h-14zM1217 361h7v7h-7z"/><path fill="#29109c" d="M1238 354h7v7h-7zM1238 361h7v7h-7zM1238 368h7v7h-7zM1238 375h14v7h-14z"/><path fill="#31109c" d="M1245 354h7v7h-7zM1245 361h7v7h-7zM1245 368h14v7h-14z"/><path fill="#4a089c" d="M1273 354h7v7h-7zM1273 361h14v7h-14zM1280 368h7v7h-7zM1280 375h7v7h-7z"/><path fill="#52089c" d="M1280 354h7v7h-7zM1287 361h7v7h-7zM1287 368h7v7h-7z"/><path fill="#6b009c" d="M1308 354h7v7h-7zM1315 361h7v7h-7zM1322 368h7v7h-7zM1322 375h14v7h-14zM1329 382h7v7h-7zM1336 389h7v7h-7zM1336 396h14v7h-14zM1343 403h14v7h-14zM1350 410h14v7h-14zM1357 417h7v7h-7zM1357 424h14v7h-14zM1364 431h14v7h-14zM1371 438h14v7h-14zM1378 445h14v7h-14zM1378 452h14v7h-14zM1385 459h14v7h-14zM1392 466h14v7h-14zM1399 473h14v7h-14zM1399 480h14v7h-14z"/><path fill="#00199c" d="M1189 361h7v7h-7zM1182 368h14v7h-14zM1168 375h28v7h-28zM1154 382h42v7h-42zM1147 389h42v7h-42zM1133 396h42v7h-42zM1119 403h49v7h-49zM1112 410h42v7h-42zM1119 417h28v7h-28zM1126 424h14v7h-14z"/><path fill="#08199c" d="M1196 361h7v7h-7zM1196 368h7v7h-7zM1196 375h14v7h-14z"/><path fill="#21109c" d="M1231 361h7v7h-7zM1224 368h14v7h-14zM1231 375h7v7h-7zM1231 382h7v7h-7z"/><path fill="#42089c" d="M1266 361h7v7h-7zM1266 368h14v7h-14zM1273 375h7v7h-7zM1273 382h7v7h-7z"/><path fill="#63009c" d="M1301 361h14v7h-14zM1308 368h14v7h-14zM1315 375h7v7h-7zM1315 382h14v7h-14zM1322 389h14v7h-14zM1329 396h7v7h-7zM1336 403h7v7h-7zM1336 410h14v7h-14zM1343 417h14v7h-14zM1350 424h7v7h-7zM1350 431h14v7h-14zM1357 438h14v7h-14zM1364 445h14v7h-14zM1364 452h14v7h-14zM1371 459h14v7h-14zM1378 466h14v7h-14zM1385 473h14v7h-14zM1385 480h14v7h-14zM1392 487h14v7h-14z"/><path fill="#19109c" d="M1217 368h7v7h-7zM1217 375h14v7h-14zM1217 382h14v7h-14zM1224 389h7v7h-7z"/><path fill="#3a089c" d="M1259 368h7v7h-7zM1259 375h14v7h-14zM1266 382h7v7h-7zM1266 389h7v7h-7z"/><path fill="#52009c" d="M1294 368h7v7h-7zM1294 375h7v7h-7zM1294 382h14v7h-14zM1301 389h14v7h-14zM1308 396h7v7h-7zM1308 403h14v7h-14zM1315 410h14v7h-14zM1322 417h7v7h-7zM1322 424h14v7h-14zM1329 431h14v7h-14zM1329 438h14v7h-14zM1336 445h14v7h-14zM1343 452h14v7h-14zM1343 459h14v7h-14zM1350 466h14v7h-14zM1350 473h14v7h-14zM1357 480h14v7h-14zM1364 487h14v7h-14zM1364 494h14v7h-14zM1371 501h14v7h-14zM1371 508h14v7h-14z"/><path fill="#5a009c" d="M1301 368h7v7h-7zM1301 375h14v7h-14zM1308 382h7v7h-7zM1315 389h7v7h-7zM1315 396h14v7h-14zM1322 403h14v7h-14zM1329 410h7v7h-7zM1329 417h14v7h-14zM1336 424h14v7h-14zM1343 431h7v7h-7zM1343 438h14v7h-14zM1350 445h14v7h-14zM1357 452h7v7h-7zM1357 459h14v7h-14zM1364 466h14v7h-14zM1364 473h21v7h-21zM1371 480h14v7h-14zM1378 487h14v7h-14zM1378 494h21v7h-21zM1385 501h7v7h-7z"/><path fill="#10109c" d="M1210 375h7v7h-7zM1210 382h7v7h-7zM1210 389h14v7h-14zM1210 396h14v7h-14z"/><path fill="#31089c" d="M1252 375h7v7h-7zM1252 382h14v7h-14zM1259 389h7v7h-7zM1259 396h7v7h-7z"/><path fill="#4a009c" d="M1287 375h7v7h-7zM1287 382h7v7h-7zM1287 389h14v7h-14zM1294 396h14v7h-14zM1301 403h7v7h-7zM1301 410h14v7h-14zM1308 417h14v7h-14zM1308 424h14v7h-14zM1315 431h14v7h-14zM1315 438h14v7h-14zM1322 445h14v7h-14zM1329 452h14v7h-14zM1329 459h14v7h-14zM1336 466h14v7h-14zM1336 473h14v7h-14zM1343 480h14v7h-14zM1343 487h21v7h-21zM1350 494h14v7h-14zM1357 501h14v7h-14zM1357 508h14v7h-14zM1364 515h14v7h-14zM1364 522h7v7h-7z"/><path fill="#08109c" d="M1196 382h14v7h-14zM1196 389h14v7h-14zM1203 396h7v7h-7zM1203 403h7v7h-7z"/><path fill="#21089c" d="M1238 382h7v7h-7zM1231 389h14v7h-14zM1238 396h7v7h-7zM1238 403h14v7h-14zM1238 410h14v7h-14z"/><path fill="#29089c" d="M1245 382h7v7h-7zM1245 389h14v7h-14zM1245 396h14v7h-14zM1252 403h7v7h-7z"/><path fill="#42009c" d="M1280 382h7v7h-7zM1280 389h7v7h-7zM1280 396h14v7h-14zM1287 403h14v7h-14zM1287 410h14v7h-14zM1294 417h14v7h-14zM1294 424h14v7h-14zM1301 431h14v7h-14zM1308 438h7v7h-7zM1308 445h14v7h-14zM1315 452h14v7h-14zM1315 459h14v7h-14zM1322 466h14v7h-14zM1322 473h14v7h-14zM1329 480h14v7h-14zM1329 487h14v7h-14zM1336 494h14v7h-14zM1336 501h21v7h-21zM1343 508h14v7h-14zM1343 515h21v7h-21zM1350 522h14v7h-14zM1350 529h14v7h-14z"/><path fill="#00109c" d="M1189 389h7v7h-7zM1175 396h28v7h-28zM1168 403h35v7h-35zM1154 410h49v7h-49zM1147 417h49v7h-49zM1140 424h49v7h-49zM1126 431h49v7h-49zM1133 438h35v7h-35zM1140 445h21v7h-21zM1140 452h14v7h-14z"/><path fill="#3a009c" d="M1273 389h7v7h-7zM1273 396h7v7h-7zM1273 403h14v7h-14zM1280 410h7v7h-7zM1280 417h14v7h-14zM1287 424h7v7h-7zM1287 431h14v7h-14zM1294 438h14v7h-14zM1294 445h14v7h-14zM1301 452h14v7h-14zM1301 459h14v7h-14zM1301 466h21v7h-21zM1308 473h14v7h-14zM1308 480h21v7h-21zM1315 487h14v7h-14zM1315 494h21v7h-21zM1322 501h14v7h-14zM1322 508h21v7h-21zM1329 515h14v7h-14zM1329 522h21v7h-21zM1336 529h14v7h-14zM1336 536h21v7h-21zM1343 543h7v7h-7z"/><path fill="#19089c" d="M1224 396h14v7h-14zM1224 403h14v7h-14zM1231 410h7v7h-7zM1231 417h14v7h-14zM1231 424h7v7h-7z"/><path fill="#31009c" d="M1266 396h7v7h-7zM1266 403h7v7h-7zM1266 410h14v7h-14zM1266 417h14v7h-14zM1273 424h14v7h-14zM1273 431h14v7h-14zM1280 438h14v7h-14zM1280 445h14v7h-14zM1287 452h14v7h-14zM1287 459h14v7h-14zM1287 466h14v7h-14zM1294 473h14v7h-14zM1294 480h14v7h-14zM1301 487h14v7h-14zM1301 494h14v7h-14zM1301 501h21v7h-21zM1308 508h14v7h-14zM1308 515h21v7h-21zM1315 522h14v7h-14zM1315 529h21v7h-21zM1322 536h14v7h-14zM1322 543h21v7h-21zM1322 550h21v7h-21zM1329 557h7v7h-7z"/><path fill="#10089c" d="M1210 403h14v7h-14zM1217 410h14v7h-14zM1217 417h14v7h-14zM1217 424h14v7h-14zM1217 431h7v7h-7z"/><path fill="#29009c" d="M1259 403h7v7h-7zM1252 410h14v7h-14zM1259 417h7v7h-7zM1259 424h14v7h-14zM1259 431h14v7h-14zM1266 438h14v7h-14zM1266 445h14v7h-14zM1266 452h21v7h-21zM1273 459h14v7h-14zM1273 466h14v7h-14zM1280 473h14v7h-14zM1280 480h14v7h-14zM1280 487h21v7h-21zM1287 494h14v7h-14zM1287 501h14v7h-14zM1287 508h21v7h-21zM1294 515h14v7h-14zM1294 522h21v7h-21zM1301 529h14v7h-14zM1301 536h21v7h-21zM1301 543h21v7h-21zM1308 550h14v7h-14zM1308 557h21v7h-21zM1315 564h14v7h-14zM1315 571h14v7h-14zM1315 578h7v7h-7z"/><path fill="#08089c" d="M1203 410h14v7h-14zM1203 417h14v7h-14zM1203 424h14v7h-14zM1203 431h14v7h-14zM1210 438h7v7h-7z"/><path fill="#00089c" d="M1196 417h7v7h-7zM1189 424h14v7h-14zM1175 431h28v7h-28zM1168 438h42v7h-42zM1161 445h49v7h-49zM1154 452h49v7h-49zM1147 459h49v7h-49zM1154 466h35v7h-35zM1154 473h28v7h-28zM1161 480h14v7h-14z"/><path fill="#21009c" d="M1245 417h14v7h-14zM1245 424h14v7h-14zM1245 431h14v7h-14zM1252 438h14v7h-14zM1252 445h14v7h-14zM1252 452h14v7h-14zM1259 459h14v7h-14zM1259 466h14v7h-14zM1259 473h21v7h-21zM1266 480h14v7h-14zM1266 487h14v7h-14zM1266 494h21v7h-21zM1273 501h14v7h-14zM1273 508h14v7h-14zM1273 515h21v7h-21zM1280 522h14v7h-14zM1280 529h21v7h-21zM1280 536h21v7h-21zM1287 543h14v7h-14zM1287 550h21v7h-21zM1287 557h21v7h-21zM1294 564h21v7h-21zM1294 571h21v7h-21zM1294 578h21v7h-21zM1301 585h14v7h-14zM1301 592h7v7h-7z"/><path fill="#19009c" d="M1238 424h7v7h-7zM1231 431h14v7h-14zM1238 438h14v7h-14zM1238 445h14v7h-14zM1238 452h14v7h-14zM1245 459h14v7h-14zM1245 466h14v7h-14zM1245 473h14v7h-14zM1245 480h21v7h-21zM1252 487h14v7h-14zM1252 494h14v7h-14zM1252 501h21v7h-21zM1259 508h14v7h-14zM1259 515h14v7h-14zM1259 522h21v7h-21zM1259 529h21v7h-21zM1266 536h14v7h-14zM1266 543h21v7h-21zM1266 550h21v7h-21zM1273 557h14v7h-14zM1273 564h21v7h-21zM1273 571h21v7h-21zM1273 578h21v7h-21zM1280 585h21v7h-21zM1280 592h21v7h-21zM1280 599h14v7h-14z"/><path fill="#10009c" d="M1224 431h7v7h-7zM1224 438h14v7h-14zM1224 445h14v7h-14zM1224 452h14v7h-14zM1224 459h21v7h-21zM1231 466h14v7h-14zM1231 473h14v7h-14zM1231 480h14v7h-14zM1231 487h21v7h-21zM1238 494h14v7h-14zM1238 501h14v7h-14zM1238 508h21v7h-21zM1238 515h21v7h-21zM1238 522h21v7h-21zM1245 529h14v7h-14zM1245 536h21v7h-21zM1245 543h21v7h-21zM1245 550h21v7h-21zM1252 557h21v7h-21zM1252 564h21v7h-21zM1252 571h21v7h-21zM1259 578h14v7h-14zM1266 585h14v7h-14zM1273 592h7v7h-7z"/><path fill="#08009c" d="M1217 438h7v7h-7zM1210 445h14v7h-14zM1210 452h14v7h-14zM1210 459h14v7h-14zM1210 466h21v7h-21zM1217 473h14v7h-14zM1217 480h14v7h-14zM1217 487h14v7h-14zM1217 494h21v7h-21zM1217 501h21v7h-21zM1217 508h21v7h-21zM1224 515h14v7h-14zM1224 522h14v7h-14zM1224 529h21v7h-21zM1224 536h21v7h-21zM1224 543h21v7h-21zM1231 550h14v7h-14zM1231 557h21v7h-21zM1238 564h14v7h-14z"/><path fill="#00009c" d="M1203 452h7v7h-7zM1196 459h14v7h-14zM1189 466h21v7h-21zM1182 473h35v7h-35zM1175 480h42v7h-42zM1168 487h49v7h-49zM1175 494h42v7h-42zM1175 501h42v7h-42zM1182 508h35v7h-35zM1189 515h35v7h-35zM1196 522h28v7h-28zM1203 529h21v7h-21zM1210 536h14v7h-14zM1217 543h7v7h-7zM1224 550h7v7h-7z"/></g></g>
<g clip-path="url(#tclip)"><g filter="url(#bl2)"><path fill="#00ff00" d="M1144 140h4v4h-4zM1148 144h8v4h-8zM1148 148h8v4h-8z"/><path fill="#10ff00" d="M1156 144h4v4h-4z"/><path fill="#19ff00" d="M1160 144h4v4h-4zM1160 148h4v4h-4z"/><path fill="#21ff00" d="M1164 144h4v4h-4zM1164 148h4v4h-4z"/><path fill="#29ff00" d="M1168 144h4v4h-4zM1168 148h4v4h-4z"/><path fill="#31ff00" d="M1172 144h4v4h-4zM1172 148h4v4h-4z"/><path fill="#42ff00" d="M1176 144h4v4h-4zM1176 148h4v4h-4z"/><path fill="#4aff00" d="M1180 144h4v4h-4zM1180 148h4v4h-4z"/><path fill="#52ff00" d="M1184 144h4v4h-4zM1184 148h4v4h-4z"/><path fill="#63ff00" d="M1188 144h4v4h-4zM1188 148h4v4h-4z"/><path fill="#08ff00" d="M1156 148h4v4h-4z"/><path fill="#6bff00" d="M1192 148h4v4h-4z"/><path fill="#7bff00" d="M1196 148h4v4h-4zM1196 152h4v4h-4z"/><path fill="#84ff00" d="M1200 148h4v4h-4zM1200 152h4v4h-4z"/><path fill="#94ff00" d="M1204 148h4v4h-4zM1204 152h4v4h-4z"/><path fill="#9cff00" d="M1208 148h4v4h-4zM1208 152h4v4h-4z"/><path fill="#adff00" d="M1212 148h4v4h-4zM1212 152h4v4h-4z"/><path fill="#b5ff00" d="M1216 148h4v4h-4zM1216 152h4v4h-4z"/><path fill="#c5ff00" d="M1220 148h4v4h-4zM1220 152h4v4h-4z"/><path fill="#d6ff00" d="M1224 148h4v4h-4zM1224 152h4v4h-4z"/><path fill="#e6ff00" d="M1228 148h4v4h-4zM1228 152h4v4h-4z"/><path fill="#00ff10" d="M1148 152h4v4h-4z"/><path fill="#00ff08" d="M1152 152h4v4h-4z"/><path fill="#08ff08" d="M1156 152h4v4h-4z"/><path fill="#10ff08" d="M1160 152h4v4h-4z"/><path fill="#21ff08" d="M1164 152h4v4h-4z"/><path fill="#29ff08" d="M1168 152h4v4h-4z"/><path fill="#31ff08" d="M1172 152h4v4h-4z"/><path fill="#42ff08" d="M1176 152h4v4h-4z"/><path fill="#4aff08" d="M1180 152h4v4h-4z"/><path fill="#52ff08" d="M1184 152h4v4h-4z"/><path fill="#63ff08" d="M1188 152h4v4h-4z"/><path fill="#6bff08" d="M1192 152h4v4h-4z"/><path fill="#f7ff00" d="M1232 152h4v4h-4z"/><path fill="#ffff00" d="M1236 152h4v4h-4z"/><path fill="#ffef00" d="M1240 152h4v4h-4zM1240 156h4v4h-4z"/><path fill="#ffde00" d="M1244 152h4v4h-4zM1244 156h4v4h-4z"/><path fill="#ffd600" d="M1248 152h4v4h-4z"/><path fill="#ffc500" d="M1252 152h4v4h-4zM1252 156h4v4h-4z"/><path fill="#ffbd00" d="M1256 152h4v4h-4zM1256 156h4v4h-4z"/><path fill="#ffb500" d="M1260 152h4v4h-4zM1260 156h4v4h-4z"/><path fill="#ffad00" d="M1264 152h4v4h-4z"/><path fill="#ffa500" d="M1268 152h4v4h-4zM1264 156h4v4h-4z"/><path fill="#ff9c00" d="M1272 152h4v4h-4zM1268 156h8v4h-8z"/><path fill="#00ff19" d="M1148 156h8v4h-8z"/><path fill="#08ff10" d="M1156 156h4v4h-4z"/><path fill="#10ff10" d="M1160 156h4v4h-4z"/><path fill="#21ff10" d="M1164 156h4v4h-4z"/><path fill="#29ff10" d="M1168 156h4v4h-4z"/><path fill="#31ff10" d="M1172 156h4v4h-4z"/><path fill="#3aff10" d="M1176 156h4v4h-4z"/><path fill="#4aff10" d="M1180 156h4v4h-4z"/><path fill="#52ff10" d="M1184 156h4v4h-4z"/><path fill="#63ff10" d="M1188 156h4v4h-4z"/><path fill="#6bff10" d="M1192 156h4v4h-4z"/><path fill="#73ff10" d="M1196 156h4v4h-4z"/><path fill="#84ff10" d="M1200 156h4v4h-4z"/><path fill="#94ff08" d="M1204 156h4v4h-4z"/><path fill="#9cff08" d="M1208 156h4v4h-4z"/><path fill="#adff08" d="M1212 156h4v4h-4z"/><path fill="#bdff08" d="M1216 156h4v4h-4z"/><path fill="#c5ff08" d="M1220 156h4v4h-4z"/><path fill="#d6ff08" d="M1224 156h4v4h-4z"/><path fill="#e6ff08" d="M1228 156h4v4h-4z"/><path fill="#f7ff08" d="M1232 156h4v4h-4z"/><path fill="#fff708" d="M1236 156h4v4h-4z"/><path fill="#ffce00" d="M1248 156h4v4h-4z"/><path fill="#ff9400" d="M1276 156h4v4h-4z"/><path fill="#ff8c00" d="M1280 156h4v4h-4zM1276 160h8v4h-8z"/><path fill="#ff8400" d="M1284 156h4v4h-4zM1284 160h4v4h-4z"/><path fill="#ff7b00" d="M1288 156h8v4h-8zM1288 160h4v4h-4z"/><path fill="#ff7300" d="M1296 156h4v4h-4zM1292 160h8v4h-8z"/><path fill="#ff6b00" d="M1300 156h8v4h-8zM1300 160h8v4h-8z"/><path fill="#ff6300" d="M1308 156h8v4h-8zM1308 160h4v4h-4z"/><path fill="#ff5a00" d="M1316 156h4v4h-4zM1312 160h8v4h-8zM1312 164h8v4h-8z"/><path fill="#00ff21" d="M1148 160h8v4h-8z"/><path fill="#08ff21" d="M1156 160h4v4h-4z"/><path fill="#10ff21" d="M1160 160h4v4h-4z"/><path fill="#19ff19" d="M1164 160h4v4h-4z"/><path fill="#29ff19" d="M1168 160h4v4h-4z"/><path fill="#31ff19" d="M1172 160h4v4h-4z"/><path fill="#3aff19" d="M1176 160h4v4h-4z"/><path fill="#4aff19" d="M1180 160h4v4h-4z"/><path fill="#52ff19" d="M1184 160h4v4h-4z"/><path fill="#5aff19" d="M1188 160h4v4h-4z"/><path fill="#6bff19" d="M1192 160h4v4h-4z"/><path fill="#73ff19" d="M1196 160h4v4h-4z"/><path fill="#84ff19" d="M1200 160h4v4h-4z"/><path fill="#94ff19" d="M1204 160h4v4h-4z"/><path fill="#9cff19" d="M1208 160h4v4h-4z"/><path fill="#adff19" d="M1212 160h4v4h-4z"/><path fill="#bdff10" d="M1216 160h4v4h-4z"/><path fill="#c5ff10" d="M1220 160h4v4h-4z"/><path fill="#d6ff10" d="M1224 160h4v4h-4z"/><path fill="#e6ff10" d="M1228 160h4v4h-4z"/><path fill="#f7ff10" d="M1232 160h4v4h-4z"/><path fill="#fff710" d="M1236 160h4v4h-4z"/><path fill="#ffe610" d="M1240 160h4v4h-4z"/><path fill="#ffde10" d="M1244 160h4v4h-4z"/><path fill="#ffce08" d="M1248 160h4v4h-4z"/><path fill="#ffc508" d="M1252 160h4v4h-4z"/><path fill="#ffbd08" d="M1256 160h4v4h-4z"/><path fill="#ffad08" d="M1260 160h4v4h-4z"/><path fill="#ffa508" d="M1264 160h4v4h-4z"/><path fill="#ff9c08" d="M1268 160h4v4h-4z"/><path fill="#ff9408" d="M1272 160h4v4h-4z"/><path fill="#ff5200" d="M1320 160h12v4h-12zM1320 164h8v4h-8z"/><path fill="#ff4a00" d="M1332 160h8v4h-8zM1328 164h12v4h-12z"/><path fill="#ff4200" d="M1340 160h12v4h-12zM1340 164h12v4h-12z"/><path fill="#ff3a00" d="M1352 160h8v4h-8zM1352 164h12v4h-12zM1348 168h12v4h-12z"/><path fill="#00ff29" d="M1148 164h8v4h-8z"/><path fill="#08ff29" d="M1156 164h4v4h-4z"/><path fill="#10ff29" d="M1160 164h4v4h-4z"/><path fill="#19ff29" d="M1164 164h4v4h-4z"/><path fill="#21ff29" d="M1168 164h4v4h-4z"/><path fill="#31ff29" d="M1172 164h4v4h-4z"/><path fill="#3aff29" d="M1176 164h4v4h-4z"/><path fill="#4aff21" d="M1180 164h4v4h-4z"/><path fill="#52ff21" d="M1184 164h4v4h-4z"/><path fill="#5aff21" d="M1188 164h4v4h-4z"/><path fill="#6bff21" d="M1192 164h4v4h-4z"/><path fill="#73ff21" d="M1196 164h4v4h-4z"/><path fill="#84ff21" d="M1200 164h4v4h-4z"/><path fill="#94ff21" d="M1204 164h4v4h-4z"/><path fill="#9cff21" d="M1208 164h4v4h-4z"/><path fill="#adff21" d="M1212 164h4v4h-4z"/><path fill="#bdff21" d="M1216 164h4v4h-4z"/><path fill="#c5ff21" d="M1220 164h4v4h-4z"/><path fill="#d6ff21" d="M1224 164h4v4h-4z"/><path fill="#e6ff21" d="M1228 164h4v4h-4z"/><path fill="#f7ff21" d="M1232 164h4v4h-4z"/><path fill="#fff719" d="M1236 164h4v4h-4z"/><path fill="#ffe619" d="M1240 164h4v4h-4z"/><path fill="#ffde19" d="M1244 164h4v4h-4z"/><path fill="#ffce19" d="M1248 164h4v4h-4z"/><path fill="#ffc510" d="M1252 164h4v4h-4z"/><path fill="#ffb510" d="M1256 164h4v4h-4z"/><path fill="#ffad10" d="M1260 164h4v4h-4z"/><path fill="#ffa510" d="M1264 164h4v4h-4z"/><path fill="#ff9c10" d="M1268 164h4v4h-4z"/><path fill="#ff9410" d="M1272 164h4v4h-4zM1272 168h4v4h-4z"/><path fill="#ff8c08" d="M1276 164h4v4h-4z"/><path fill="#ff8408" d="M1280 164h8v4h-8z"/><path fill="#ff7b08" d="M1288 164h4v4h-4z"/><path fill="#ff7308" d="M1292 164h8v4h-8z"/><path fill="#ff6b08" d="M1300 164h4v4h-4zM1300 168h4v4h-4z"/><path fill="#ff6308" d="M1304 164h8v4h-8zM1304 168h8v4h-8z"/><path fill="#ff3100" d="M1364 164h12v4h-12zM1360 168h16v4h-16z"/><path fill="#ff2900" d="M1376 164h20v4h-20zM1376 168h16v4h-16zM1384 172h4v4h-4z"/><path fill="#ff2100" d="M1396 164h8v4h-8zM1392 168h20v4h-20zM1388 172h20v4h-20z"/><path fill="#00ff31" d="M1152 168h4v4h-4z"/><path fill="#08ff31" d="M1156 168h4v4h-4z"/><path fill="#10ff31" d="M1160 168h4v4h-4z"/><path fill="#19ff31" d="M1164 168h4v4h-4z"/><path fill="#21ff31" d="M1168 168h4v4h-4z"/><path fill="#31ff31" d="M1172 168h4v4h-4z"/><path fill="#3aff31" d="M1176 168h4v4h-4z"/><path fill="#42ff31" d="M1180 168h4v4h-4z"/><path fill="#52ff31" d="M1184 168h4v4h-4z"/><path fill="#5aff31" d="M1188 168h4v4h-4z"/><path fill="#6bff31" d="M1192 168h4v4h-4z"/><path fill="#73ff31" d="M1196 168h4v4h-4z"/><path fill="#84ff29" d="M1200 168h4v4h-4z"/><path fill="#94ff29" d="M1204 168h4v4h-4z"/><path fill="#9cff29" d="M1208 168h4v4h-4z"/><path fill="#adff29" d="M1212 168h4v4h-4z"/><path fill="#bdff29" d="M1216 168h4v4h-4z"/><path fill="#ceff29" d="M1220 168h4v4h-4z"/><path fill="#d6ff29" d="M1224 168h4v4h-4z"/><path fill="#e6ff29" d="M1228 168h4v4h-4z"/><path fill="#f7ff29" d="M1232 168h4v4h-4z"/><path fill="#fff729" d="M1236 168h4v4h-4z"/><path fill="#ffe621" d="M1240 168h4v4h-4z"/><path fill="#ffd621" d="M1244 168h4v4h-4z"/><path fill="#ffce21" d="M1248 168h4v4h-4z"/><path fill="#ffbd21" d="M1252 168h4v4h-4z"/><path fill="#ffb519" d="M1256 168h4v4h-4z"/><path fill="#ffad19" d="M1260 168h4v4h-4z"/><path fill="#ffa519" d="M1264 168h4v4h-4z"/><path fill="#ff9c19" d="M1268 168h4v4h-4z"/><path fill="#ff8c10" d="M1276 168h4v4h-4z"/><path fill="#ff8410" d="M1280 168h4v4h-4z"/><path fill="#ff7b10" d="M1284 168h8v4h-8z"/><path fill="#ff7310" d="M1292 168h4v4h-4z"/><path fill="#ff6b10" d="M1296 168h4v4h-4zM1296 172h8v4h-8z"/><path fill="#ff5a08" d="M1312 168h8v4h-8z"/><path fill="#ff5208" d="M1320 168h8v4h-8z"/><path fill="#ff4a08" d="M1328 168h8v4h-8zM1328 172h8v4h-8z"/><path fill="#ff4208" d="M1336 168h12v4h-12zM1336 172h12v4h-12z"/><path fill="#ff1900" d="M1412 168h20v4h-20zM1408 172h20v4h-20zM1420 176h8v4h-8z"/><path fill="#ff1000" d="M1432 168h16v4h-16zM1428 172h28v4h-28zM1428 176h24v4h-24z"/><path fill="#00ff3a" d="M1152 172h8v4h-8z"/><path fill="#10ff3a" d="M1160 172h4v4h-4z"/><path fill="#19ff3a" d="M1164 172h4v4h-4z"/><path fill="#21ff3a" d="M1168 172h4v4h-4z"/><path fill="#31ff3a" d="M1172 172h4v4h-4z"/><path fill="#3aff3a" d="M1176 172h4v4h-4z"/><path fill="#42ff3a" d="M1180 172h4v4h-4z"/><path fill="#52ff3a" d="M1184 172h4v4h-4z"/><path fill="#5aff3a" d="M1188 172h4v4h-4z"/><path fill="#6bff3a" d="M1192 172h4v4h-4z"/><path fill="#73ff3a" d="M1196 172h4v4h-4z"/><path fill="#84ff3a" d="M1200 172h4v4h-4z"/><path fill="#94ff3a" d="M1204 172h4v4h-4z"/><path fill="#9cff3a" d="M1208 172h4v4h-4z"/><path fill="#adff3a" d="M1212 172h4v4h-4z"/><path fill="#bdff3a" d="M1216 172h4v4h-4z"/><path fill="#ceff3a" d="M1220 172h4v4h-4z"/><path fill="#d6ff3a" d="M1224 172h4v4h-4z"/><path fill="#e6ff3a" d="M1228 172h4v4h-4z"/><path fill="#f7ff3a" d="M1232 172h4v4h-4z"/><path fill="#fff731" d="M1236 172h4v4h-4z"/><path fill="#ffe631" d="M1240 172h4v4h-4z"/><path fill="#ffd629" d="M1244 172h4v4h-4z"/><path fill="#ffce29" d="M1248 172h4v4h-4z"/><path fill="#ffbd29" d="M1252 172h4v4h-4z"/><path fill="#ffb521" d="M1256 172h4v4h-4z"/><path fill="#ffad21" d="M1260 172h4v4h-4z"/><path fill="#ffa521" d="M1264 172h4v4h-4z"/><path fill="#ff9c21" d="M1268 172h4v4h-4z"/><path fill="#ff9419" d="M1272 172h4v4h-4z"/><path fill="#ff8c19" d="M1276 172h4v4h-4z"/><path fill="#ff8419" d="M1280 172h4v4h-4z"/><path fill="#ff7b19" d="M1284 172h8v4h-8z"/><path fill="#ff7319" d="M1292 172h4v4h-4zM1292 176h4v4h-4z"/><path fill="#ff6310" d="M1304 172h4v4h-4z"/><path fill="#ff5a10" d="M1308 172h8v4h-8z"/><path fill="#ff5210" d="M1316 172h12v4h-12zM1320 176h4v4h-4z"/><path fill="#ff3a08" d="M1348 172h12v4h-12z"/><path fill="#ff3108" d="M1360 172h12v4h-12zM1356 176h16v4h-16z"/><path fill="#ff2908" d="M1372 172h12v4h-12zM1372 176h16v4h-16z"/><path fill="#ff0800" d="M1456 172h32v4h-32zM1452 176h32v4h-32zM1456 180h24v4h-24z"/><path fill="#00ff42" d="M1152 176h8v4h-8z"/><path fill="#08ff42" d="M1160 176h4v4h-4z"/><path fill="#19ff42" d="M1164 176h4v4h-4z"/><path fill="#21ff42" d="M1168 176h4v4h-4z"/><path fill="#29ff42" d="M1172 176h4v4h-4z"/><path fill="#3aff42" d="M1176 176h4v4h-4z"/><path fill="#42ff42" d="M1180 176h4v4h-4z"/><path fill="#52ff42" d="M1184 176h4v4h-4z"/><path fill="#5aff42" d="M1188 176h4v4h-4z"/><path fill="#6bff42" d="M1192 176h4v4h-4z"/><path fill="#73ff42" d="M1196 176h4v4h-4z"/><path fill="#84ff42" d="M1200 176h4v4h-4z"/><path fill="#94ff42" d="M1204 176h4v4h-4z"/><path fill="#9cff42" d="M1208 176h4v4h-4z"/><path fill="#adff42" d="M1212 176h4v4h-4z"/><path fill="#bdff42" d="M1216 176h4v4h-4z"/><path fill="#ceff42" d="M1220 176h4v4h-4z"/><path fill="#deff42" d="M1224 176h4v4h-4z"/><path fill="#efff42" d="M1228 176h4v4h-4z"/><path fill="#ffff42" d="M1232 176h4v4h-4z"/><path fill="#ffef42" d="M1236 176h4v4h-4z"/><path fill="#ffe63a" d="M1240 176h4v4h-4z"/><path fill="#ffd63a" d="M1244 176h4v4h-4z"/><path fill="#ffc531" d="M1248 176h4v4h-4z"/><path fill="#ffbd31" d="M1252 176h4v4h-4z"/><path fill="#ffb531" d="M1256 176h4v4h-4z"/><path fill="#ffad29" d="M1260 176h4v4h-4z"/><path fill="#ff9c29" d="M1264 176h4v4h-4z"/><path fill="#ff9429" d="M1268 176h8v4h-8z"/><path fill="#ff8c21" d="M1276 176h4v4h-4z"/><path fill="#ff8421" d="M1280 176h4v4h-4z"/><path fill="#ff7b21" d="M1284 176h4v4h-4z"/><path fill="#ff7321" d="M1288 176h4v4h-4z"/><path fill="#ff6b19" d="M1296 176h4v4h-4z"/><path fill="#ff6319" d="M1300 176h8v4h-8z"/><path fill="#ff5a19" d="M1308 176h8v4h-8zM1312 180h4v4h-4z"/><path fill="#ff5219" d="M1316 176h4v4h-4zM1316 180h8v4h-8z"/><path fill="#ff4a10" d="M1324 176h12v4h-12z"/><path fill="#ff4210" d="M1336 176h8v4h-8zM1340 180h4v4h-4z"/><path fill="#ff3a10" d="M1344 176h12v4h-12zM1344 180h12v4h-12z"/><path fill="#ff2108" d="M1388 176h16v4h-16zM1384 180h20v4h-20z"/><path fill="#ff1908" d="M1404 176h16v4h-16zM1404 180h20v4h-20zM1412 184h8v4h-8z"/><path fill="#ff0000" d="M1484 176h28v4h-28zM1480 180h28v4h-28zM1492 184h12v4h-12z"/><path fill="#00ff52" d="M1152 180h8v4h-8z"/><path fill="#08ff52" d="M1160 180h4v4h-4z"/><path fill="#19ff52" d="M1164 180h4v4h-4z"/><path fill="#21ff52" d="M1168 180h4v4h-4z"/><path fill="#29ff52" d="M1172 180h4v4h-4z"/><path fill="#3aff52" d="M1176 180h4v4h-4z"/><path fill="#42ff52" d="M1180 180h4v4h-4z"/><path fill="#52ff52" d="M1184 180h4v4h-4z"/><path fill="#5aff52" d="M1188 180h4v4h-4z"/><path fill="#6bff52" d="M1192 180h4v4h-4z"/><path fill="#73ff52" d="M1196 180h4v4h-4z"/><path fill="#84ff52" d="M1200 180h4v4h-4z"/><path fill="#94ff52" d="M1204 180h4v4h-4z"/><path fill="#9cff52" d="M1208 180h4v4h-4z"/><path fill="#adff52" d="M1212 180h4v4h-4z"/><path fill="#bdff52" d="M1216 180h4v4h-4z"/><path fill="#ceff52" d="M1220 180h4v4h-4z"/><path fill="#deff52" d="M1224 180h4v4h-4z"/><path fill="#efff52" d="M1228 180h4v4h-4z"/><path fill="#ffff52" d="M1232 180h4v4h-4z"/><path fill="#ffef4a" d="M1236 180h4v4h-4z"/><path fill="#ffde4a" d="M1240 180h4v4h-4z"/><path fill="#ffd642" d="M1244 180h4v4h-4z"/><path fill="#ffc542" d="M1248 180h4v4h-4z"/><path fill="#ffbd3a" d="M1252 180h4v4h-4z"/><path fill="#ffb53a" d="M1256 180h4v4h-4z"/><path fill="#ffa531" d="M1260 180h4v4h-4z"/><path fill="#ff9c31" d="M1264 180h4v4h-4z"/><path fill="#ff9431" d="M1268 180h4v4h-4z"/><path fill="#ff8c31" d="M1272 180h4v4h-4z"/><path fill="#ff8429" d="M1276 180h8v4h-8z"/><path fill="#ff7b29" d="M1284 180h4v4h-4z"/><path fill="#ff7329" d="M1288 180h4v4h-4zM1288 184h4v4h-4z"/><path fill="#ff6b21" d="M1292 180h8v4h-8z"/><path fill="#ff6321" d="M1300 180h8v4h-8z"/><path fill="#ff5a21" d="M1308 180h4v4h-4zM1308 184h4v4h-4z"/><path fill="#ff4a19" d="M1324 180h8v4h-8z"/><path fill="#ff4219" d="M1332 180h8v4h-8zM1332 184h8v4h-8z"/><path fill="#ff3110" d="M1356 180h12v4h-12zM1364 184h4v4h-4z"/><path fill="#ff2910" d="M1368 180h16v4h-16zM1368 184h16v4h-16z"/><path fill="#ff1008" d="M1424 180h24v4h-24zM1420 184h28v4h-28zM1440 188h4v4h-4z"/><path fill="#ff0808" d="M1448 180h8v4h-8zM1448 184h28v4h-28zM1444 188h28v4h-28z"/><path fill="#00ff5a" d="M1152 184h8v4h-8z"/><path fill="#08ff5a" d="M1160 184h4v4h-4z"/><path fill="#10ff5a" d="M1164 184h4v4h-4z"/><path fill="#21ff5a" d="M1168 184h4v4h-4z"/><path fill="#29ff5a" d="M1172 184h4v4h-4z"/><path fill="#3aff5a" d="M1176 184h4v4h-4z"/><path fill="#42ff5a" d="M1180 184h4v4h-4z"/><path fill="#4aff5a" d="M1184 184h4v4h-4z"/><path fill="#5aff5a" d="M1188 184h4v4h-4z"/><path fill="#6bff5a" d="M1192 184h4v4h-4z"/><path fill="#73ff5a" d="M1196 184h4v4h-4z"/><path fill="#84ff5a" d="M1200 184h4v4h-4z"/><path fill="#94ff5a" d="M1204 184h4v4h-4z"/><path fill="#9cff5a" d="M1208 184h4v4h-4z"/><path fill="#adff5a" d="M1212 184h4v4h-4z"/><path fill="#bdff5a" d="M1216 184h4v4h-4z"/><path fill="#ceff5a" d="M1220 184h4v4h-4z"/><path fill="#deff5a" d="M1224 184h4v4h-4z"/><path fill="#efff5a" d="M1228 184h4v4h-4z"/><path fill="#ffff5a" d="M1232 184h4v4h-4z"/><path fill="#ffef5a" d="M1236 184h4v4h-4z"/><path fill="#ffde52" d="M1240 184h4v4h-4z"/><path fill="#ffd652" d="M1244 184h4v4h-4z"/><path fill="#ffc54a" d="M1248 184h4v4h-4z"/><path fill="#ffbd4a" d="M1252 184h4v4h-4z"/><path fill="#ffad42" d="M1256 184h4v4h-4z"/><path fill="#ffa542" d="M1260 184h4v4h-4z"/><path fill="#ff9c3a" d="M1264 184h4v4h-4z"/><path fill="#ff943a" d="M1268 184h4v4h-4z"/><path fill="#ff8c3a" d="M1272 184h4v4h-4z"/><path fill="#ff8431" d="M1276 184h4v4h-4z"/><path fill="#ff7b31" d="M1280 184h8v4h-8z"/><path fill="#ff6b29" d="M1292 184h8v4h-8z"/><path fill="#ff6329" d="M1300 184h4v4h-4z"/><path fill="#ff5a29" d="M1304 184h4v4h-4zM1304 188h8v4h-8z"/><path fill="#ff5221" d="M1312 184h8v4h-8z"/><path fill="#ff4a21" d="M1320 184h12v4h-12zM1324 188h4v4h-4z"/><path fill="#ff3a19" d="M1340 184h12v4h-12zM1348 188h4v4h-4z"/><path fill="#ff3119" d="M1352 184h12v4h-12zM1352 188h12v4h-12z"/><path fill="#ff2110" d="M1384 184h16v4h-16zM1388 188h8v4h-8z"/><path fill="#ff1910" d="M1400 184h12v4h-12zM1396 188h24v4h-24zM1408 192h8v4h-8z"/><path fill="#ff0008" d="M1476 184h16v4h-16zM1472 188h28v4h-28zM1468 192h28v4h-28z"/><path fill="#00ff63" d="M1152 188h8v4h-8z"/><path fill="#08ff63" d="M1160 188h4v4h-4z"/><path fill="#10ff63" d="M1164 188h4v4h-4z"/><path fill="#21ff63" d="M1168 188h4v4h-4z"/><path fill="#29ff63" d="M1172 188h4v4h-4z"/><path fill="#31ff6b" d="M1176 188h4v4h-4z"/><path fill="#42ff6b" d="M1180 188h4v4h-4z"/><path fill="#4aff6b" d="M1184 188h4v4h-4z"/><path fill="#5aff6b" d="M1188 188h4v4h-4z"/><path fill="#63ff6b" d="M1192 188h4v4h-4z"/><path fill="#73ff6b" d="M1196 188h4v4h-4z"/><path fill="#84ff6b" d="M1200 188h4v4h-4z"/><path fill="#94ff6b" d="M1204 188h4v4h-4z"/><path fill="#9cff6b" d="M1208 188h4v4h-4z"/><path fill="#adff6b" d="M1212 188h4v4h-4z"/><path fill="#bdff6b" d="M1216 188h4v4h-4z"/><path fill="#ceff6b" d="M1220 188h4v4h-4z"/><path fill="#deff6b" d="M1224 188h4v4h-4z"/><path fill="#efff6b" d="M1228 188h4v4h-4z"/><path fill="#ffff6b" d="M1232 188h4v4h-4z"/><path fill="#ffef63" d="M1236 188h4v4h-4z"/><path fill="#ffde63" d="M1240 188h4v4h-4z"/><path fill="#ffce5a" d="M1244 188h4v4h-4z"/><path fill="#ffc552" d="M1248 188h4v4h-4z"/><path fill="#ffb552" d="M1252 188h4v4h-4z"/><path fill="#ffad4a" d="M1256 188h4v4h-4z"/><path fill="#ffa54a" d="M1260 188h4v4h-4z"/><path fill="#ff9c42" d="M1264 188h4v4h-4z"/><path fill="#ff9442" d="M1268 188h4v4h-4z"/><path fill="#ff8c42" d="M1272 188h4v4h-4z"/><path fill="#ff843a" d="M1276 188h4v4h-4z"/><path fill="#ff7b3a" d="M1280 188h4v4h-4z"/><path fill="#ff733a" d="M1284 188h4v4h-4zM1288 192h4v4h-4z"/><path fill="#ff7331" d="M1288 188h4v4h-4z"/><path fill="#ff6b31" d="M1292 188h4v4h-4z"/><path fill="#ff6331" d="M1296 188h8v4h-8zM1300 192h4v4h-4z"/><path fill="#ff5229" d="M1312 188h8v4h-8zM1316 192h4v4h-4z"/><path fill="#ff4a29" d="M1320 188h4v4h-4zM1320 192h8v4h-8z"/><path fill="#ff4221" d="M1328 188h12v4h-12z"/><path fill="#ff3a21" d="M1340 188h8v4h-8zM1340 192h8v4h-8z"/><path fill="#ff2919" d="M1364 188h16v4h-16zM1368 192h8v4h-8z"/><path fill="#ff2119" d="M1380 188h8v4h-8zM1376 192h20v4h-20zM1388 196h4v4h-4z"/><path fill="#ff1010" d="M1420 188h20v4h-20zM1416 192h24v4h-24zM1432 196h4v4h-4z"/><path fill="#00ff73" d="M1156 192h4v4h-4z"/><path fill="#08ff73" d="M1160 192h4v4h-4z"/><path fill="#10ff73" d="M1164 192h4v4h-4z"/><path fill="#19ff73" d="M1168 192h4v4h-4z"/><path fill="#29ff73" d="M1172 192h4v4h-4z"/><path fill="#31ff73" d="M1176 192h4v4h-4z"/><path fill="#42ff73" d="M1180 192h4v4h-4z"/><path fill="#4aff73" d="M1184 192h4v4h-4z"/><path fill="#5aff73" d="M1188 192h4v4h-4z"/><path fill="#63ff73" d="M1192 192h4v4h-4z"/><path fill="#73ff73" d="M1196 192h4v4h-4z"/><path fill="#84ff73" d="M1200 192h4v4h-4z"/><path fill="#94ff73" d="M1204 192h4v4h-4z"/><path fill="#9cff7b" d="M1208 192h4v4h-4z"/><path fill="#adff7b" d="M1212 192h4v4h-4z"/><path fill="#bdff7b" d="M1216 192h4v4h-4z"/><path fill="#ceff7b" d="M1220 192h4v4h-4z"/><path fill="#deff7b" d="M1224 192h4v4h-4z"/><path fill="#efff7b" d="M1228 192h4v4h-4z"/><path fill="#ffff7b" d="M1232 192h4v4h-4z"/><path fill="#ffef73" d="M1236 192h4v4h-4z"/><path fill="#ffde6b" d="M1240 192h4v4h-4z"/><path fill="#ffce63" d="M1244 192h4v4h-4z"/><path fill="#ffc563" d="M1248 192h4v4h-4z"/><path fill="#ffb55a" d="M1252 192h4v4h-4z"/><path fill="#ffad5a" d="M1256 192h4v4h-4z"/><path fill="#ffa552" d="M1260 192h4v4h-4z"/><path fill="#ff9c52" d="M1264 192h4v4h-4z"/><path fill="#ff944a" d="M1268 192h4v4h-4z"/><path fill="#ff8c4a" d="M1272 192h4v4h-4z"/><path fill="#ff8442" d="M1276 192h4v4h-4z"/><path fill="#ff7b42" d="M1280 192h4v4h-4z"/><path fill="#ff7342" d="M1284 192h4v4h-4z"/><path fill="#ff6b3a" d="M1292 192h4v4h-4z"/><path fill="#ff633a" d="M1296 192h4v4h-4z"/><path fill="#ff5a31" d="M1304 192h8v4h-8z"/><path fill="#ff5231" d="M1312 192h4v4h-4zM1312 196h4v4h-4z"/><path fill="#ff4229" d="M1328 192h8v4h-8zM1332 196h4v4h-4z"/><path fill="#ff3a29" d="M1336 192h4v4h-4zM1336 196h12v4h-12z"/><path fill="#ff3121" d="M1348 192h16v4h-16zM1356 196h4v4h-4z"/><path fill="#ff2921" d="M1364 192h4v4h-4zM1360 196h16v4h-16z"/><path fill="#ff1919" d="M1396 192h12v4h-12zM1392 196h20v4h-20z"/><path fill="#ff0810" d="M1440 192h28v4h-28zM1436 196h28v4h-28zM1452 200h12v4h-12z"/><path fill="#00ff7b" d="M1156 196h8v4h-8z"/><path fill="#10ff7b" d="M1164 196h4v4h-4z"/><path fill="#19ff7b" d="M1168 196h4v4h-4z"/><path fill="#29ff7b" d="M1172 196h4v4h-4z"/><path fill="#31ff7b" d="M1176 196h4v4h-4z"/><path fill="#42ff84" d="M1180 196h4v4h-4z"/><path fill="#4aff84" d="M1184 196h4v4h-4z"/><path fill="#5aff84" d="M1188 196h4v4h-4z"/><path fill="#63ff84" d="M1192 196h4v4h-4z"/><path fill="#73ff84" d="M1196 196h4v4h-4z"/><path fill="#84ff84" d="M1200 196h4v4h-4z"/><path fill="#94ff84" d="M1204 196h4v4h-4z"/><path fill="#9cff84" d="M1208 196h4v4h-4z"/><path fill="#adff84" d="M1212 196h4v4h-4z"/><path fill="#bdff84" d="M1216 196h4v4h-4z"/><path fill="#ceff84" d="M1220 196h4v4h-4z"/><path fill="#deff8c" d="M1224 196h4v4h-4z"/><path fill="#efff8c" d="M1228 196h4v4h-4z"/><path fill="#fff78c" d="M1232 196h4v4h-4z"/><path fill="#ffe684" d="M1236 196h4v4h-4z"/><path fill="#ffde7b" d="M1240 196h4v4h-4z"/><path fill="#ffce73" d="M1244 196h4v4h-4z"/><path fill="#ffbd6b" d="M1248 196h4v4h-4z"/><path fill="#ffb563" d="M1252 196h4v4h-4z"/><path fill="#ffad63" d="M1256 196h4v4h-4z"/><path fill="#ffa55a" d="M1260 196h4v4h-4z"/><path fill="#ff945a" d="M1264 196h4v4h-4z"/><path fill="#ff8c52" d="M1268 196h4v4h-4z"/><path fill="#ff8452" d="M1272 196h4v4h-4z"/><path fill="#ff844a" d="M1276 196h4v4h-4z"/><path fill="#ff7b4a" d="M1280 196h4v4h-4z"/><path fill="#ff734a" d="M1284 196h4v4h-4z"/><path fill="#ff6b42" d="M1288 196h8v4h-8z"/><path fill="#ff6342" d="M1296 196h4v4h-4zM1296 200h4v4h-4z"/><path fill="#ff5a3a" d="M1300 196h8v4h-8z"/><path fill="#ff523a" d="M1308 196h4v4h-4zM1312 200h4v4h-4z"/><path fill="#ff4a31" d="M1316 196h8v4h-8z"/><path fill="#ff4231" d="M1324 196h8v4h-8zM1328 200h8v4h-8z"/><path fill="#ff3129" d="M1348 196h8v4h-8zM1348 200h12v4h-12z"/><path fill="#ff2121" d="M1376 196h12v4h-12zM1372 200h16v4h-16z"/><path fill="#ff1019" d="M1412 196h20v4h-20zM1408 200h24v4h-24zM1424 204h8v4h-8z"/><path fill="#ff0010" d="M1464 196h28v4h-28zM1464 200h24v4h-24zM1476 204h8v4h-8z"/><path fill="#00ff8c" d="M1156 200h8v4h-8z"/><path fill="#10ff8c" d="M1164 200h4v4h-4z"/><path fill="#19ff8c" d="M1168 200h4v4h-4z"/><path fill="#21ff8c" d="M1172 200h4v4h-4z"/><path fill="#31ff8c" d="M1176 200h4v4h-4z"/><path fill="#3aff8c" d="M1180 200h4v4h-4z"/><path fill="#4aff8c" d="M1184 200h4v4h-4z"/><path fill="#5aff8c" d="M1188 200h4v4h-4z"/><path fill="#63ff8c" d="M1192 200h4v4h-4z"/><path fill="#73ff94" d="M1196 200h4v4h-4z"/><path fill="#84ff94" d="M1200 200h4v4h-4z"/><path fill="#94ff94" d="M1204 200h4v4h-4z"/><path fill="#9cff94" d="M1208 200h4v4h-4z"/><path fill="#adff94" d="M1212 200h4v4h-4z"/><path fill="#bdff94" d="M1216 200h4v4h-4z"/><path fill="#ceff94" d="M1220 200h4v4h-4z"/><path fill="#deff94" d="M1224 200h4v4h-4z"/><path fill="#f7ff9c" d="M1228 200h4v4h-4z"/><path fill="#fff794" d="M1232 200h4v4h-4z"/><path fill="#ffe68c" d="M1236 200h4v4h-4z"/><path fill="#ffd684" d="M1240 200h4v4h-4z"/><path fill="#ffce7b" d="M1244 200h4v4h-4z"/><path fill="#ffbd73" d="M1248 200h4v4h-4z"/><path fill="#ffb573" d="M1252 200h4v4h-4z"/><path fill="#ffa56b" d="M1256 200h4v4h-4z"/><path fill="#ff9c63" d="M1260 200h4v4h-4z"/><path fill="#ff9463" d="M1264 200h4v4h-4z"/><path fill="#ff8c5a" d="M1268 200h4v4h-4z"/><path fill="#ff845a" d="M1272 200h4v4h-4z"/><path fill="#ff7b52" d="M1276 200h8v4h-8z"/><path fill="#ff7352" d="M1284 200h4v4h-4zM1284 204h4v4h-4z"/><path fill="#ff6b4a" d="M1288 200h4v4h-4z"/><path fill="#ff634a" d="M1292 200h4v4h-4zM1296 204h4v4h-4z"/><path fill="#ff5a42" d="M1300 200h8v4h-8z"/><path fill="#ff5242" d="M1308 200h4v4h-4zM1308 204h4v4h-4z"/><path fill="#ff4a3a" d="M1316 200h8v4h-8z"/><path fill="#ff423a" d="M1324 200h4v4h-4zM1324 204h8v4h-8z"/><path fill="#ff3a31" d="M1336 200h8v4h-8zM1340 204h4v4h-4z"/><path fill="#ff3131" d="M1344 200h4v4h-4zM1344 204h12v4h-12z"/><path fill="#ff2929" d="M1360 200h12v4h-12zM1360 204h12v4h-12z"/><path fill="#ff1921" d="M1388 200h20v4h-20zM1388 204h20v4h-20z"/><path fill="#ff0819" d="M1432 200h20v4h-20zM1432 204h28v4h-28zM1444 208h12v4h-12z"/><path fill="#00ff94" d="M1156 204h8v4h-8z"/><path fill="#08ff94" d="M1164 204h4v4h-4z"/><path fill="#19ff94" d="M1168 204h4v4h-4z"/><path fill="#21ff94" d="M1172 204h4v4h-4z"/><path fill="#31ff9c" d="M1176 204h4v4h-4z"/><path fill="#3aff9c" d="M1180 204h4v4h-4z"/><path fill="#4aff9c" d="M1184 204h4v4h-4z"/><path fill="#5aff9c" d="M1188 204h4v4h-4z"/><path fill="#63ff9c" d="M1192 204h4v4h-4z"/><path fill="#73ff9c" d="M1196 204h4v4h-4z"/><path fill="#84ff9c" d="M1200 204h4v4h-4z"/><path fill="#94ffa5" d="M1204 204h4v4h-4z"/><path fill="#9cffa5" d="M1208 204h4v4h-4z"/><path fill="#adffa5" d="M1212 204h4v4h-4z"/><path fill="#bdffa5" d="M1216 204h4v4h-4z"/><path fill="#ceffa5" d="M1220 204h4v4h-4z"/><path fill="#e6ffa5" d="M1224 204h4v4h-4z"/><path fill="#f7ffad" d="M1228 204h4v4h-4z"/><path fill="#fff7a5" d="M1232 204h4v4h-4z"/><path fill="#ffe69c" d="M1236 204h4v4h-4z"/><path fill="#ffd694" d="M1240 204h4v4h-4z"/><path fill="#ffc58c" d="M1244 204h4v4h-4z"/><path fill="#ffbd84" d="M1248 204h4v4h-4z"/><path fill="#ffb57b" d="M1252 204h4v4h-4z"/><path fill="#ffa573" d="M1256 204h4v4h-4z"/><path fill="#ff9c73" d="M1260 204h4v4h-4z"/><path fill="#ff946b" d="M1264 204h4v4h-4z"/><path fill="#ff8c63" d="M1268 204h4v4h-4z"/><path fill="#ff8463" d="M1272 204h4v4h-4z"/><path fill="#ff7b5a" d="M1276 204h4v4h-4z"/><path fill="#ff735a" d="M1280 204h4v4h-4z"/><path fill="#ff6b52" d="M1288 204h4v4h-4z"/><path fill="#ff6352" d="M1292 204h4v4h-4z"/><path fill="#ff5a4a" d="M1300 204h8v4h-8z"/><path fill="#ff4a42" d="M1312 204h12v4h-12z"/><path fill="#ff3a3a" d="M1332 204h8v4h-8zM1336 208h4v4h-4z"/><path fill="#ff2931" d="M1356 204h4v4h-4zM1352 208h16v4h-16z"/><path fill="#ff2129" d="M1372 204h16v4h-16zM1376 208h8v4h-8z"/><path fill="#ff1021" d="M1408 204h16v4h-16zM1404 208h24v4h-24zM1420 212h4v4h-4z"/><path fill="#ff0019" d="M1460 204h16v4h-16zM1456 208h24v4h-24zM1464 212h12v4h-12z"/><path fill="#00ff9c" d="M1156 208h4v4h-4z"/><path fill="#00ffa5" d="M1160 208h4v4h-4z"/><path fill="#08ffa5" d="M1164 208h4v4h-4z"/><path fill="#19ffa5" d="M1168 208h4v4h-4z"/><path fill="#21ffa5" d="M1172 208h4v4h-4z"/><path fill="#31ffa5" d="M1176 208h4v4h-4z"/><path fill="#3affa5" d="M1180 208h4v4h-4z"/><path fill="#4affa5" d="M1184 208h4v4h-4z"/><path fill="#52ffad" d="M1188 208h4v4h-4z"/><path fill="#63ffad" d="M1192 208h4v4h-4z"/><path fill="#73ffad" d="M1196 208h4v4h-4z"/><path fill="#84ffad" d="M1200 208h4v4h-4z"/><path fill="#94ffad" d="M1204 208h4v4h-4z"/><path fill="#9cffb5" d="M1208 208h4v4h-4z"/><path fill="#adffb5" d="M1212 208h4v4h-4z"/><path fill="#bdffb5" d="M1216 208h4v4h-4z"/><path fill="#d6ffb5" d="M1220 208h4v4h-4z"/><path fill="#e6ffb5" d="M1224 208h4v4h-4z"/><path fill="#f7ffbd" d="M1228 208h4v4h-4z"/><path fill="#fff7b5" d="M1232 208h4v4h-4z"/><path fill="#ffe6ad" d="M1236 208h4v4h-4z"/><path fill="#ffd69c" d="M1240 208h4v4h-4z"/><path fill="#ffc594" d="M1244 208h4v4h-4z"/><path fill="#ffbd8c" d="M1248 208h4v4h-4z"/><path fill="#ffad84" d="M1252 208h4v4h-4z"/><path fill="#ffa584" d="M1256 208h4v4h-4z"/><path fill="#ff9c7b" d="M1260 208h4v4h-4z"/><path fill="#ff9473" d="M1264 208h4v4h-4z"/><path fill="#ff8c73" d="M1268 208h4v4h-4z"/><path fill="#ff846b" d="M1272 208h4v4h-4z"/><path fill="#ff7b63" d="M1276 208h4v4h-4z"/><path fill="#ff7363" d="M1280 208h4v4h-4z"/><path fill="#ff6b5a" d="M1284 208h8v4h-8z"/><path fill="#ff635a" d="M1292 208h4v4h-4z"/><path fill="#ff5a52" d="M1296 208h8v4h-8z"/><path fill="#ff524a" d="M1304 208h8v4h-8z"/><path fill="#ff4a4a" d="M1312 208h8v4h-8zM1316 212h4v4h-4z"/><path fill="#ff4242" d="M1320 208h12v4h-12z"/><path fill="#ff3a42" d="M1332 208h4v4h-4zM1328 212h12v4h-12z"/><path fill="#ff313a" d="M1340 208h12v4h-12zM1344 212h8v4h-8z"/><path fill="#ff2131" d="M1368 208h8v4h-8zM1364 212h16v4h-16z"/><path fill="#ff1929" d="M1384 208h20v4h-20zM1392 212h8v4h-8z"/><path fill="#ff0821" d="M1428 208h16v4h-16zM1424 212h28v4h-28zM1440 216h8v4h-8z"/><path fill="#00ffad" d="M1156 212h8v4h-8z"/><path fill="#08ffad" d="M1164 212h4v4h-4z"/><path fill="#10ffad" d="M1168 212h4v4h-4z"/><path fill="#21ffb5" d="M1172 212h4v4h-4z"/><path fill="#29ffb5" d="M1176 212h4v4h-4z"/><path fill="#3affb5" d="M1180 212h4v4h-4z"/><path fill="#4affb5" d="M1184 212h4v4h-4z"/><path fill="#52ffb5" d="M1188 212h4v4h-4z"/><path fill="#63ffbd" d="M1192 212h4v4h-4z"/><path fill="#73ffbd" d="M1196 212h4v4h-4z"/><path fill="#84ffbd" d="M1200 212h4v4h-4z"/><path fill="#94ffbd" d="M1204 212h4v4h-4z"/><path fill="#9cffbd" d="M1208 212h4v4h-4z"/><path fill="#adffc5" d="M1212 212h4v4h-4z"/><path fill="#c5ffc5" d="M1216 212h4v4h-4z"/><path fill="#d6ffc5" d="M1220 212h4v4h-4z"/><path fill="#e6ffc5" d="M1224 212h4v4h-4z"/><path fill="#f7ffce" d="M1228 212h4v4h-4z"/><path fill="#fff7c5" d="M1232 212h4v4h-4z"/><path fill="#ffdeb5" d="M1236 212h4v4h-4z"/><path fill="#ffd6ad" d="M1240 212h4v4h-4z"/><path fill="#ffc5a5" d="M1244 212h4v4h-4z"/><path fill="#ffb59c" d="M1248 212h4v4h-4z"/><path fill="#ffad94" d="M1252 212h4v4h-4z"/><path fill="#ffa58c" d="M1256 212h4v4h-4z"/><path fill="#ff9c84" d="M1260 212h4v4h-4z"/><path fill="#ff947b" d="M1264 212h4v4h-4z"/><path fill="#ff8c7b" d="M1268 212h4v4h-4z"/><path fill="#ff8473" d="M1272 212h4v4h-4z"/><path fill="#ff7b73" d="M1276 212h4v4h-4z"/><path fill="#ff736b" d="M1280 212h4v4h-4z"/><path fill="#ff6b63" d="M1284 212h8v4h-8z"/><path fill="#ff6363" d="M1292 212h4v4h-4zM1292 216h4v4h-4z"/><path fill="#ff5a5a" d="M1296 212h8v4h-8z"/><path fill="#ff5252" d="M1304 212h8v4h-8z"/><path fill="#ff4a52" d="M1312 212h4v4h-4zM1312 216h4v4h-4z"/><path fill="#ff424a" d="M1320 212h8v4h-8zM1324 216h4v4h-4z"/><path fill="#ff3142" d="M1340 212h4v4h-4zM1340 216h8v4h-8z"/><path fill="#ff293a" d="M1352 212h12v4h-12zM1356 216h8v4h-8z"/><path fill="#ff1931" d="M1380 212h12v4h-12zM1380 216h16v4h-16zM1392 220h4v4h-4z"/><path fill="#ff1029" d="M1400 212h20v4h-20zM1404 216h16v4h-16z"/><path fill="#ff0021" d="M1452 212h12v4h-12zM1448 216h24v4h-24zM1456 220h12v4h-12z"/><path fill="#00ffbd" d="M1156 216h8v4h-8z"/><path fill="#08ffbd" d="M1164 216h4v4h-4z"/><path fill="#10ffbd" d="M1168 216h4v4h-4z"/><path fill="#21ffbd" d="M1172 216h4v4h-4z"/><path fill="#29ffc5" d="M1176 216h4v4h-4z"/><path fill="#3affc5" d="M1180 216h4v4h-4z"/><path fill="#4affc5" d="M1184 216h4v4h-4z"/><path fill="#52ffc5" d="M1188 216h4v4h-4z"/><path fill="#63ffc5" d="M1192 216h4v4h-4z"/><path fill="#73ffce" d="M1196 216h4v4h-4z"/><path fill="#84ffce" d="M1200 216h4v4h-4z"/><path fill="#94ffce" d="M1204 216h4v4h-4z"/><path fill="#a5ffce" d="M1208 216h4v4h-4z"/><path fill="#b5ffd6" d="M1212 216h4v4h-4z"/><path fill="#c5ffd6" d="M1216 216h4v4h-4z"/><path fill="#d6ffd6" d="M1220 216h4v4h-4z"/><path fill="#e6ffd6" d="M1224 216h4v4h-4z"/><path fill="#f7ffde" d="M1228 216h4v4h-4z"/><path fill="#ffefd6" d="M1232 216h4v4h-4z"/><path fill="#ffdec5" d="M1236 216h4v4h-4z"/><path fill="#ffcebd" d="M1240 216h4v4h-4z"/><path fill="#ffc5ad" d="M1244 216h4v4h-4z"/><path fill="#ffb5a5" d="M1248 216h4v4h-4z"/><path fill="#ffad9c" d="M1252 216h4v4h-4z"/><path fill="#ffa594" d="M1256 216h4v4h-4z"/><path fill="#ff948c" d="M1260 216h4v4h-4z"/><path fill="#ff8c8c" d="M1264 216h4v4h-4z"/><path fill="#ff8484" d="M1268 216h4v4h-4z"/><path fill="#ff7b7b" d="M1272 216h8v4h-8z"/><path fill="#ff7373" d="M1280 216h4v4h-4z"/><path fill="#ff6b6b" d="M1284 216h4v4h-4z"/><path fill="#ff636b" d="M1288 216h4v4h-4z"/><path fill="#ff5a63" d="M1296 216h4v4h-4z"/><path fill="#ff5263" d="M1300 216h4v4h-4zM1304 220h4v4h-4z"/><path fill="#ff525a" d="M1304 216h4v4h-4z"/><path fill="#ff4a5a" d="M1308 216h4v4h-4zM1312 220h4v4h-4z"/><path fill="#ff4252" d="M1316 216h8v4h-8z"/><path fill="#ff3a4a" d="M1328 216h8v4h-8z"/><path fill="#ff314a" d="M1336 216h4v4h-4zM1336 220h12v4h-12z"/><path fill="#ff2942" d="M1348 216h8v4h-8zM1352 220h8v4h-8z"/><path fill="#ff213a" d="M1364 216h16v4h-16zM1368 220h8v4h-8z"/><path fill="#ff1031" d="M1396 216h8v4h-8zM1396 220h20v4h-20zM1404 224h8v4h-8z"/><path fill="#ff0829" d="M1420 216h20v4h-20zM1420 220h24v4h-24zM1432 224h8v4h-8z"/><path fill="#00ffc5" d="M1160 220h4v4h-4z"/><path fill="#00ffce" d="M1164 220h4v4h-4z"/><path fill="#10ffce" d="M1168 220h4v4h-4z"/><path fill="#21ffce" d="M1172 220h4v4h-4z"/><path fill="#29ffce" d="M1176 220h4v4h-4z"/><path fill="#3affd6" d="M1180 220h4v4h-4z"/><path fill="#42ffd6" d="M1184 220h4v4h-4z"/><path fill="#52ffd6" d="M1188 220h4v4h-4z"/><path fill="#63ffd6" d="M1192 220h4v4h-4z"/><path fill="#73ffd6" d="M1196 220h4v4h-4z"/><path fill="#84ffde" d="M1200 220h4v4h-4z"/><path fill="#94ffde" d="M1204 220h4v4h-4z"/><path fill="#a5ffde" d="M1208 220h4v4h-4z"/><path fill="#b5ffe6" d="M1212 220h4v4h-4z"/><path fill="#c5ffe6" d="M1216 220h4v4h-4z"/><path fill="#d6ffe6" d="M1220 220h4v4h-4z"/><path fill="#e6ffef" d="M1224 220h4v4h-4z"/><path fill="#ffffef" d="M1228 220h4v4h-4z"/><path fill="#ffefde" d="M1232 220h4v4h-4z"/><path fill="#ffded6" d="M1236 220h4v4h-4z"/><path fill="#ffcec5" d="M1240 220h4v4h-4z"/><path fill="#ffbdbd" d="M1244 220h4v4h-4z"/><path fill="#ffb5b5" d="M1248 220h4v4h-4z"/><path fill="#ffadad" d="M1252 220h4v4h-4z"/><path fill="#ff9ca5" d="M1256 220h4v4h-4z"/><path fill="#ff949c" d="M1260 220h4v4h-4z"/><path fill="#ff8c94" d="M1264 220h4v4h-4z"/><path fill="#ff848c" d="M1268 220h4v4h-4z"/><path fill="#ff7b84" d="M1272 220h4v4h-4z"/><path fill="#ff7384" d="M1276 220h4v4h-4z"/><path fill="#ff737b" d="M1280 220h4v4h-4z"/><path fill="#ff6b7b" d="M1284 220h4v4h-4z"/><path fill="#ff6373" d="M1288 220h4v4h-4z"/><path fill="#ff5a6b" d="M1292 220h8v4h-8z"/><path fill="#ff526b" d="M1300 220h4v4h-4zM1300 224h4v4h-4z"/><path fill="#ff4a63" d="M1308 220h4v4h-4zM1312 224h4v4h-4z"/><path fill="#ff425a" d="M1316 220h8v4h-8zM1320 224h4v4h-4z"/><path fill="#ff3a52" d="M1324 220h12v4h-12z"/><path fill="#ff294a" d="M1348 220h4v4h-4zM1344 224h16v4h-16z"/><path fill="#ff2142" d="M1360 220h8v4h-8zM1360 224h12v4h-12z"/><path fill="#ff193a" d="M1376 220h16v4h-16zM1380 224h12v4h-12z"/><path fill="#ff0831" d="M1416 220h4v4h-4zM1412 224h20v4h-20zM1416 228h20v4h-20z"/><path fill="#ff0029" d="M1444 220h12v4h-12zM1440 224h24v4h-24zM1448 228h12v4h-12z"/><path fill="#00ffd6" d="M1160 224h8v4h-8z"/><path fill="#10ffde" d="M1168 224h4v4h-4z"/><path fill="#19ffde" d="M1172 224h4v4h-4z"/><path fill="#29ffde" d="M1176 224h4v4h-4z"/><path fill="#3affde" d="M1180 224h4v4h-4z"/><path fill="#42ffe6" d="M1184 224h4v4h-4z"/><path fill="#52ffe6" d="M1188 224h4v4h-4z"/><path fill="#63ffe6" d="M1192 224h4v4h-4z"/><path fill="#73ffe6" d="M1196 224h4v4h-4z"/><path fill="#84ffef" d="M1200 224h4v4h-4z"/><path fill="#94ffef" d="M1204 224h4v4h-4z"/><path fill="#a5ffef" d="M1208 224h4v4h-4z"/><path fill="#b5fff7" d="M1212 224h4v4h-4z"/><path fill="#c5fff7" d="M1216 224h4v4h-4z"/><path fill="#d6fff7" d="M1220 224h4v4h-4z"/><path fill="#e6ffff" d="M1224 224h4v4h-4z"/><path fill="#ffffff" d="M1228 224h4v4h-4z"/><path fill="#ffefef" d="M1232 224h4v4h-4z"/><path fill="#ffdee6" d="M1236 224h4v4h-4z"/><path fill="#ffced6" d="M1240 224h4v4h-4z"/><path fill="#ffbdce" d="M1244 224h4v4h-4z"/><path fill="#ffb5bd" d="M1248 224h4v4h-4z"/><path fill="#ffa5b5" d="M1252 224h4v4h-4z"/><path fill="#ff9cad" d="M1256 224h4v4h-4z"/><path fill="#ff94a5" d="M1260 224h4v4h-4z"/><path fill="#ff8c9c" d="M1264 224h4v4h-4z"/><path fill="#ff8494" d="M1268 224h4v4h-4z"/><path fill="#ff7b94" d="M1272 224h4v4h-4z"/><path fill="#ff738c" d="M1276 224h4v4h-4z"/><path fill="#ff6b84" d="M1280 224h8v4h-8z"/><path fill="#ff637b" d="M1288 224h4v4h-4z"/><path fill="#ff5a73" d="M1292 224h8v4h-8z"/><path fill="#ff4a6b" d="M1304 224h8v4h-8zM1308 228h4v4h-4z"/><path fill="#ff4263" d="M1316 224h4v4h-4z"/><path fill="#ff3a5a" d="M1324 224h8v4h-8zM1328 228h4v4h-4z"/><path fill="#ff3152" d="M1332 224h12v4h-12zM1340 228h4v4h-4z"/><path fill="#ff1942" d="M1372 224h8v4h-8zM1372 228h16v4h-16zM1384 232h4v4h-4z"/><path fill="#ff103a" d="M1392 224h12v4h-12zM1392 228h20v4h-20zM1404 232h4v4h-4z"/><path fill="#00ffe6" d="M1160 228h8v4h-8z"/><path fill="#10ffe6" d="M1168 228h4v4h-4z"/><path fill="#19ffef" d="M1172 228h4v4h-4z"/><path fill="#29ffef" d="M1176 228h4v4h-4z"/><path fill="#31ffef" d="M1180 228h4v4h-4z"/><path fill="#42fff7" d="M1184 228h4v4h-4z"/><path fill="#52fff7" d="M1188 228h4v4h-4z"/><path fill="#63fff7" d="M1192 228h4v4h-4z"/><path fill="#73fff7" d="M1196 228h4v4h-4z"/><path fill="#84ffff" d="M1200 228h4v4h-4z"/><path fill="#8cffff" d="M1204 228h4v4h-4z"/><path fill="#9cf7ff" d="M1208 228h4v4h-4z"/><path fill="#adf7ff" d="M1212 228h4v4h-4z"/><path fill="#bdf7ff" d="M1216 228h4v4h-4z"/><path fill="#ceefff" d="M1220 228h4v4h-4z"/><path fill="#deefff" d="M1224 228h4v4h-4z"/><path fill="#efefff" d="M1228 228h4v4h-4z"/><path fill="#ffe6ff" d="M1232 228h4v4h-4z"/><path fill="#ffdeef" d="M1236 228h4v4h-4z"/><path fill="#ffcee6" d="M1240 228h4v4h-4z"/><path fill="#ffbdd6" d="M1244 228h4v4h-4z"/><path fill="#ffadce" d="M1248 228h4v4h-4z"/><path fill="#ffa5c5" d="M1252 228h4v4h-4z"/><path fill="#ff9cb5" d="M1256 228h4v4h-4z"/><path fill="#ff94ad" d="M1260 228h4v4h-4z"/><path fill="#ff8ca5" d="M1264 228h4v4h-4z"/><path fill="#ff84a5" d="M1268 228h4v4h-4z"/><path fill="#ff7b9c" d="M1272 228h4v4h-4z"/><path fill="#ff7394" d="M1276 228h4v4h-4z"/><path fill="#ff6b8c" d="M1280 228h4v4h-4z"/><path fill="#ff638c" d="M1284 228h4v4h-4z"/><path fill="#ff6384" d="M1288 228h4v4h-4z"/><path fill="#ff5a7b" d="M1292 228h4v4h-4z"/><path fill="#ff527b" d="M1296 228h4v4h-4zM1300 232h4v4h-4z"/><path fill="#ff5273" d="M1300 228h4v4h-4z"/><path fill="#ff4a73" d="M1304 228h4v4h-4zM1308 232h4v4h-4z"/><path fill="#ff426b" d="M1312 228h8v4h-8zM1316 232h4v4h-4z"/><path fill="#ff3a63" d="M1320 228h8v4h-8z"/><path fill="#ff315a" d="M1332 228h8v4h-8zM1336 232h4v4h-4z"/><path fill="#ff2952" d="M1344 228h12v4h-12z"/><path fill="#ff214a" d="M1356 228h16v4h-16zM1364 232h4v4h-4z"/><path fill="#ff1042" d="M1388 228h4v4h-4zM1388 232h16v4h-16zM1396 236h8v4h-8z"/><path fill="#ff083a" d="M1412 228h4v4h-4zM1408 232h24v4h-24zM1416 236h12v4h-12z"/><path fill="#ff0031" d="M1436 228h12v4h-12zM1432 232h24v4h-24zM1444 236h8v4h-8z"/><path fill="#00fff7" d="M1160 232h8v4h-8z"/><path fill="#08fff7" d="M1168 232h4v4h-4z"/><path fill="#19ffff" d="M1172 232h4v4h-4z"/><path fill="#29ffff" d="M1176 232h4v4h-4z"/><path fill="#31ffff" d="M1180 232h4v4h-4z"/><path fill="#42ffff" d="M1184 232h4v4h-4z"/><path fill="#52f7ff" d="M1188 232h4v4h-4z"/><path fill="#5af7ff" d="M1192 232h4v4h-4z"/><path fill="#6bf7ff" d="M1196 232h4v4h-4z"/><path fill="#7befff" d="M1200 232h4v4h-4z"/><path fill="#84efff" d="M1204 232h4v4h-4z"/><path fill="#94e6ff" d="M1208 232h4v4h-4z"/><path fill="#a5e6ff" d="M1212 232h4v4h-4z"/><path fill="#b5e6ff" d="M1216 232h4v4h-4z"/><path fill="#bddeff" d="M1220 232h4v4h-4z"/><path fill="#cedeff" d="M1224 232h4v4h-4z"/><path fill="#dedeff" d="M1228 232h4v4h-4z"/><path fill="#efd6ff" d="M1232 232h4v4h-4z"/><path fill="#ffd6ff" d="M1236 232h4v4h-4z"/><path fill="#ffc5f7" d="M1240 232h4v4h-4z"/><path fill="#ffbde6" d="M1244 232h4v4h-4z"/><path fill="#ffadd6" d="M1248 232h4v4h-4z"/><path fill="#ffa5ce" d="M1252 232h4v4h-4z"/><path fill="#ff9cc5" d="M1256 232h4v4h-4z"/><path fill="#ff8cbd" d="M1260 232h4v4h-4z"/><path fill="#ff84b5" d="M1264 232h4v4h-4z"/><path fill="#ff7bad" d="M1268 232h4v4h-4z"/><path fill="#ff73a5" d="M1272 232h4v4h-4z"/><path fill="#ff739c" d="M1276 232h4v4h-4z"/><path fill="#ff6b94" d="M1280 232h4v4h-4z"/><path fill="#ff6394" d="M1284 232h4v4h-4z"/><path fill="#ff5a8c" d="M1288 232h4v4h-4zM1292 236h4v4h-4z"/><path fill="#ff5a84" d="M1292 232h4v4h-4z"/><path fill="#ff5284" d="M1296 232h4v4h-4z"/><path fill="#ff4a7b" d="M1304 232h4v4h-4z"/><path fill="#ff4273" d="M1312 232h4v4h-4z"/><path fill="#ff3a6b" d="M1320 232h8v4h-8zM1324 236h4v4h-4z"/><path fill="#ff3163" d="M1328 232h8v4h-8zM1336 236h4v4h-4z"/><path fill="#ff295a" d="M1340 232h12v4h-12zM1348 236h4v4h-4z"/><path fill="#ff2152" d="M1352 232h12v4h-12zM1360 236h4v4h-4z"/><path fill="#ff194a" d="M1368 232h16v4h-16zM1376 236h8v4h-8z"/><path fill="#00ffff" d="M1160 236h4v4h-4z"/><path fill="#00f7ff" d="M1164 236h4v4h-4z"/><path fill="#08f7ff" d="M1168 236h4v4h-4z"/><path fill="#19f7ff" d="M1172 236h4v4h-4z"/><path fill="#21efff" d="M1176 236h4v4h-4z"/><path fill="#31efff" d="M1180 236h4v4h-4z"/><path fill="#3aefff" d="M1184 236h4v4h-4z"/><path fill="#4ae6ff" d="M1188 236h4v4h-4z"/><path fill="#52e6ff" d="M1192 236h4v4h-4z"/><path fill="#63e6ff" d="M1196 236h4v4h-4z"/><path fill="#73deff" d="M1200 236h4v4h-4z"/><path fill="#7bdeff" d="M1204 236h4v4h-4z"/><path fill="#8cdeff" d="M1208 236h4v4h-4z"/><path fill="#9cd6ff" d="M1212 236h4v4h-4z"/><path fill="#a5d6ff" d="M1216 236h4v4h-4z"/><path fill="#b5d6ff" d="M1220 236h4v4h-4z"/><path fill="#c5ceff" d="M1224 236h4v4h-4z"/><path fill="#ceceff" d="M1228 236h4v4h-4z"/><path fill="#deceff" d="M1232 236h4v4h-4z"/><path fill="#efc5ff" d="M1236 236h4v4h-4z"/><path fill="#ffc5ff" d="M1240 236h4v4h-4z"/><path fill="#ffb5f7" d="M1244 236h4v4h-4z"/><path fill="#ffade6" d="M1248 236h4v4h-4z"/><path fill="#ffa5de" d="M1252 236h4v4h-4z"/><path fill="#ff94ce" d="M1256 236h4v4h-4z"/><path fill="#ff8cc5" d="M1260 236h4v4h-4z"/><path fill="#ff84bd" d="M1264 236h4v4h-4z"/><path fill="#ff7bb5" d="M1268 236h4v4h-4z"/><path fill="#ff73ad" d="M1272 236h4v4h-4z"/><path fill="#ff6ba5" d="M1276 236h4v4h-4z"/><path fill="#ff6b9c" d="M1280 236h4v4h-4z"/><path fill="#ff639c" d="M1284 236h4v4h-4z"/><path fill="#ff5a94" d="M1288 236h4v4h-4z"/><path fill="#ff528c" d="M1296 236h4v4h-4z"/><path fill="#ff4a84" d="M1300 236h8v4h-8z"/><path fill="#ff427b" d="M1308 236h8v4h-8zM1312 240h4v4h-4z"/><path fill="#ff3a73" d="M1316 236h8v4h-8z"/><path fill="#ff316b" d="M1328 236h8v4h-8zM1332 240h4v4h-4z"/><path fill="#ff2963" d="M1340 236h8v4h-8zM1344 240h4v4h-4z"/><path fill="#ff215a" d="M1352 236h8v4h-8zM1356 240h8v4h-8z"/><path fill="#ff1952" d="M1364 236h12v4h-12zM1368 240h12v4h-12z"/><path fill="#ff104a" d="M1384 236h12v4h-12zM1384 240h16v4h-16z"/><path fill="#ff0842" d="M1404 236h12v4h-12zM1404 240h20v4h-20zM1416 244h4v4h-4z"/><path fill="#ff003a" d="M1428 236h16v4h-16zM1428 240h20v4h-20zM1440 244h4v4h-4z"/><path fill="#00efff" d="M1160 240h8v4h-8z"/><path fill="#08e6ff" d="M1168 240h4v4h-4z"/><path fill="#10e6ff" d="M1172 240h4v4h-4z"/><path fill="#21e6ff" d="M1176 240h4v4h-4z"/><path fill="#29deff" d="M1180 240h4v4h-4z"/><path fill="#3adeff" d="M1184 240h4v4h-4z"/><path fill="#42deff" d="M1188 240h4v4h-4z"/><path fill="#52d6ff" d="M1192 240h4v4h-4z"/><path fill="#5ad6ff" d="M1196 240h4v4h-4z"/><path fill="#6bd6ff" d="M1200 240h4v4h-4z"/><path fill="#73ceff" d="M1204 240h4v4h-4z"/><path fill="#84ceff" d="M1208 240h4v4h-4z"/><path fill="#94ceff" d="M1212 240h4v4h-4z"/><path fill="#9cc5ff" d="M1216 240h4v4h-4z"/><path fill="#adc5ff" d="M1220 240h4v4h-4z"/><path fill="#b5c5ff" d="M1224 240h4v4h-4z"/><path fill="#c5bdff" d="M1228 240h4v4h-4z"/><path fill="#d6bdff" d="M1232 240h4v4h-4z"/><path fill="#debdff" d="M1236 240h4v4h-4z"/><path fill="#efb5ff" d="M1240 240h4v4h-4z"/><path fill="#ffb5ff" d="M1244 240h4v4h-4z"/><path fill="#ffadf7" d="M1248 240h4v4h-4z"/><path fill="#ff9ce6" d="M1252 240h4v4h-4z"/><path fill="#ff94de" d="M1256 240h4v4h-4z"/><path fill="#ff8cd6" d="M1260 240h4v4h-4z"/><path fill="#ff84c5" d="M1264 240h4v4h-4z"/><path fill="#ff7bbd" d="M1268 240h4v4h-4z"/><path fill="#ff73b5" d="M1272 240h4v4h-4z"/><path fill="#ff6bad" d="M1276 240h4v4h-4z"/><path fill="#ff63ad" d="M1280 240h4v4h-4z"/><path fill="#ff63a5" d="M1284 240h4v4h-4z"/><path fill="#ff5a9c" d="M1288 240h4v4h-4z"/><path fill="#ff5294" d="M1292 240h8v4h-8z"/><path fill="#ff4a8c" d="M1300 240h8v4h-8z"/><path fill="#ff4284" d="M1308 240h4v4h-4z"/><path fill="#ff3a7b" d="M1316 240h8v4h-8zM1320 244h4v4h-4z"/><path fill="#ff3173" d="M1324 240h8v4h-8zM1328 244h8v4h-8z"/><path fill="#ff296b" d="M1336 240h8v4h-8zM1340 244h8v4h-8z"/><path fill="#ff2163" d="M1348 240h8v4h-8zM1352 244h8v4h-8z"/><path fill="#ff195a" d="M1364 240h4v4h-4zM1364 244h12v4h-12zM1372 248h4v4h-4z"/><path fill="#ff1052" d="M1380 240h4v4h-4zM1380 244h16v4h-16zM1388 248h8v4h-8z"/><path fill="#ff084a" d="M1400 240h4v4h-4zM1396 244h20v4h-20zM1404 248h12v4h-12z"/><path fill="#ff0042" d="M1424 240h4v4h-4zM1420 244h20v4h-20zM1428 248h12v4h-12z"/><path fill="#00deff" d="M1164 244h4v4h-4z"/><path fill="#08deff" d="M1168 244h4v4h-4z"/><path fill="#10d6ff" d="M1172 244h4v4h-4z"/><path fill="#19d6ff" d="M1176 244h4v4h-4z"/><path fill="#29d6ff" d="M1180 244h4v4h-4z"/><path fill="#31ceff" d="M1184 244h4v4h-4z"/><path fill="#42ceff" d="M1188 244h4v4h-4z"/><path fill="#4aceff" d="M1192 244h4v4h-4z"/><path fill="#5aceff" d="M1196 244h4v4h-4z"/><path fill="#63c5ff" d="M1200 244h4v4h-4z"/><path fill="#6bc5ff" d="M1204 244h4v4h-4z"/><path fill="#7bc5ff" d="M1208 244h4v4h-4z"/><path fill="#8cbdff" d="M1212 244h4v4h-4z"/><path fill="#94bdff" d="M1216 244h4v4h-4z"/><path fill="#a5bdff" d="M1220 244h4v4h-4z"/><path fill="#adb5ff" d="M1224 244h4v4h-4z"/><path fill="#bdb5ff" d="M1228 244h4v4h-4z"/><path fill="#c5b5ff" d="M1232 244h4v4h-4z"/><path fill="#d6adff" d="M1236 244h4v4h-4z"/><path fill="#deadff" d="M1240 244h4v4h-4z"/><path fill="#efadff" d="M1244 244h4v4h-4z"/><path fill="#ffa5ff" d="M1248 244h4v4h-4z"/><path fill="#ff9cf7" d="M1252 244h4v4h-4z"/><path fill="#ff94e6" d="M1256 244h4v4h-4z"/><path fill="#ff8cde" d="M1260 244h4v4h-4z"/><path fill="#ff84d6" d="M1264 244h4v4h-4z"/><path fill="#ff7bce" d="M1268 244h4v4h-4z"/><path fill="#ff73c5" d="M1272 244h4v4h-4z"/><path fill="#ff6bbd" d="M1276 244h4v4h-4z"/><path fill="#ff63b5" d="M1280 244h4v4h-4z"/><path fill="#ff5aad" d="M1284 244h4v4h-4zM1288 248h4v4h-4z"/><path fill="#ff5aa5" d="M1288 244h4v4h-4z"/><path fill="#ff529c" d="M1292 244h8v4h-8z"/><path fill="#ff4a94" d="M1300 244h4v4h-4z"/><path fill="#ff428c" d="M1304 244h8v4h-8z"/><path fill="#ff3a84" d="M1312 244h8v4h-8z"/><path fill="#ff317b" d="M1324 244h4v4h-4zM1328 248h4v4h-4z"/><path fill="#ff2973" d="M1336 244h4v4h-4zM1336 248h8v4h-8z"/><path fill="#ff216b" d="M1348 244h4v4h-4zM1348 248h8v4h-8z"/><path fill="#ff1963" d="M1360 244h4v4h-4zM1360 248h12v4h-12zM1368 252h4v4h-4z"/><path fill="#ff105a" d="M1376 244h4v4h-4zM1376 248h12v4h-12zM1380 252h12v4h-12z"/><path fill="#00ceff" d="M1164 248h8v4h-8z"/><path fill="#10ceff" d="M1172 248h4v4h-4z"/><path fill="#19ceff" d="M1176 248h4v4h-4z"/><path fill="#21c5ff" d="M1180 248h4v4h-4z"/><path fill="#31c5ff" d="M1184 248h4v4h-4z"/><path fill="#3ac5ff" d="M1188 248h4v4h-4z"/><path fill="#42bdff" d="M1192 248h4v4h-4z"/><path fill="#52bdff" d="M1196 248h4v4h-4z"/><path fill="#5abdff" d="M1200 248h4v4h-4z"/><path fill="#6bbdff" d="M1204 248h4v4h-4z"/><path fill="#73b5ff" d="M1208 248h4v4h-4z"/><path fill="#84b5ff" d="M1212 248h4v4h-4z"/><path fill="#8cb5ff" d="M1216 248h4v4h-4z"/><path fill="#9cadff" d="M1220 248h4v4h-4z"/><path fill="#a5adff" d="M1224 248h4v4h-4z"/><path fill="#adadff" d="M1228 248h4v4h-4z"/><path fill="#bda5ff" d="M1232 248h4v4h-4z"/><path fill="#cea5ff" d="M1236 248h4v4h-4z"/><path fill="#d6a5ff" d="M1240 248h4v4h-4z"/><path fill="#e69cff" d="M1244 248h4v4h-4z"/><path fill="#ef9cff" d="M1248 248h4v4h-4z"/><path fill="#ff9cff" d="M1252 248h4v4h-4z"/><path fill="#ff94f7" d="M1256 248h4v4h-4z"/><path fill="#ff84e6" d="M1260 248h4v4h-4z"/><path fill="#ff7bde" d="M1264 248h4v4h-4z"/><path fill="#ff73d6" d="M1268 248h4v4h-4z"/><path fill="#ff6bce" d="M1272 248h4v4h-4z"/><path fill="#ff6bc5" d="M1276 248h4v4h-4z"/><path fill="#ff63bd" d="M1280 248h4v4h-4z"/><path fill="#ff5ab5" d="M1284 248h4v4h-4z"/><path fill="#ff52a5" d="M1292 248h4v4h-4z"/><path fill="#ff4aa5" d="M1296 248h4v4h-4zM1300 252h4v4h-4z"/><path fill="#ff4a9c" d="M1300 248h4v4h-4z"/><path fill="#ff4294" d="M1304 248h8v4h-8z"/><path fill="#ff3a8c" d="M1312 248h8v4h-8z"/><path fill="#ff3184" d="M1320 248h8v4h-8zM1324 252h4v4h-4z"/><path fill="#ff297b" d="M1332 248h4v4h-4zM1336 252h4v4h-4z"/><path fill="#ff2173" d="M1344 248h4v4h-4zM1344 252h12v4h-12z"/><path fill="#ff196b" d="M1356 248h4v4h-4zM1356 252h12v4h-12zM1364 256h4v4h-4z"/><path fill="#ff0852" d="M1396 248h8v4h-8zM1396 252h20v4h-20zM1408 256h4v4h-4z"/><path fill="#ff004a" d="M1416 248h12v4h-12zM1416 252h20v4h-20zM1424 256h8v4h-8z"/><path fill="#00c5ff" d="M1164 252h8v4h-8z"/><path fill="#08c5ff" d="M1172 252h4v4h-4z"/><path fill="#19bdff" d="M1176 252h4v4h-4z"/><path fill="#21bdff" d="M1180 252h4v4h-4z"/><path fill="#29bdff" d="M1184 252h4v4h-4z"/><path fill="#3ab5ff" d="M1188 252h4v4h-4z"/><path fill="#42b5ff" d="M1192 252h4v4h-4z"/><path fill="#4ab5ff" d="M1196 252h4v4h-4z"/><path fill="#5ab5ff" d="M1200 252h4v4h-4z"/><path fill="#63adff" d="M1204 252h4v4h-4z"/><path fill="#6badff" d="M1208 252h4v4h-4z"/><path fill="#7badff" d="M1212 252h4v4h-4z"/><path fill="#84a5ff" d="M1216 252h4v4h-4z"/><path fill="#94a5ff" d="M1220 252h4v4h-4z"/><path fill="#9ca5ff" d="M1224 252h4v4h-4z"/><path fill="#a59cff" d="M1228 252h4v4h-4z"/><path fill="#b59cff" d="M1232 252h4v4h-4z"/><path fill="#bd9cff" d="M1236 252h4v4h-4z"/><path fill="#ce94ff" d="M1240 252h4v4h-4z"/><path fill="#d694ff" d="M1244 252h4v4h-4z"/><path fill="#e694ff" d="M1248 252h4v4h-4z"/><path fill="#ef8cff" d="M1252 252h4v4h-4z"/><path fill="#ff8cff" d="M1256 252h4v4h-4z"/><path fill="#ff84f7" d="M1260 252h4v4h-4z"/><path fill="#ff7be6" d="M1264 252h4v4h-4z"/><path fill="#ff73de" d="M1268 252h4v4h-4z"/><path fill="#ff6bd6" d="M1272 252h4v4h-4z"/><path fill="#ff63ce" d="M1276 252h4v4h-4z"/><path fill="#ff63c5" d="M1280 252h4v4h-4z"/><path fill="#ff5abd" d="M1284 252h4v4h-4z"/><path fill="#ff52b5" d="M1288 252h4v4h-4z"/><path fill="#ff52ad" d="M1292 252h4v4h-4z"/><path fill="#ff4aad" d="M1296 252h4v4h-4z"/><path fill="#ff429c" d="M1304 252h8v4h-8z"/><path fill="#ff3a94" d="M1312 252h8v4h-8z"/><path fill="#ff318c" d="M1320 252h4v4h-4zM1324 256h4v4h-4z"/><path fill="#ff2984" d="M1328 252h8v4h-8zM1332 256h8v4h-8z"/><path fill="#ff217b" d="M1340 252h4v4h-4zM1340 256h12v4h-12zM1348 260h4v4h-4z"/><path fill="#ff1063" d="M1372 252h8v4h-8zM1376 256h12v4h-12z"/><path fill="#ff085a" d="M1392 252h4v4h-4zM1388 256h20v4h-20zM1400 260h8v4h-8z"/><path fill="#00bdff" d="M1164 256h8v4h-8z"/><path fill="#08b5ff" d="M1172 256h4v4h-4z"/><path fill="#10b5ff" d="M1176 256h4v4h-4z"/><path fill="#21b5ff" d="M1180 256h4v4h-4z"/><path fill="#29b5ff" d="M1184 256h4v4h-4z"/><path fill="#31adff" d="M1188 256h4v4h-4z"/><path fill="#3aadff" d="M1192 256h4v4h-4z"/><path fill="#4aadff" d="M1196 256h4v4h-4z"/><path fill="#52a5ff" d="M1200 256h4v4h-4z"/><path fill="#5aa5ff" d="M1204 256h4v4h-4z"/><path fill="#6ba5ff" d="M1208 256h4v4h-4z"/><path fill="#739cff" d="M1212 256h4v4h-4z"/><path fill="#7b9cff" d="M1216 256h4v4h-4z"/><path fill="#8c9cff" d="M1220 256h4v4h-4z"/><path fill="#949cff" d="M1224 256h4v4h-4z"/><path fill="#9c94ff" d="M1228 256h4v4h-4z"/><path fill="#ad94ff" d="M1232 256h4v4h-4z"/><path fill="#b594ff" d="M1236 256h4v4h-4z"/><path fill="#c58cff" d="M1240 256h4v4h-4z"/><path fill="#ce8cff" d="M1244 256h4v4h-4z"/><path fill="#d68cff" d="M1248 256h4v4h-4z"/><path fill="#e684ff" d="M1252 256h4v4h-4z"/><path fill="#ef84ff" d="M1256 256h4v4h-4z"/><path fill="#ff84ff" d="M1260 256h4v4h-4z"/><path fill="#ff7bf7" d="M1264 256h4v4h-4z"/><path fill="#ff73ef" d="M1268 256h4v4h-4z"/><path fill="#ff6bde" d="M1272 256h4v4h-4z"/><path fill="#ff63d6" d="M1276 256h4v4h-4z"/><path fill="#ff5ace" d="M1280 256h4v4h-4z"/><path fill="#ff5ac5" d="M1284 256h4v4h-4z"/><path fill="#ff52bd" d="M1288 256h4v4h-4z"/><path fill="#ff4ab5" d="M1292 256h8v4h-8z"/><path fill="#ff42ad" d="M1300 256h4v4h-4zM1304 260h4v4h-4z"/><path fill="#ff42a5" d="M1304 256h4v4h-4z"/><path fill="#ff3aa5" d="M1308 256h4v4h-4zM1312 260h4v4h-4z"/><path fill="#ff3a9c" d="M1312 256h4v4h-4z"/><path fill="#ff3194" d="M1316 256h8v4h-8z"/><path fill="#ff298c" d="M1328 256h4v4h-4zM1332 260h4v4h-4z"/><path fill="#ff1973" d="M1352 256h12v4h-12zM1360 260h4v4h-4z"/><path fill="#ff106b" d="M1368 256h8v4h-8zM1372 260h12v4h-12zM1376 264h4v4h-4z"/><path fill="#ff0052" d="M1412 256h12v4h-12zM1416 260h12v4h-12z"/><path fill="#00b5ff" d="M1164 260h4v4h-4z"/><path fill="#00adff" d="M1168 260h4v4h-4zM1164 264h4v4h-4z"/><path fill="#08adff" d="M1172 260h4v4h-4z"/><path fill="#10adff" d="M1176 260h4v4h-4z"/><path fill="#19adff" d="M1180 260h4v4h-4z"/><path fill="#21a5ff" d="M1184 260h4v4h-4z"/><path fill="#31a5ff" d="M1188 260h4v4h-4z"/><path fill="#3aa5ff" d="M1192 260h4v4h-4z"/><path fill="#42a5ff" d="M1196 260h4v4h-4z"/><path fill="#4a9cff" d="M1200 260h4v4h-4z"/><path fill="#5a9cff" d="M1204 260h4v4h-4z"/><path fill="#639cff" d="M1208 260h4v4h-4z"/><path fill="#6b94ff" d="M1212 260h4v4h-4z"/><path fill="#7b94ff" d="M1216 260h4v4h-4z"/><path fill="#8494ff" d="M1220 260h4v4h-4z"/><path fill="#8c94ff" d="M1224 260h4v4h-4z"/><path fill="#948cff" d="M1228 260h4v4h-4z"/><path fill="#a58cff" d="M1232 260h4v4h-4z"/><path fill="#ad8cff" d="M1236 260h4v4h-4z"/><path fill="#b584ff" d="M1240 260h4v4h-4z"/><path fill="#c584ff" d="M1244 260h4v4h-4z"/><path fill="#ce84ff" d="M1248 260h4v4h-4z"/><path fill="#de7bff" d="M1252 260h4v4h-4z"/><path fill="#e67bff" d="M1256 260h4v4h-4z"/><path fill="#ef7bff" d="M1260 260h4v4h-4z"/><path fill="#ff73ff" d="M1264 260h4v4h-4z"/><path fill="#ff73f7" d="M1268 260h4v4h-4z"/><path fill="#ff6bef" d="M1272 260h4v4h-4z"/><path fill="#ff63de" d="M1276 260h4v4h-4z"/><path fill="#ff5ad6" d="M1280 260h4v4h-4z"/><path fill="#ff52ce" d="M1284 260h4v4h-4z"/><path fill="#ff52c5" d="M1288 260h4v4h-4z"/><path fill="#ff4ac5" d="M1292 260h4v4h-4z"/><path fill="#ff4abd" d="M1296 260h4v4h-4z"/><path fill="#ff42b5" d="M1300 260h4v4h-4z"/><path fill="#ff3aad" d="M1308 260h4v4h-4zM1308 264h4v4h-4z"/><path fill="#ff319c" d="M1316 260h8v4h-8z"/><path fill="#ff2994" d="M1324 260h8v4h-8zM1328 264h8v4h-8z"/><path fill="#ff218c" d="M1336 260h4v4h-4zM1336 264h8v4h-8z"/><path fill="#ff2184" d="M1340 260h8v4h-8zM1344 264h4v4h-4z"/><path fill="#ff197b" d="M1352 260h8v4h-8zM1356 264h8v4h-8z"/><path fill="#ff1073" d="M1364 260h8v4h-8zM1364 264h12v4h-12zM1372 268h4v4h-4z"/><path fill="#ff0863" d="M1384 260h16v4h-16zM1392 264h12v4h-12z"/><path fill="#ff005a" d="M1408 260h8v4h-8zM1408 264h16v4h-16zM1416 268h4v4h-4z"/><path fill="#00a5ff" d="M1168 264h4v4h-4z"/><path fill="#08a5ff" d="M1172 264h4v4h-4z"/><path fill="#10a5ff" d="M1176 264h4v4h-4z"/><path fill="#19a5ff" d="M1180 264h4v4h-4z"/><path fill="#219cff" d="M1184 264h4v4h-4z"/><path fill="#299cff" d="M1188 264h4v4h-4z"/><path fill="#3a9cff" d="M1192 264h4v4h-4z"/><path fill="#429cff" d="M1196 264h4v4h-4z"/><path fill="#4a94ff" d="M1200 264h4v4h-4z"/><path fill="#5294ff" d="M1204 264h4v4h-4z"/><path fill="#5a94ff" d="M1208 264h4v4h-4z"/><path fill="#6b8cff" d="M1212 264h4v4h-4z"/><path fill="#738cff" d="M1216 264h4v4h-4z"/><path fill="#7b8cff" d="M1220 264h4v4h-4z"/><path fill="#848cff" d="M1224 264h4v4h-4z"/><path fill="#9484ff" d="M1228 264h4v4h-4z"/><path fill="#9c84ff" d="M1232 264h4v4h-4z"/><path fill="#a584ff" d="M1236 264h4v4h-4z"/><path fill="#ad7bff" d="M1240 264h4v4h-4z"/><path fill="#bd7bff" d="M1244 264h4v4h-4z"/><path fill="#c57bff" d="M1248 264h4v4h-4z"/><path fill="#ce73ff" d="M1252 264h4v4h-4z"/><path fill="#de73ff" d="M1256 264h4v4h-4z"/><path fill="#e673ff" d="M1260 264h4v4h-4z"/><path fill="#ef73ff" d="M1264 264h4v4h-4z"/><path fill="#ff6bff" d="M1268 264h4v4h-4z"/><path fill="#ff63f7" d="M1272 264h4v4h-4z"/><path fill="#ff63ef" d="M1276 264h4v4h-4z"/><path fill="#ff5ae6" d="M1280 264h4v4h-4z"/><path fill="#ff52de" d="M1284 264h4v4h-4z"/><path fill="#ff52d6" d="M1288 264h4v4h-4z"/><path fill="#ff4ace" d="M1292 264h4v4h-4z"/><path fill="#ff42c5" d="M1296 264h4v4h-4zM1300 268h4v4h-4z"/><path fill="#ff42bd" d="M1300 264h4v4h-4z"/><path fill="#ff3ab5" d="M1304 264h4v4h-4zM1308 268h4v4h-4z"/><path fill="#ff31ad" d="M1312 264h4v4h-4zM1316 268h4v4h-4z"/><path fill="#ff31a5" d="M1316 264h8v4h-8z"/><path fill="#ff299c" d="M1324 264h4v4h-4zM1328 268h4v4h-4z"/><path fill="#ff1984" d="M1348 264h8v4h-8zM1352 268h8v4h-8z"/><path fill="#ff086b" d="M1380 264h12v4h-12zM1384 268h16v4h-16zM1392 272h4v4h-4z"/><path fill="#ff0063" d="M1404 264h4v4h-4zM1400 268h16v4h-16zM1408 272h8v4h-8z"/><path fill="#009cff" d="M1168 268h8v4h-8zM1168 272h4v4h-4z"/><path fill="#109cff" d="M1176 268h4v4h-4z"/><path fill="#199cff" d="M1180 268h4v4h-4z"/><path fill="#2194ff" d="M1184 268h4v4h-4z"/><path fill="#2994ff" d="M1188 268h4v4h-4z"/><path fill="#3194ff" d="M1192 268h4v4h-4z"/><path fill="#3a94ff" d="M1196 268h4v4h-4z"/><path fill="#428cff" d="M1200 268h4v4h-4z"/><path fill="#528cff" d="M1204 268h4v4h-4z"/><path fill="#5a8cff" d="M1208 268h4v4h-4z"/><path fill="#6384ff" d="M1212 268h4v4h-4z"/><path fill="#6b84ff" d="M1216 268h4v4h-4z"/><path fill="#7384ff" d="M1220 268h4v4h-4z"/><path fill="#8484ff" d="M1224 268h4v4h-4z"/><path fill="#8c7bff" d="M1228 268h4v4h-4z"/><path fill="#947bff" d="M1232 268h4v4h-4z"/><path fill="#9c7bff" d="M1236 268h4v4h-4z"/><path fill="#a573ff" d="M1240 268h4v4h-4zM1240 272h4v4h-4z"/><path fill="#b573ff" d="M1244 268h4v4h-4z"/><path fill="#bd73ff" d="M1248 268h4v4h-4z"/><path fill="#c573ff" d="M1252 268h4v4h-4z"/><path fill="#d66bff" d="M1256 268h4v4h-4z"/><path fill="#de6bff" d="M1260 268h4v4h-4z"/><path fill="#e66bff" d="M1264 268h4v4h-4z"/><path fill="#ef63ff" d="M1268 268h4v4h-4z"/><path fill="#ff63ff" d="M1272 268h4v4h-4z"/><path fill="#ff5af7" d="M1276 268h4v4h-4z"/><path fill="#ff5aef" d="M1280 268h4v4h-4z"/><path fill="#ff52e6" d="M1284 268h4v4h-4z"/><path fill="#ff4ade" d="M1288 268h4v4h-4z"/><path fill="#ff4ad6" d="M1292 268h4v4h-4z"/><path fill="#ff42ce" d="M1296 268h4v4h-4z"/><path fill="#ff3abd" d="M1304 268h4v4h-4z"/><path fill="#ff31b5" d="M1312 268h4v4h-4zM1316 272h4v4h-4z"/><path fill="#ff29a5" d="M1320 268h8v4h-8z"/><path fill="#ff219c" d="M1332 268h4v4h-4zM1332 272h8v4h-8z"/><path fill="#ff2194" d="M1336 268h8v4h-8zM1340 272h4v4h-4z"/><path fill="#ff198c" d="M1344 268h8v4h-8zM1348 272h8v4h-8z"/><path fill="#ff1084" d="M1360 268h4v4h-4zM1360 272h8v4h-8zM1364 276h8v4h-8z"/><path fill="#ff107b" d="M1364 268h8v4h-8zM1368 272h8v4h-8z"/><path fill="#ff0873" d="M1376 268h8v4h-8zM1380 272h12v4h-12zM1388 276h4v4h-4z"/><path fill="#0094ff" d="M1172 272h4v4h-4zM1168 276h4v4h-4z"/><path fill="#0894ff" d="M1176 272h4v4h-4z"/><path fill="#1094ff" d="M1180 272h4v4h-4z"/><path fill="#218cff" d="M1184 272h4v4h-4z"/><path fill="#298cff" d="M1188 272h4v4h-4z"/><path fill="#318cff" d="M1192 272h4v4h-4z"/><path fill="#3a8cff" d="M1196 272h4v4h-4z"/><path fill="#4284ff" d="M1200 272h4v4h-4zM1200 276h4v4h-4z"/><path fill="#4a84ff" d="M1204 272h4v4h-4z"/><path fill="#5284ff" d="M1208 272h4v4h-4z"/><path fill="#5a84ff" d="M1212 272h4v4h-4z"/><path fill="#6b7bff" d="M1216 272h4v4h-4z"/><path fill="#737bff" d="M1220 272h4v4h-4z"/><path fill="#7b7bff" d="M1224 272h4v4h-4z"/><path fill="#847bff" d="M1228 272h4v4h-4z"/><path fill="#8c73ff" d="M1232 272h4v4h-4z"/><path fill="#9473ff" d="M1236 272h4v4h-4z"/><path fill="#ad6bff" d="M1244 272h4v4h-4z"/><path fill="#b56bff" d="M1248 272h4v4h-4z"/><path fill="#bd6bff" d="M1252 272h4v4h-4z"/><path fill="#c56bff" d="M1256 272h4v4h-4z"/><path fill="#d663ff" d="M1260 272h4v4h-4z"/><path fill="#de63ff" d="M1264 272h4v4h-4z"/><path fill="#e663ff" d="M1268 272h4v4h-4z"/><path fill="#ef5aff" d="M1272 272h4v4h-4z"/><path fill="#ff5aff" d="M1276 272h4v4h-4z"/><path fill="#ff52f7" d="M1280 272h4v4h-4z"/><path fill="#ff52ef" d="M1284 272h4v4h-4z"/><path fill="#ff4ae6" d="M1288 272h4v4h-4z"/><path fill="#ff42de" d="M1292 272h4v4h-4zM1296 276h4v4h-4z"/><path fill="#ff42d6" d="M1296 272h4v4h-4z"/><path fill="#ff3ace" d="M1300 272h4v4h-4zM1304 276h4v4h-4z"/><path fill="#ff3ac5" d="M1304 272h4v4h-4z"/><path fill="#ff31bd" d="M1308 272h8v4h-8z"/><path fill="#ff29ad" d="M1320 272h8v4h-8zM1324 276h4v4h-4z"/><path fill="#ff21a5" d="M1328 272h4v4h-4zM1332 276h8v4h-8z"/><path fill="#ff1994" d="M1344 272h4v4h-4zM1348 276h8v4h-8z"/><path fill="#ff108c" d="M1356 272h4v4h-4zM1356 276h8v4h-8zM1364 280h4v4h-4z"/><path fill="#ff087b" d="M1376 272h4v4h-4zM1376 276h12v4h-12zM1384 280h4v4h-4z"/><path fill="#ff006b" d="M1396 272h12v4h-12zM1400 276h12v4h-12z"/><path fill="#008cff" d="M1172 276h4v4h-4zM1168 280h8v4h-8z"/><path fill="#088cff" d="M1176 276h4v4h-4z"/><path fill="#108cff" d="M1180 276h4v4h-4z"/><path fill="#198cff" d="M1184 276h4v4h-4z"/><path fill="#2184ff" d="M1188 276h4v4h-4zM1188 280h4v4h-4z"/><path fill="#2984ff" d="M1192 276h4v4h-4z"/><path fill="#3184ff" d="M1196 276h4v4h-4z"/><path fill="#4a7bff" d="M1204 276h4v4h-4z"/><path fill="#527bff" d="M1208 276h4v4h-4z"/><path fill="#5a7bff" d="M1212 276h4v4h-4z"/><path fill="#637bff" d="M1216 276h4v4h-4z"/><path fill="#6b73ff" d="M1220 276h4v4h-4z"/><path fill="#7373ff" d="M1224 276h4v4h-4z"/><path fill="#7b73ff" d="M1228 276h4v4h-4z"/><path fill="#846bff" d="M1232 276h4v4h-4zM1232 280h4v4h-4z"/><path fill="#946bff" d="M1236 276h4v4h-4z"/><path fill="#9c6bff" d="M1240 276h4v4h-4z"/><path fill="#a56bff" d="M1244 276h4v4h-4z"/><path fill="#ad63ff" d="M1248 276h4v4h-4z"/><path fill="#b563ff" d="M1252 276h4v4h-4z"/><path fill="#bd63ff" d="M1256 276h4v4h-4z"/><path fill="#ce5aff" d="M1260 276h4v4h-4zM1264 280h4v4h-4z"/><path fill="#d65aff" d="M1264 276h4v4h-4z"/><path fill="#de5aff" d="M1268 276h4v4h-4z"/><path fill="#e65aff" d="M1272 276h4v4h-4z"/><path fill="#f752ff" d="M1276 276h4v4h-4z"/><path fill="#ff52ff" d="M1280 276h4v4h-4z"/><path fill="#ff4af7" d="M1284 276h4v4h-4zM1288 280h4v4h-4z"/><path fill="#ff4aef" d="M1288 276h4v4h-4z"/><path fill="#ff42e6" d="M1292 276h4v4h-4z"/><path fill="#ff3ad6" d="M1300 276h4v4h-4z"/><path fill="#ff31c5" d="M1308 276h8v4h-8zM1312 280h4v4h-4z"/><path fill="#ff29bd" d="M1316 276h4v4h-4zM1320 280h4v4h-4z"/><path fill="#ff29b5" d="M1320 276h4v4h-4z"/><path fill="#ff21ad" d="M1328 276h4v4h-4zM1332 280h4v4h-4z"/><path fill="#ff199c" d="M1340 276h8v4h-8zM1344 280h8v4h-8z"/><path fill="#ff0884" d="M1372 276h4v4h-4zM1372 280h12v4h-12zM1380 284h4v4h-4z"/><path fill="#ff0073" d="M1392 276h8v4h-8zM1396 280h12v4h-12z"/><path fill="#0884ff" d="M1176 280h4v4h-4zM1176 284h4v4h-4z"/><path fill="#1084ff" d="M1180 280h4v4h-4z"/><path fill="#1984ff" d="M1184 280h4v4h-4z"/><path fill="#297bff" d="M1192 280h4v4h-4zM1192 284h4v4h-4z"/><path fill="#317bff" d="M1196 280h4v4h-4z"/><path fill="#3a7bff" d="M1200 280h4v4h-4z"/><path fill="#427bff" d="M1204 280h4v4h-4z"/><path fill="#4a73ff" d="M1208 280h4v4h-4zM1208 284h4v4h-4z"/><path fill="#5273ff" d="M1212 280h4v4h-4z"/><path fill="#5a73ff" d="M1216 280h4v4h-4z"/><path fill="#6373ff" d="M1220 280h4v4h-4z"/><path fill="#736bff" d="M1224 280h4v4h-4z"/><path fill="#7b6bff" d="M1228 280h4v4h-4z"/><path fill="#8c63ff" d="M1236 280h4v4h-4zM1240 284h4v4h-4z"/><path fill="#9463ff" d="M1240 280h4v4h-4z"/><path fill="#9c63ff" d="M1244 280h4v4h-4z"/><path fill="#a563ff" d="M1248 280h4v4h-4z"/><path fill="#ad5aff" d="M1252 280h4v4h-4zM1252 284h4v4h-4z"/><path fill="#bd5aff" d="M1256 280h4v4h-4z"/><path fill="#c55aff" d="M1260 280h4v4h-4z"/><path fill="#d652ff" d="M1268 280h4v4h-4z"/><path fill="#de52ff" d="M1272 280h4v4h-4z"/><path fill="#e652ff" d="M1276 280h4v4h-4z"/><path fill="#f74aff" d="M1280 280h4v4h-4zM1284 284h4v4h-4z"/><path fill="#ff4aff" d="M1284 280h4v4h-4z"/><path fill="#ff42ef" d="M1292 280h4v4h-4z"/><path fill="#ff3ae6" d="M1296 280h4v4h-4zM1300 284h4v4h-4z"/><path fill="#ff3ade" d="M1300 280h4v4h-4z"/><path fill="#ff31d6" d="M1304 280h4v4h-4zM1308 284h4v4h-4z"/><path fill="#ff31ce" d="M1308 280h4v4h-4z"/><path fill="#ff29c5" d="M1316 280h4v4h-4zM1320 284h4v4h-4z"/><path fill="#ff21b5" d="M1324 280h8v4h-8zM1328 284h8v4h-8z"/><path fill="#ff19a5" d="M1336 280h8v4h-8zM1344 284h4v4h-4z"/><path fill="#ff1094" d="M1352 280h12v4h-12zM1360 284h4v4h-4z"/><path fill="#ff088c" d="M1368 280h4v4h-4zM1368 284h12v4h-12zM1376 288h4v4h-4z"/><path fill="#ff007b" d="M1388 280h8v4h-8zM1388 284h16v4h-16zM1396 288h4v4h-4z"/><path fill="#0084ff" d="M1168 284h8v4h-8z"/><path fill="#107bff" d="M1180 284h4v4h-4zM1180 288h4v4h-4z"/><path fill="#197bff" d="M1184 284h4v4h-4z"/><path fill="#217bff" d="M1188 284h4v4h-4z"/><path fill="#3173ff" d="M1196 284h4v4h-4z"/><path fill="#3a73ff" d="M1200 284h4v4h-4z"/><path fill="#4273ff" d="M1204 284h4v4h-4z"/><path fill="#526bff" d="M1212 284h4v4h-4z"/><path fill="#5a6bff" d="M1216 284h4v4h-4z"/><path fill="#636bff" d="M1220 284h4v4h-4z"/><path fill="#6b6bff" d="M1224 284h4v4h-4z"/><path fill="#7363ff" d="M1228 284h4v4h-4z"/><path fill="#7b63ff" d="M1232 284h4v4h-4z"/><path fill="#8463ff" d="M1236 284h4v4h-4z"/><path fill="#945aff" d="M1244 284h4v4h-4zM1244 288h4v4h-4z"/><path fill="#9c5aff" d="M1248 284h4v4h-4z"/><path fill="#b552ff" d="M1256 284h4v4h-4zM1260 288h4v4h-4z"/><path fill="#bd52ff" d="M1260 284h4v4h-4z"/><path fill="#c552ff" d="M1264 284h4v4h-4z"/><path fill="#ce52ff" d="M1268 284h4v4h-4z"/><path fill="#d64aff" d="M1272 284h4v4h-4zM1276 288h4v4h-4z"/><path fill="#de4aff" d="M1276 284h4v4h-4z"/><path fill="#e64aff" d="M1280 284h4v4h-4z"/><path fill="#ff42ff" d="M1288 284h4v4h-4z"/><path fill="#ff42f7" d="M1292 284h4v4h-4z"/><path fill="#ff3aef" d="M1296 284h4v4h-4z"/><path fill="#ff31de" d="M1304 284h4v4h-4zM1308 288h4v4h-4z"/><path fill="#ff29ce" d="M1312 284h8v4h-8z"/><path fill="#ff21bd" d="M1324 284h4v4h-4zM1328 288h4v4h-4z"/><path fill="#ff19ad" d="M1336 284h8v4h-8zM1340 288h4v4h-4z"/><path fill="#ff10a5" d="M1348 284h4v4h-4zM1348 288h8v4h-8zM1356 292h4v4h-4z"/><path fill="#ff109c" d="M1352 284h8v4h-8zM1356 288h4v4h-4z"/><path fill="#ff0894" d="M1364 284h4v4h-4zM1364 288h12v4h-12zM1372 292h4v4h-4z"/><path fill="#ff0084" d="M1384 284h4v4h-4zM1384 288h12v4h-12zM1392 292h4v4h-4z"/><path fill="#007bff" d="M1168 288h8v4h-8z"/><path fill="#087bff" d="M1176 288h4v4h-4z"/><path fill="#1073ff" d="M1184 288h4v4h-4zM1184 292h4v4h-4z"/><path fill="#1973ff" d="M1188 288h4v4h-4z"/><path fill="#2173ff" d="M1192 288h4v4h-4z"/><path fill="#2973ff" d="M1196 288h4v4h-4z"/><path fill="#316bff" d="M1200 288h4v4h-4zM1200 292h4v4h-4z"/><path fill="#3a6bff" d="M1204 288h4v4h-4zM1204 292h4v4h-4z"/><path fill="#426bff" d="M1208 288h4v4h-4z"/><path fill="#4a6bff" d="M1212 288h4v4h-4z"/><path fill="#5263ff" d="M1216 288h4v4h-4zM1216 292h4v4h-4z"/><path fill="#5a63ff" d="M1220 288h4v4h-4zM1220 292h4v4h-4z"/><path fill="#6363ff" d="M1224 288h4v4h-4z"/><path fill="#6b63ff" d="M1228 288h4v4h-4z"/><path fill="#7b5aff" d="M1232 288h4v4h-4zM1236 292h4v4h-4z"/><path fill="#845aff" d="M1236 288h4v4h-4z"/><path fill="#8c5aff" d="M1240 288h4v4h-4z"/><path fill="#9c52ff" d="M1248 288h4v4h-4zM1252 292h4v4h-4z"/><path fill="#a552ff" d="M1252 288h4v4h-4z"/><path fill="#ad52ff" d="M1256 288h4v4h-4z"/><path fill="#bd4aff" d="M1264 288h4v4h-4z"/><path fill="#c54aff" d="M1268 288h4v4h-4z"/><path fill="#ce4aff" d="M1272 288h4v4h-4z"/><path fill="#de42ff" d="M1280 288h4v4h-4z"/><path fill="#e642ff" d="M1284 288h4v4h-4z"/><path fill="#f742ff" d="M1288 288h4v4h-4z"/><path fill="#ff3aff" d="M1292 288h4v4h-4zM1296 292h4v4h-4z"/><path fill="#ff3af7" d="M1296 288h4v4h-4z"/><path fill="#ff31ef" d="M1300 288h4v4h-4zM1304 292h4v4h-4z"/><path fill="#ff31e6" d="M1304 288h4v4h-4z"/><path fill="#ff29d6" d="M1312 288h8v4h-8z"/><path fill="#ff21ce" d="M1320 288h4v4h-4zM1324 292h4v4h-4z"/><path fill="#ff21c5" d="M1324 288h4v4h-4z"/><path fill="#ff19bd" d="M1332 288h4v4h-4zM1336 292h4v4h-4z"/><path fill="#ff19b5" d="M1336 288h4v4h-4zM1340 292h4v4h-4z"/><path fill="#ff10ad" d="M1344 288h4v4h-4zM1348 292h8v4h-8zM1352 296h4v4h-4z"/><path fill="#ff089c" d="M1360 288h4v4h-4zM1364 292h8v4h-8zM1368 296h4v4h-4z"/><path fill="#ff008c" d="M1380 288h4v4h-4zM1380 292h12v4h-12zM1388 296h4v4h-4z"/><path fill="#0073ff" d="M1172 292h8v4h-8zM1172 296h8v4h-8z"/><path fill="#0873ff" d="M1180 292h4v4h-4z"/><path fill="#196bff" d="M1188 292h4v4h-4zM1188 296h4v4h-4z"/><path fill="#216bff" d="M1192 292h4v4h-4zM1192 296h4v4h-4z"/><path fill="#296bff" d="M1196 292h4v4h-4z"/><path fill="#4263ff" d="M1208 292h4v4h-4zM1208 296h4v4h-4z"/><path fill="#4a63ff" d="M1212 292h4v4h-4z"/><path fill="#635aff" d="M1224 292h4v4h-4z"/><path fill="#6b5aff" d="M1228 292h4v4h-4z"/><path fill="#735aff" d="M1232 292h4v4h-4z"/><path fill="#8452ff" d="M1240 292h4v4h-4z"/><path fill="#8c52ff" d="M1244 292h4v4h-4z"/><path fill="#9452ff" d="M1248 292h4v4h-4z"/><path fill="#a54aff" d="M1256 292h4v4h-4z"/><path fill="#ad4aff" d="M1260 292h4v4h-4z"/><path fill="#b54aff" d="M1264 292h4v4h-4z"/><path fill="#bd42ff" d="M1268 292h4v4h-4zM1272 296h4v4h-4z"/><path fill="#c542ff" d="M1272 292h4v4h-4z"/><path fill="#ce42ff" d="M1276 292h4v4h-4z"/><path fill="#d642ff" d="M1280 292h4v4h-4z"/><path fill="#de3aff" d="M1284 292h4v4h-4zM1284 296h4v4h-4z"/><path fill="#ef3aff" d="M1288 292h4v4h-4z"/><path fill="#f73aff" d="M1292 292h4v4h-4z"/><path fill="#ff31f7" d="M1300 292h4v4h-4z"/><path fill="#ff29e6" d="M1308 292h4v4h-4zM1312 296h4v4h-4z"/><path fill="#ff29de" d="M1312 292h4v4h-4z"/><path fill="#ff21d6" d="M1316 292h8v4h-8zM1324 296h4v4h-4z"/><path fill="#ff19c5" d="M1328 292h8v4h-8zM1332 296h8v4h-8z"/><path fill="#ff10b5" d="M1344 292h4v4h-4zM1344 296h8v4h-8z"/><path fill="#ff08a5" d="M1360 292h4v4h-4zM1360 296h8v4h-8zM1364 300h8v4h-8z"/><path fill="#ff0094" d="M1376 292h4v4h-4zM1376 296h12v4h-12zM1384 300h4v4h-4z"/><path fill="#086bff" d="M1180 296h4v4h-4zM1180 300h4v4h-4z"/><path fill="#106bff" d="M1184 296h4v4h-4z"/><path fill="#2963ff" d="M1196 296h4v4h-4zM1196 300h8v4h-8z"/><path fill="#3163ff" d="M1200 296h4v4h-4z"/><path fill="#3a63ff" d="M1204 296h4v4h-4z"/><path fill="#4a5aff" d="M1212 296h4v4h-4zM1216 300h4v4h-4z"/><path fill="#525aff" d="M1216 296h8v4h-8z"/><path fill="#5a5aff" d="M1224 296h4v4h-4z"/><path fill="#6352ff" d="M1228 296h4v4h-4zM1228 300h4v4h-4z"/><path fill="#6b52ff" d="M1232 296h4v4h-4zM1232 300h4v4h-4z"/><path fill="#7352ff" d="M1236 296h4v4h-4z"/><path fill="#7b52ff" d="M1240 296h4v4h-4z"/><path fill="#844aff" d="M1244 296h4v4h-4zM1244 300h4v4h-4z"/><path fill="#8c4aff" d="M1248 296h4v4h-4zM1248 300h4v4h-4z"/><path fill="#944aff" d="M1252 296h4v4h-4z"/><path fill="#9c4aff" d="M1256 296h4v4h-4z"/><path fill="#a542ff" d="M1260 296h4v4h-4zM1260 300h4v4h-4z"/><path fill="#ad42ff" d="M1264 296h4v4h-4zM1264 300h4v4h-4z"/><path fill="#b542ff" d="M1268 296h4v4h-4z"/><path fill="#c53aff" d="M1276 296h4v4h-4zM1276 300h4v4h-4z"/><path fill="#ce3aff" d="M1280 296h4v4h-4zM1280 300h4v4h-4z"/><path fill="#e63aff" d="M1288 296h4v4h-4z"/><path fill="#ef31ff" d="M1292 296h4v4h-4zM1296 300h4v4h-4z"/><path fill="#f731ff" d="M1296 296h4v4h-4z"/><path fill="#ff31ff" d="M1300 296h4v4h-4z"/><path fill="#ff29f7" d="M1304 296h4v4h-4zM1308 300h4v4h-4z"/><path fill="#ff29ef" d="M1308 296h4v4h-4z"/><path fill="#ff21de" d="M1316 296h8v4h-8zM1320 300h4v4h-4z"/><path fill="#ff19ce" d="M1328 296h4v4h-4zM1332 300h4v4h-4z"/><path fill="#ff10bd" d="M1340 296h4v4h-4zM1344 300h8v4h-8z"/><path fill="#ff08ad" d="M1356 296h4v4h-4zM1356 300h8v4h-8zM1364 304h4v4h-4z"/><path fill="#ff009c" d="M1372 296h4v4h-4zM1372 300h12v4h-12zM1380 304h4v4h-4z"/><path fill="#006bff" d="M1172 300h8v4h-8zM1172 304h4v4h-4z"/><path fill="#1063ff" d="M1184 300h4v4h-4zM1184 304h4v4h-4z"/><path fill="#1963ff" d="M1188 300h4v4h-4zM1188 304h4v4h-4z"/><path fill="#2163ff" d="M1192 300h4v4h-4z"/><path fill="#315aff" d="M1204 300h4v4h-4zM1204 304h4v4h-4z"/><path fill="#3a5aff" d="M1208 300h4v4h-4zM1208 304h4v4h-4z"/><path fill="#425aff" d="M1212 300h4v4h-4z"/><path fill="#5252ff" d="M1220 300h4v4h-4zM1220 304h4v4h-4z"/><path fill="#5a52ff" d="M1224 300h4v4h-4zM1224 304h4v4h-4z"/><path fill="#734aff" d="M1236 300h4v4h-4zM1240 304h4v4h-4z"/><path fill="#7b4aff" d="M1240 300h4v4h-4z"/><path fill="#9442ff" d="M1252 300h4v4h-4zM1256 304h4v4h-4z"/><path fill="#9c42ff" d="M1256 300h4v4h-4zM1260 304h4v4h-4z"/><path fill="#b53aff" d="M1268 300h4v4h-4zM1272 304h4v4h-4z"/><path fill="#bd3aff" d="M1272 300h4v4h-4zM1276 304h4v4h-4z"/><path fill="#d631ff" d="M1284 300h4v4h-4zM1288 304h4v4h-4z"/><path fill="#de31ff" d="M1288 300h4v4h-4zM1292 304h4v4h-4z"/><path fill="#e631ff" d="M1292 300h4v4h-4z"/><path fill="#f729ff" d="M1300 300h4v4h-4zM1304 304h4v4h-4z"/><path fill="#ff29ff" d="M1304 300h4v4h-4zM1308 304h4v4h-4z"/><path fill="#ff21ef" d="M1312 300h4v4h-4zM1316 304h4v4h-4z"/><path fill="#ff21e6" d="M1316 300h4v4h-4z"/><path fill="#ff19de" d="M1324 300h4v4h-4zM1328 304h4v4h-4z"/><path fill="#ff19d6" d="M1328 300h4v4h-4z"/><path fill="#ff10c5" d="M1336 300h8v4h-8zM1344 304h4v4h-4z"/><path fill="#ff08b5" d="M1352 300h4v4h-4zM1356 304h8v4h-8zM1360 308h4v4h-4z"/><path fill="#0063ff" d="M1176 304h4v4h-4zM1172 308h8v4h-8z"/><path fill="#0863ff" d="M1180 304h4v4h-4zM1180 308h4v4h-4z"/><path fill="#195aff" d="M1192 304h4v4h-4zM1192 308h4v4h-4z"/><path fill="#215aff" d="M1196 304h4v4h-4zM1196 308h4v4h-4z"/><path fill="#295aff" d="M1200 304h4v4h-4z"/><path fill="#4252ff" d="M1212 304h4v4h-4zM1212 308h8v4h-8z"/><path fill="#4a52ff" d="M1216 304h4v4h-4z"/><path fill="#5a4aff" d="M1228 304h4v4h-4zM1228 308h4v4h-4z"/><path fill="#634aff" d="M1232 304h4v4h-4zM1232 308h4v4h-4z"/><path fill="#6b4aff" d="M1236 304h4v4h-4z"/><path fill="#7b42ff" d="M1244 304h4v4h-4zM1244 308h4v4h-4z"/><path fill="#8442ff" d="M1248 304h4v4h-4zM1248 308h8v4h-8z"/><path fill="#8c42ff" d="M1252 304h4v4h-4z"/><path fill="#a53aff" d="M1264 304h4v4h-4zM1268 308h4v4h-4z"/><path fill="#ad3aff" d="M1268 304h4v4h-4z"/><path fill="#c531ff" d="M1280 304h4v4h-4zM1284 308h4v4h-4z"/><path fill="#ce31ff" d="M1284 304h4v4h-4z"/><path fill="#e629ff" d="M1296 304h4v4h-4zM1300 308h4v4h-4z"/><path fill="#ef29ff" d="M1300 304h4v4h-4z"/><path fill="#ff21f7" d="M1312 304h4v4h-4zM1316 308h4v4h-4z"/><path fill="#ff19e6" d="M1320 304h8v4h-8zM1324 308h8v4h-8z"/><path fill="#ff10d6" d="M1332 304h4v4h-4zM1336 308h4v4h-4z"/><path fill="#ff10ce" d="M1336 304h8v4h-8zM1340 308h4v4h-4z"/><path fill="#ff08bd" d="M1348 304h8v4h-8zM1352 308h8v4h-8z"/><path fill="#ff00ad" d="M1368 304h4v4h-4zM1368 308h8v4h-8zM1372 312h4v4h-4z"/><path fill="#ff00a5" d="M1372 304h8v4h-8zM1376 308h4v4h-4z"/><path fill="#085aff" d="M1184 308h4v4h-4zM1180 312h8v4h-8z"/><path fill="#105aff" d="M1188 308h4v4h-4zM1188 312h4v4h-4z"/><path fill="#2952ff" d="M1200 308h4v4h-4zM1200 312h8v4h-8z"/><path fill="#3152ff" d="M1204 308h4v4h-4zM1208 312h4v4h-4z"/><path fill="#3a52ff" d="M1208 308h4v4h-4z"/><path fill="#4a4aff" d="M1220 308h4v4h-4zM1220 312h4v4h-4z"/><path fill="#524aff" d="M1224 308h4v4h-4zM1224 312h4v4h-4z"/><path fill="#6b42ff" d="M1236 308h4v4h-4zM1240 312h4v4h-4z"/><path fill="#7342ff" d="M1240 308h4v4h-4zM1244 312h4v4h-4z"/><path fill="#8c3aff" d="M1256 308h4v4h-4zM1256 312h4v4h-4z"/><path fill="#943aff" d="M1260 308h4v4h-4zM1260 312h4v4h-4z"/><path fill="#9c3aff" d="M1264 308h4v4h-4z"/><path fill="#ad31ff" d="M1272 308h4v4h-4zM1276 312h4v4h-4z"/><path fill="#b531ff" d="M1276 308h4v4h-4z"/><path fill="#bd31ff" d="M1280 308h4v4h-4z"/><path fill="#ce29ff" d="M1288 308h4v4h-4zM1292 312h4v4h-4z"/><path fill="#d629ff" d="M1292 308h4v4h-4zM1296 312h4v4h-4z"/><path fill="#de29ff" d="M1296 308h4v4h-4z"/><path fill="#ef21ff" d="M1304 308h4v4h-4zM1308 312h4v4h-4z"/><path fill="#f721ff" d="M1308 308h4v4h-4zM1312 312h4v4h-4z"/><path fill="#ff21ff" d="M1312 308h4v4h-4z"/><path fill="#ff19ef" d="M1320 308h4v4h-4zM1324 312h4v4h-4z"/><path fill="#ff10de" d="M1332 308h4v4h-4zM1336 312h4v4h-4z"/><path fill="#ff08ce" d="M1344 308h4v4h-4zM1348 312h4v4h-4zM1352 316h4v4h-4z"/><path fill="#ff08c5" d="M1348 308h4v4h-4zM1352 312h8v4h-8z"/><path fill="#ff00b5" d="M1364 308h4v4h-4zM1368 312h4v4h-4z"/><path fill="#005aff" d="M1172 312h8v4h-8zM1176 316h8v4h-8z"/><path fill="#1952ff" d="M1192 312h4v4h-4zM1192 316h4v4h-4z"/><path fill="#2152ff" d="M1196 312h4v4h-4zM1196 316h8v4h-8z"/><path fill="#3a4aff" d="M1212 312h4v4h-4zM1212 316h4v4h-4z"/><path fill="#424aff" d="M1216 312h4v4h-4zM1216 316h4v4h-4z"/><path fill="#5a42ff" d="M1228 312h8v4h-8zM1232 316h4v4h-4z"/><path fill="#6342ff" d="M1236 312h4v4h-4zM1236 316h4v4h-4z"/><path fill="#7b3aff" d="M1248 312h4v4h-4zM1248 316h8v4h-8z"/><path fill="#843aff" d="M1252 312h4v4h-4z"/><path fill="#9c31ff" d="M1264 312h4v4h-4zM1268 316h4v4h-4z"/><path fill="#a531ff" d="M1268 312h8v4h-8zM1272 316h4v4h-4z"/><path fill="#b529ff" d="M1280 312h4v4h-4zM1280 316h8v4h-8zM1284 320h4v4h-4z"/><path fill="#bd29ff" d="M1284 312h4v4h-4zM1288 316h4v4h-4z"/><path fill="#c529ff" d="M1288 312h4v4h-4z"/><path fill="#de21ff" d="M1300 312h4v4h-4zM1304 316h4v4h-4z"/><path fill="#e621ff" d="M1304 312h4v4h-4z"/><path fill="#ff19ff" d="M1316 312h4v4h-4zM1320 316h4v4h-4z"/><path fill="#ff19f7" d="M1320 312h4v4h-4z"/><path fill="#ff10ef" d="M1328 312h4v4h-4zM1328 316h8v4h-8zM1332 320h4v4h-4z"/><path fill="#ff10e6" d="M1332 312h4v4h-4zM1336 316h4v4h-4z"/><path fill="#ff08d6" d="M1340 312h8v4h-8zM1344 316h8v4h-8zM1348 320h4v4h-4z"/><path fill="#ff00bd" d="M1360 312h8v4h-8zM1364 316h8v4h-8z"/><path fill="#0852ff" d="M1184 316h4v4h-4zM1184 320h4v4h-4z"/><path fill="#1052ff" d="M1188 316h4v4h-4zM1188 320h4v4h-4z"/><path fill="#294aff" d="M1204 316h4v4h-4zM1204 320h4v4h-4z"/><path fill="#314aff" d="M1208 316h4v4h-4zM1208 320h4v4h-4z"/><path fill="#4a42ff" d="M1220 316h8v4h-8zM1224 320h4v4h-4z"/><path fill="#5242ff" d="M1228 316h4v4h-4zM1228 320h4v4h-4z"/><path fill="#6b3aff" d="M1240 316h4v4h-4zM1244 320h4v4h-4z"/><path fill="#733aff" d="M1244 316h4v4h-4zM1248 320h4v4h-4z"/><path fill="#8431ff" d="M1256 316h4v4h-4zM1256 320h4v4h-4z"/><path fill="#8c31ff" d="M1260 316h4v4h-4zM1260 320h8v4h-8z"/><path fill="#9431ff" d="M1264 316h4v4h-4z"/><path fill="#ad29ff" d="M1276 316h4v4h-4zM1280 320h4v4h-4z"/><path fill="#c521ff" d="M1292 316h4v4h-4zM1292 320h8v4h-8z"/><path fill="#ce21ff" d="M1296 316h4v4h-4zM1300 320h4v4h-4z"/><path fill="#d621ff" d="M1300 316h4v4h-4z"/><path fill="#e619ff" d="M1308 316h4v4h-4zM1312 320h4v4h-4z"/><path fill="#ef19ff" d="M1312 316h4v4h-4zM1316 320h4v4h-4z"/><path fill="#f719ff" d="M1316 316h4v4h-4z"/><path fill="#ff10f7" d="M1324 316h4v4h-4zM1328 320h4v4h-4z"/><path fill="#ff08de" d="M1340 316h4v4h-4zM1344 320h4v4h-4z"/><path fill="#ff00c5" d="M1356 316h8v4h-8zM1360 320h8v4h-8z"/><path fill="#0052ff" d="M1176 320h8v4h-8zM1176 324h8v4h-8z"/><path fill="#194aff" d="M1192 320h8v4h-8zM1196 324h4v4h-4z"/><path fill="#214aff" d="M1200 320h4v4h-4zM1200 324h4v4h-4z"/><path fill="#3a42ff" d="M1212 320h8v4h-8zM1216 324h4v4h-4z"/><path fill="#4242ff" d="M1220 320h4v4h-4zM1220 324h4v4h-4z"/><path fill="#5a3aff" d="M1232 320h4v4h-4zM1236 324h4v4h-4z"/><path fill="#633aff" d="M1236 320h8v4h-8zM1240 324h4v4h-4z"/><path fill="#7b31ff" d="M1252 320h4v4h-4zM1256 324h4v4h-4z"/><path fill="#9429ff" d="M1268 320h4v4h-4zM1268 324h4v4h-4z"/><path fill="#9c29ff" d="M1272 320h4v4h-4zM1272 324h8v4h-8z"/><path fill="#a529ff" d="M1276 320h4v4h-4z"/><path fill="#bd21ff" d="M1288 320h4v4h-4zM1292 324h4v4h-4z"/><path fill="#d619ff" d="M1304 320h4v4h-4zM1308 324h4v4h-4zM1308 328h4v4h-4z"/><path fill="#de19ff" d="M1308 320h4v4h-4zM1312 324h4v4h-4z"/><path fill="#f710ff" d="M1320 320h4v4h-4zM1324 324h4v4h-4z"/><path fill="#ff10ff" d="M1324 320h4v4h-4zM1328 324h4v4h-4z"/><path fill="#ff08ef" d="M1336 320h4v4h-4zM1340 324h4v4h-4z"/><path fill="#ff08e6" d="M1340 320h4v4h-4zM1344 324h4v4h-4z"/><path fill="#ff00d6" d="M1352 320h4v4h-4zM1356 324h4v4h-4z"/><path fill="#ff00ce" d="M1356 320h4v4h-4zM1360 324h4v4h-4z"/><path fill="#084aff" d="M1184 324h4v4h-4zM1184 328h8v4h-8zM1184 332h4v4h-4z"/><path fill="#104aff" d="M1188 324h8v4h-8zM1192 328h4v4h-4z"/><path fill="#2942ff" d="M1204 324h4v4h-4zM1204 328h8v4h-8z"/><path fill="#3142ff" d="M1208 324h8v4h-8zM1212 328h4v4h-4z"/><path fill="#4a3aff" d="M1224 324h8v4h-8zM1228 328h4v4h-4z"/><path fill="#523aff" d="M1232 324h4v4h-4zM1232 328h4v4h-4z"/><path fill="#6b31ff" d="M1244 324h4v4h-4zM1248 328h4v4h-4z"/><path fill="#7331ff" d="M1248 324h8v4h-8zM1252 328h4v4h-4z"/><path fill="#8429ff" d="M1260 324h4v4h-4zM1260 328h8v4h-8zM1264 332h4v4h-4z"/><path fill="#8c29ff" d="M1264 324h4v4h-4zM1268 328h4v4h-4z"/><path fill="#a521ff" d="M1280 324h4v4h-4zM1280 328h8v4h-8zM1284 332h4v4h-4z"/><path fill="#ad21ff" d="M1284 324h4v4h-4zM1288 328h4v4h-4z"/><path fill="#b521ff" d="M1288 324h4v4h-4z"/><path fill="#c519ff" d="M1296 324h4v4h-4zM1300 328h4v4h-4z"/><path fill="#ce19ff" d="M1300 324h8v4h-8zM1304 328h4v4h-4z"/><path fill="#e610ff" d="M1316 324h4v4h-4zM1320 328h4v4h-4z"/><path fill="#ef10ff" d="M1320 324h4v4h-4zM1324 328h4v4h-4z"/><path fill="#ff08f7" d="M1332 324h8v4h-8zM1336 328h8v4h-8z"/><path fill="#ff00de" d="M1348 324h8v4h-8zM1352 328h8v4h-8z"/><path fill="#004aff" d="M1176 328h8v4h-8zM1176 332h8v4h-8zM1176 336h4v4h-4z"/><path fill="#1942ff" d="M1196 328h4v4h-4zM1196 332h4v4h-4zM1196 336h4v4h-4z"/><path fill="#2142ff" d="M1200 328h4v4h-4zM1200 332h8v4h-8z"/><path fill="#3a3aff" d="M1216 328h4v4h-4zM1216 332h8v4h-8zM1220 336h4v4h-4z"/><path fill="#423aff" d="M1220 328h8v4h-8zM1224 332h4v4h-4z"/><path fill="#5a31ff" d="M1236 328h4v4h-4zM1240 332h4v4h-4zM1240 336h4v4h-4z"/><path fill="#6331ff" d="M1240 328h8v4h-8zM1244 332h4v4h-4z"/><path fill="#7b29ff" d="M1256 328h4v4h-4zM1260 332h4v4h-4z"/><path fill="#9421ff" d="M1272 328h4v4h-4zM1276 332h4v4h-4zM1276 336h4v4h-4z"/><path fill="#9c21ff" d="M1276 328h4v4h-4zM1280 332h4v4h-4z"/><path fill="#b519ff" d="M1292 328h4v4h-4zM1292 332h8v4h-8zM1296 336h4v4h-4z"/><path fill="#bd19ff" d="M1296 328h4v4h-4zM1300 332h4v4h-4z"/><path fill="#d610ff" d="M1312 328h4v4h-4zM1312 332h4v4h-4zM1316 336h4v4h-4z"/><path fill="#de10ff" d="M1316 328h4v4h-4zM1316 332h8v4h-8z"/><path fill="#f708ff" d="M1328 328h4v4h-4zM1332 332h4v4h-4z"/><path fill="#ff08ff" d="M1332 328h4v4h-4zM1336 332h4v4h-4z"/><path fill="#ff00ef" d="M1344 328h4v4h-4zM1348 332h4v4h-4zM1352 336h4v4h-4z"/><path fill="#ff00e6" d="M1348 328h4v4h-4zM1352 332h4v4h-4z"/><path fill="#0842ff" d="M1188 332h4v4h-4zM1188 336h4v4h-4zM1188 340h4v4h-4z"/><path fill="#1042ff" d="M1192 332h4v4h-4zM1192 336h4v4h-4z"/><path fill="#293aff" d="M1208 332h4v4h-4zM1208 336h4v4h-4zM1208 340h8v4h-8z"/><path fill="#313aff" d="M1212 332h4v4h-4zM1212 336h8v4h-8z"/><path fill="#4a31ff" d="M1228 332h4v4h-4zM1228 336h8v4h-8zM1232 340h4v4h-4z"/><path fill="#5231ff" d="M1232 332h8v4h-8zM1236 336h4v4h-4z"/><path fill="#6b29ff" d="M1248 332h8v4h-8zM1252 336h4v4h-4zM1252 340h4v4h-4z"/><path fill="#7329ff" d="M1256 332h4v4h-4zM1256 336h4v4h-4z"/><path fill="#8c21ff" d="M1268 332h8v4h-8zM1272 336h4v4h-4z"/><path fill="#ad19ff" d="M1288 332h4v4h-4zM1292 336h4v4h-4z"/><path fill="#c510ff" d="M1304 332h4v4h-4zM1308 336h4v4h-4z"/><path fill="#ce10ff" d="M1308 332h4v4h-4zM1312 336h4v4h-4z"/><path fill="#e608ff" d="M1324 332h4v4h-4zM1328 336h4v4h-4z"/><path fill="#ef08ff" d="M1328 332h4v4h-4zM1332 336h4v4h-4z"/><path fill="#ff00f7" d="M1340 332h8v4h-8zM1344 336h8v4h-8zM1348 340h4v4h-4z"/><path fill="#0042ff" d="M1180 336h8v4h-8zM1176 340h12v4h-12zM1180 344h8v4h-8z"/><path fill="#193aff" d="M1200 336h4v4h-4zM1200 340h4v4h-4zM1200 344h4v4h-4z"/><path fill="#213aff" d="M1204 336h4v4h-4zM1204 340h4v4h-4zM1204 344h4v4h-4z"/><path fill="#4231ff" d="M1224 336h4v4h-4zM1228 340h4v4h-4z"/><path fill="#6329ff" d="M1244 336h8v4h-8zM1248 340h4v4h-4z"/><path fill="#7b21ff" d="M1260 336h8v4h-8zM1264 340h4v4h-4z"/><path fill="#8421ff" d="M1268 336h4v4h-4zM1268 340h8v4h-8z"/><path fill="#9c19ff" d="M1280 336h8v4h-8zM1284 340h4v4h-4z"/><path fill="#a519ff" d="M1288 336h4v4h-4zM1288 340h8v4h-8z"/><path fill="#bd10ff" d="M1300 336h8v4h-8zM1304 340h8v4h-8z"/><path fill="#de08ff" d="M1320 336h8v4h-8zM1324 340h8v4h-8z"/><path fill="#f700ff" d="M1336 336h4v4h-4zM1340 340h4v4h-4zM1344 344h4v4h-4z"/><path fill="#ff00ff" d="M1340 336h4v4h-4zM1344 340h4v4h-4z"/><path fill="#103aff" d="M1192 340h8v4h-8zM1192 344h8v4h-8zM1196 348h4v4h-4z"/><path fill="#3131ff" d="M1216 340h4v4h-4zM1216 344h4v4h-4zM1216 348h8v4h-8z"/><path fill="#3a31ff" d="M1220 340h8v4h-8zM1220 344h8v4h-8z"/><path fill="#5229ff" d="M1236 340h8v4h-8zM1240 344h4v4h-4zM1240 348h4v4h-4z"/><path fill="#5a29ff" d="M1244 340h4v4h-4zM1244 344h4v4h-4z"/><path fill="#6b21ff" d="M1256 340h4v4h-4zM1256 344h4v4h-4zM1256 348h8v4h-8z"/><path fill="#7321ff" d="M1260 340h4v4h-4zM1260 344h8v4h-8z"/><path fill="#8c19ff" d="M1276 340h4v4h-4zM1276 344h8v4h-8zM1280 348h4v4h-4z"/><path fill="#9419ff" d="M1280 340h4v4h-4zM1284 344h4v4h-4z"/><path fill="#ad10ff" d="M1296 340h4v4h-4zM1296 344h8v4h-8zM1300 348h4v4h-4z"/><path fill="#b510ff" d="M1300 340h4v4h-4zM1304 344h4v4h-4z"/><path fill="#c508ff" d="M1312 340h4v4h-4zM1312 344h8v4h-8zM1316 348h4v4h-4z"/><path fill="#ce08ff" d="M1316 340h4v4h-4zM1320 344h4v4h-4zM1320 348h4v4h-4z"/><path fill="#d608ff" d="M1320 340h4v4h-4zM1324 344h4v4h-4z"/><path fill="#e600ff" d="M1332 340h4v4h-4zM1332 344h8v4h-8zM1336 348h8v4h-8z"/><path fill="#ef00ff" d="M1336 340h4v4h-4zM1340 344h4v4h-4z"/><path fill="#083aff" d="M1188 344h4v4h-4zM1188 348h8v4h-8zM1188 352h4v4h-4z"/><path fill="#2131ff" d="M1208 344h4v4h-4zM1208 348h4v4h-4zM1208 352h4v4h-4z"/><path fill="#2931ff" d="M1212 344h4v4h-4zM1212 348h4v4h-4zM1212 352h4v4h-4z"/><path fill="#4229ff" d="M1228 344h4v4h-4zM1228 348h8v4h-8zM1232 352h4v4h-4z"/><path fill="#4a29ff" d="M1232 344h8v4h-8zM1236 348h4v4h-4z"/><path fill="#6321ff" d="M1248 344h8v4h-8zM1252 348h4v4h-4zM1252 352h8v4h-8z"/><path fill="#7b19ff" d="M1268 344h4v4h-4zM1268 348h4v4h-4zM1272 352h4v4h-4zM1272 356h4v4h-4z"/><path fill="#8419ff" d="M1272 344h4v4h-4zM1272 348h8v4h-8zM1276 352h4v4h-4z"/><path fill="#9c10ff" d="M1288 344h4v4h-4zM1292 348h4v4h-4zM1292 352h8v4h-8z"/><path fill="#a510ff" d="M1292 344h4v4h-4zM1296 348h4v4h-4z"/><path fill="#bd08ff" d="M1308 344h4v4h-4zM1312 348h4v4h-4zM1316 352h4v4h-4z"/><path fill="#de00ff" d="M1328 344h4v4h-4zM1332 348h4v4h-4zM1336 352h4v4h-4z"/><path fill="#003aff" d="M1180 348h8v4h-8zM1180 352h8v4h-8zM1180 356h8v4h-8z"/><path fill="#1931ff" d="M1200 348h8v4h-8zM1200 352h8v4h-8zM1204 356h4v4h-4z"/><path fill="#3a29ff" d="M1224 348h4v4h-4zM1224 352h8v4h-8zM1228 356h4v4h-4z"/><path fill="#5221ff" d="M1244 348h4v4h-4zM1244 352h4v4h-4zM1244 356h4v4h-4zM1244 360h4v4h-4z"/><path fill="#5a21ff" d="M1248 348h4v4h-4zM1248 352h4v4h-4zM1248 356h4v4h-4z"/><path fill="#7319ff" d="M1264 348h4v4h-4zM1264 352h8v4h-8zM1268 356h4v4h-4z"/><path fill="#9410ff" d="M1284 348h8v4h-8zM1288 352h4v4h-4zM1288 356h8v4h-8z"/><path fill="#ad08ff" d="M1304 348h4v4h-4zM1304 352h4v4h-4zM1308 356h4v4h-4zM1308 360h4v4h-4z"/><path fill="#b508ff" d="M1308 348h4v4h-4zM1308 352h8v4h-8zM1312 356h4v4h-4z"/><path fill="#ce00ff" d="M1324 348h4v4h-4zM1324 352h8v4h-8zM1328 356h4v4h-4z"/><path fill="#d600ff" d="M1328 348h4v4h-4zM1332 352h4v4h-4zM1332 356h4v4h-4z"/><path fill="#0831ff" d="M1192 352h4v4h-4zM1188 356h8v4h-8zM1192 360h4v4h-4zM1192 364h4v4h-4z"/><path fill="#1031ff" d="M1196 352h4v4h-4zM1196 356h8v4h-8zM1196 360h8v4h-8z"/><path fill="#2929ff" d="M1216 352h4v4h-4zM1216 356h4v4h-4zM1216 360h4v4h-4zM1216 364h4v4h-4z"/><path fill="#3129ff" d="M1220 352h4v4h-4zM1220 356h8v4h-8zM1220 360h4v4h-4z"/><path fill="#4a21ff" d="M1236 352h8v4h-8zM1240 356h4v4h-4zM1240 360h4v4h-4zM1240 364h4v4h-4z"/><path fill="#6b19ff" d="M1260 352h4v4h-4zM1260 356h8v4h-8zM1264 360h4v4h-4z"/><path fill="#8c10ff" d="M1280 352h8v4h-8zM1284 356h4v4h-4zM1288 360h4v4h-4z"/><path fill="#a508ff" d="M1300 352h4v4h-4zM1300 356h8v4h-8zM1304 360h4v4h-4z"/><path fill="#c500ff" d="M1320 352h4v4h-4zM1324 356h4v4h-4zM1328 360h4v4h-4z"/><path fill="#2129ff" d="M1208 356h8v4h-8zM1208 360h8v4h-8zM1212 364h4v4h-4z"/><path fill="#4221ff" d="M1232 356h8v4h-8zM1232 360h8v4h-8zM1236 364h4v4h-4z"/><path fill="#5a19ff" d="M1252 356h4v4h-4zM1252 360h4v4h-4zM1252 364h8v4h-8zM1256 368h4v4h-4z"/><path fill="#6319ff" d="M1256 356h4v4h-4zM1256 360h8v4h-8zM1260 364h4v4h-4z"/><path fill="#7b10ff" d="M1276 356h4v4h-4zM1276 360h4v4h-4zM1276 364h8v4h-8z"/><path fill="#8410ff" d="M1280 356h4v4h-4zM1280 360h8v4h-8zM1284 364h4v4h-4z"/><path fill="#9c08ff" d="M1296 356h4v4h-4zM1300 360h4v4h-4zM1300 364h8v4h-8z"/><path fill="#bd00ff" d="M1316 356h8v4h-8zM1320 360h8v4h-8zM1324 364h4v4h-4z"/><path fill="#0031ff" d="M1180 360h12v4h-12zM1180 364h12v4h-12zM1184 368h4v4h-4z"/><path fill="#1929ff" d="M1204 360h4v4h-4zM1204 364h8v4h-8zM1204 368h8v4h-8zM1204 372h4v4h-4z"/><path fill="#3121ff" d="M1224 360h4v4h-4zM1224 364h4v4h-4zM1224 368h8v4h-8zM1224 372h8v4h-8z"/><path fill="#3a21ff" d="M1228 360h4v4h-4zM1228 364h8v4h-8zM1232 368h4v4h-4z"/><path fill="#5219ff" d="M1248 360h4v4h-4zM1248 364h4v4h-4zM1248 368h8v4h-8zM1252 372h4v4h-4z"/><path fill="#7310ff" d="M1268 360h8v4h-8zM1272 364h4v4h-4zM1272 368h8v4h-8z"/><path fill="#9408ff" d="M1292 360h8v4h-8zM1296 364h4v4h-4zM1296 368h8v4h-8z"/><path fill="#ad00ff" d="M1312 360h4v4h-4zM1312 364h8v4h-8zM1316 368h4v4h-4z"/><path fill="#b500ff" d="M1316 360h4v4h-4zM1320 364h4v4h-4zM1320 368h4v4h-4z"/><path fill="#1029ff" d="M1196 364h8v4h-8zM1200 368h4v4h-4zM1200 372h4v4h-4z"/><path fill="#2921ff" d="M1220 364h4v4h-4zM1216 368h8v4h-8zM1220 372h4v4h-4zM1220 376h4v4h-4z"/><path fill="#4a19ff" d="M1244 364h4v4h-4zM1244 368h4v4h-4zM1244 372h8v4h-8z"/><path fill="#6b10ff" d="M1264 364h8v4h-8zM1268 368h4v4h-4zM1268 372h8v4h-8z"/><path fill="#8c08ff" d="M1288 364h8v4h-8zM1292 368h4v4h-4zM1296 372h4v4h-4z"/><path fill="#a500ff" d="M1308 364h4v4h-4zM1308 368h8v4h-8zM1312 372h8v4h-8z"/><path fill="#0029ff" d="M1188 368h4v4h-4zM1184 372h8v4h-8zM1184 376h8v4h-8zM1184 380h12v4h-12zM1184 384h4v4h-4z"/><path fill="#0829ff" d="M1192 368h8v4h-8zM1192 372h8v4h-8zM1192 376h8v4h-8z"/><path fill="#2121ff" d="M1212 368h4v4h-4zM1212 372h8v4h-8zM1212 376h8v4h-8zM1216 380h4v4h-4z"/><path fill="#4219ff" d="M1236 368h8v4h-8zM1240 372h4v4h-4zM1240 376h8v4h-8zM1240 380h4v4h-4z"/><path fill="#6310ff" d="M1260 368h8v4h-8zM1264 372h4v4h-4zM1264 376h8v4h-8z"/><path fill="#7b08ff" d="M1280 368h4v4h-4zM1284 372h4v4h-4zM1284 376h8v4h-8zM1288 380h4v4h-4z"/><path fill="#8408ff" d="M1284 368h8v4h-8zM1288 372h8v4h-8zM1292 376h4v4h-4z"/><path fill="#9c00ff" d="M1304 368h4v4h-4zM1308 372h4v4h-4zM1308 376h8v4h-8z"/><path fill="#1921ff" d="M1208 372h4v4h-4zM1208 376h4v4h-4zM1208 380h8v4h-8zM1208 384h8v4h-8z"/><path fill="#3a19ff" d="M1232 372h8v4h-8zM1232 376h8v4h-8zM1236 380h4v4h-4zM1236 384h4v4h-4z"/><path fill="#5a10ff" d="M1256 372h8v4h-8zM1260 376h4v4h-4zM1260 380h8v4h-8z"/><path fill="#7308ff" d="M1276 372h8v4h-8zM1280 376h4v4h-4zM1280 380h8v4h-8zM1284 384h4v4h-4z"/><path fill="#9400ff" d="M1300 372h8v4h-8zM1304 376h4v4h-4zM1304 380h8v4h-8z"/><path fill="#1021ff" d="M1200 376h8v4h-8zM1200 380h8v4h-8zM1200 384h8v4h-8zM1204 388h4v4h-4z"/><path fill="#2919ff" d="M1224 376h4v4h-4zM1220 380h8v4h-8zM1224 384h4v4h-4zM1224 388h8v4h-8zM1224 392h4v4h-4z"/><path fill="#3119ff" d="M1228 376h4v4h-4zM1228 380h8v4h-8zM1228 384h8v4h-8zM1232 388h4v4h-4z"/><path fill="#4a10ff" d="M1248 376h4v4h-4zM1248 380h8v4h-8zM1248 384h8v4h-8zM1252 388h4v4h-4zM1252 392h4v4h-4z"/><path fill="#5210ff" d="M1252 376h8v4h-8zM1256 380h4v4h-4zM1256 384h8v4h-8zM1256 388h4v4h-4z"/><path fill="#6b08ff" d="M1272 376h8v4h-8zM1272 380h8v4h-8zM1276 384h8v4h-8zM1280 388h4v4h-4z"/><path fill="#8c00ff" d="M1296 376h8v4h-8zM1300 380h4v4h-4zM1300 384h8v4h-8z"/><path fill="#0821ff" d="M1196 380h4v4h-4zM1196 384h4v4h-4zM1196 388h8v4h-8zM1196 392h8v4h-8z"/><path fill="#4210ff" d="M1244 380h4v4h-4zM1244 384h4v4h-4zM1244 388h8v4h-8zM1244 392h8v4h-8z"/><path fill="#6308ff" d="M1268 380h4v4h-4zM1268 384h8v4h-8zM1272 388h8v4h-8zM1272 392h8v4h-8z"/><path fill="#8400ff" d="M1292 380h8v4h-8zM1296 384h4v4h-4zM1296 388h8v4h-8z"/><path fill="#0021ff" d="M1188 384h8v4h-8zM1184 388h12v4h-12zM1188 392h8v4h-8zM1188 396h8v4h-8zM1188 400h4v4h-4z"/><path fill="#2119ff" d="M1216 384h8v4h-8zM1216 388h8v4h-8zM1216 392h8v4h-8zM1220 396h4v4h-4z"/><path fill="#3a10ff" d="M1240 384h4v4h-4zM1236 388h8v4h-8zM1240 392h4v4h-4zM1240 396h8v4h-8zM1240 400h4v4h-4z"/><path fill="#5a08ff" d="M1264 384h4v4h-4zM1264 388h8v4h-8zM1268 392h4v4h-4zM1268 396h8v4h-8z"/><path fill="#7b00ff" d="M1288 384h8v4h-8zM1292 388h4v4h-4zM1292 392h8v4h-8z"/><path fill="#1919ff" d="M1208 388h8v4h-8zM1212 392h4v4h-4zM1212 396h8v4h-8zM1212 400h8v4h-8z"/><path fill="#5208ff" d="M1260 388h4v4h-4zM1260 392h8v4h-8zM1260 396h8v4h-8zM1264 400h8v4h-8zM1264 404h4v4h-4z"/><path fill="#7300ff" d="M1284 388h8v4h-8zM1288 392h4v4h-4zM1288 396h8v4h-8z"/><path fill="#1019ff" d="M1204 392h8v4h-8zM1204 396h8v4h-8zM1204 400h8v4h-8zM1204 404h8v4h-8z"/><path fill="#2910ff" d="M1228 392h4v4h-4zM1224 396h8v4h-8zM1228 400h8v4h-8zM1228 404h8v4h-8zM1228 408h8v4h-8z"/><path fill="#3110ff" d="M1232 392h8v4h-8zM1232 396h8v4h-8zM1236 400h4v4h-4zM1236 404h4v4h-4z"/><path fill="#4a08ff" d="M1256 392h4v4h-4zM1256 396h4v4h-4zM1256 400h8v4h-8zM1256 404h8v4h-8zM1260 408h4v4h-4z"/><path fill="#6b00ff" d="M1280 392h8v4h-8zM1284 396h4v4h-4zM1284 400h8v4h-8z"/><path fill="#0819ff" d="M1196 396h8v4h-8zM1196 400h8v4h-8zM1200 404h4v4h-4zM1200 408h8v4h-8zM1200 412h4v4h-4z"/><path fill="#4208ff" d="M1248 396h8v4h-8zM1248 400h8v4h-8zM1252 404h4v4h-4zM1252 408h8v4h-8zM1252 412h8v4h-8z"/><path fill="#6300ff" d="M1276 396h8v4h-8zM1276 400h8v4h-8zM1280 404h8v4h-8zM1280 408h4v4h-4z"/><path fill="#0019ff" d="M1192 400h4v4h-4zM1188 404h12v4h-12zM1188 408h12v4h-12zM1188 412h12v4h-12zM1192 416h8v4h-8z"/><path fill="#2110ff" d="M1220 400h8v4h-8zM1220 404h8v4h-8zM1220 408h8v4h-8zM1224 412h8v4h-8zM1224 416h4v4h-4z"/><path fill="#3a08ff" d="M1244 400h4v4h-4zM1244 404h8v4h-8zM1244 408h8v4h-8zM1244 412h8v4h-8zM1248 416h4v4h-4z"/><path fill="#5a00ff" d="M1272 400h4v4h-4zM1272 404h8v4h-8zM1272 408h8v4h-8zM1276 412h4v4h-4z"/><path fill="#1910ff" d="M1212 404h8v4h-8zM1216 408h4v4h-4zM1216 412h8v4h-8zM1216 416h8v4h-8zM1216 420h4v4h-4z"/><path fill="#3108ff" d="M1240 404h4v4h-4zM1236 408h8v4h-8zM1240 412h4v4h-4zM1240 416h8v4h-8zM1240 420h8v4h-8z"/><path fill="#5200ff" d="M1268 404h4v4h-4zM1268 408h4v4h-4zM1268 412h8v4h-8zM1272 416h4v4h-4z"/><path fill="#1010ff" d="M1208 408h8v4h-8zM1208 412h8v4h-8zM1208 416h8v4h-8zM1208 420h8v4h-8zM1208 424h8v4h-8z"/><path fill="#4a00ff" d="M1264 408h4v4h-4zM1260 412h8v4h-8zM1264 416h8v4h-8zM1264 420h8v4h-8zM1264 424h4v4h-4z"/><path fill="#0810ff" d="M1204 412h4v4h-4zM1200 416h8v4h-8zM1200 420h8v4h-8zM1200 424h8v4h-8zM1204 428h8v4h-8zM1204 432h4v4h-4z"/><path fill="#2908ff" d="M1232 412h8v4h-8zM1232 416h8v4h-8zM1232 420h8v4h-8zM1236 424h8v4h-8zM1236 428h4v4h-4z"/><path fill="#2108ff" d="M1228 416h4v4h-4zM1224 420h8v4h-8zM1228 424h8v4h-8zM1228 428h8v4h-8zM1228 432h8v4h-8zM1228 436h4v4h-4z"/><path fill="#3a00ff" d="M1252 416h4v4h-4zM1248 420h8v4h-8zM1252 424h4v4h-4zM1252 428h8v4h-8zM1252 432h8v4h-8z"/><path fill="#4200ff" d="M1256 416h8v4h-8zM1256 420h8v4h-8zM1256 424h8v4h-8zM1260 428h4v4h-4z"/><path fill="#0010ff" d="M1192 420h8v4h-8zM1192 424h8v4h-8zM1192 428h12v4h-12zM1192 432h12v4h-12zM1192 436h12v4h-12zM1196 440h4v4h-4z"/><path fill="#1908ff" d="M1220 420h4v4h-4zM1220 424h8v4h-8zM1220 428h8v4h-8zM1220 432h8v4h-8zM1220 436h8v4h-8zM1220 440h8v4h-8z"/><path fill="#1008ff" d="M1216 424h4v4h-4zM1212 428h8v4h-8zM1212 432h8v4h-8zM1212 436h8v4h-8zM1212 440h8v4h-8zM1216 444h8v4h-8zM1216 448h4v4h-4z"/><path fill="#3100ff" d="M1244 424h8v4h-8zM1244 428h8v4h-8zM1244 432h8v4h-8zM1244 436h12v4h-12zM1248 440h4v4h-4z"/><path fill="#2900ff" d="M1240 428h4v4h-4zM1236 432h8v4h-8zM1236 436h8v4h-8zM1240 440h8v4h-8zM1240 444h8v4h-8zM1240 448h4v4h-4z"/><path fill="#0808ff" d="M1208 432h4v4h-4zM1204 436h8v4h-8zM1204 440h8v4h-8zM1204 444h12v4h-12zM1208 448h8v4h-8zM1208 452h8v4h-8zM1208 456h4v4h-4z"/><path fill="#2100ff" d="M1232 436h4v4h-4zM1232 440h8v4h-8zM1232 444h8v4h-8zM1232 448h8v4h-8zM1232 452h8v4h-8z"/><path fill="#0008ff" d="M1200 440h4v4h-4zM1196 444h8v4h-8zM1196 448h12v4h-12zM1196 452h12v4h-12zM1196 456h12v4h-12zM1196 460h12v4h-12zM1200 464h4v4h-4z"/><path fill="#1900ff" d="M1228 440h4v4h-4zM1224 444h8v4h-8zM1224 448h8v4h-8zM1224 452h8v4h-8zM1224 456h12v4h-12zM1228 460h4v4h-4z"/><path fill="#1000ff" d="M1220 448h4v4h-4zM1216 452h8v4h-8zM1216 456h8v4h-8zM1216 460h12v4h-12zM1220 464h8v4h-8zM1220 468h4v4h-4z"/><path fill="#0800ff" d="M1212 456h4v4h-4zM1208 460h8v4h-8zM1208 464h12v4h-12zM1208 468h12v4h-12zM1212 472h8v4h-8zM1212 476h4v4h-4z"/><path fill="#0000ff" d="M1204 464h4v4h-4zM1200 468h8v4h-8zM1200 472h12v4h-12zM1200 476h12v4h-12zM1200 480h12v4h-12zM1200 484h8v4h-8zM1200 488h4v4h-4z"/></g></g></g>
<path d="M1293.1 597.8 L1293.1 597.8 L1293.1 597.8 L1293.0 597.7 L1293.0 597.7 L1292.9 597.7 L1292.9 597.8 L1292.8 597.8 L1292.8 597.9 L1292.7 597.9 L1292.6 597.9 L1292.5 597.9 L1292.4 597.9 L1292.3 597.8 L1292.3 597.9 L1292.2 597.9 L1292.2 598.0 L1292.1 598.1 L1292.1 598.1 L1292.0 598.2 L1292.0 598.2 L1291.9 598.3 L1291.8 598.3 L1291.7 598.3 L1291.6 598.3 L1291.4 598.3 L1291.3 598.3 L1291.1 598.3 L1290.9 598.2 L1290.8 598.2 L1290.6 598.2 L1290.5 598.3 L1290.3 598.3 L1290.1 598.2 L1289.9 598.2 L1289.7 598.2 L1289.5 598.1 L1289.3 598.0 L1289.0 597.9 L1288.6 597.7 L1288.2 597.4 L1287.7 597.2 L1287.2 596.8 L1286.6 596.5 L1286.0 596.1 L1285.4 595.6 L1284.8 595.2 L1284.1 594.6 L1283.3 594.1 L1282.5 593.4 L1281.7 592.7 L1280.7 592.0 L1279.7 591.2 L1278.6 590.4 L1277.5 589.5 L1276.4 588.5 L1275.1 587.5 L1273.8 586.3 L1272.5 585.2 L1271.1 584.0 L1269.6 582.7 L1268.0 581.4 L1266.4 580.0 L1264.7 578.6 L1262.9 577.1 L1261.0 575.5 L1258.9 573.8 L1256.8 572.0 L1254.6 570.2 L1252.2 568.2 L1249.8 566.2 L1247.2 564.1 L1244.6 562.0 L1241.9 559.7 L1239.0 557.3 L1236.1 554.8 L1233.0 552.1 L1229.8 549.3 L1226.5 546.3 L1223.0 543.2 L1219.5 539.9 L1215.8 536.4 L1212.0 532.7 L1208.1 528.7 L1204.0 524.3 L1199.6 519.5 L1194.9 514.2 L1189.8 508.3 L1184.5 501.9 L1178.9 494.9 L1173.1 487.5 L1167.1 479.6 L1161.0 471.3 L1154.7 462.6 L1148.3 453.4 L1141.8 443.7 L1135.1 433.5 L1128.3 422.9 L1121.5 411.9 L1114.7 400.7 L1107.9 389.2 L1101.1 377.6 L1094.3 365.9 L1087.7 354.0 L1081.3 342.1 L1075.2 330.3 L1069.4 318.5 L1064.0 306.9 L1058.9 295.6 L1054.1 284.5 L1049.7 273.7 L1045.5 263.3 L1041.7 253.3 L1038.2 243.7 L1035.1 234.6 L1032.3 226.0 L1029.9 218.0 L1027.8 210.4 L1026.1 203.4 L1024.6 196.8 L1023.4 190.6 L1022.4 184.8 L1021.8 179.5 L1021.3 174.6 L1021.2 170.1 L1021.2 165.9 L1021.5 162.0 L1022.0 158.3 L1022.6 154.9 L1023.5 151.8 L1024.6 149.0 L1025.9 146.3 L1027.4 143.9 L1029.0 141.8 L1030.8 139.9 L1032.8 138.2 L1034.8 136.7 L1037.1 135.5 L1039.4 134.4 L1041.8 133.5 L1044.3 132.7 L1046.9 132.1 L1049.6 131.6 L1052.3 131.2 L1055.1 130.9 L1058.0 130.7 L1061.0 130.5 L1063.9 130.3 L1066.9 130.3 L1070.0 130.2 L1073.0 130.2 L1076.0 130.2 L1079.0 130.2 L1082.1 130.2 L1085.1 130.3 L1088.2 130.3 L1091.3 130.5 L1094.4 130.6 L1097.6 130.7 L1100.8 130.9 L1104.0 131.1 L1107.3 131.3 L1110.7 131.5 L1114.1 131.8 L1117.6 132.0 L1121.1 132.3 L1124.7 132.6 L1128.3 132.9 L1132.0 133.3 L1135.8 133.6 L1139.7 134.0 L1143.6 134.4 L1147.6 134.8 L1151.7 135.2 L1155.9 135.6 L1160.1 136.1 L1164.4 136.5 L1168.9 137.0 L1173.4 137.5 L1178.0 138.0 L1182.7 138.5 L1187.5 139.0 L1192.4 139.6 L1197.4 140.1 L1202.5 140.7 L1207.7 141.3 L1213.0 141.9 L1218.4 142.5 L1224.0 143.1 L1229.6 143.8 L1235.3 144.4 L1241.2 145.1 L1247.2 145.8 L1253.3 146.5 L1259.5 147.2 L1265.8 147.9 L1272.2 148.7 L1278.7 149.4 L1285.4 150.2 L1292.1 151.0 L1299.0 151.7 L1305.9 152.5 L1313.0 153.4 L1320.1 154.2 L1327.4 155.0 L1334.7 155.9 L1342.1 156.7 L1349.6 157.6 L1357.2 158.4 L1364.9 159.3 L1372.6 160.2 L1380.3 161.1 L1388.1 162.0 L1396.0 162.9 L1403.8 163.8 L1411.5 164.7 L1419.2 165.6 L1426.8 166.5 L1434.3 167.3 L1441.8 168.2 L1449.2 169.0 L1456.7 169.9 L1464.1 170.8 L1471.5 171.6 L1478.8 172.4 L1485.9 173.3 L1492.9 174.1 L1499.7 174.8 L1506.3 175.6 L1512.8 176.3 L1519.1 177.1 L1525.3 177.8 L1531.3 178.5 L1537.2 179.1 L1542.9 179.8 L1548.4 180.4 L1553.8 181.1 L1559.0 181.7 L1564.0 182.2 L1568.8 182.8 L1573.5 183.3 L1578.0 183.8 L1582.3 184.3 L1586.5 184.8 L1590.5 185.3 L1594.5 185.7 L1598.2 186.2 L1601.8 186.6 L1605.4 187.0 L1608.8 187.4 L1612.1 187.8 L1615.3 188.1 L1618.5 188.5 L1621.6 188.9 L1624.5 189.2 L1627.4 189.5 L1630.2 189.8 L1632.9 190.2 L1635.4 190.5 L1637.9 190.7 L1640.3 191.0 L1642.6 191.3 L1644.9 191.5 L1647.0 191.8 L1649.0 192.0 L1650.9 192.2 L1652.7 192.4 L1654.4 192.6 L1656.0 192.8 L1657.5 193.0 L1658.9 193.2 L1660.3 193.3 L1661.6 193.5 L1662.9 193.6 L1664.0 193.8 L1665.2 193.9 L1666.2 194.0 L1667.2 194.1 L1668.2 194.2 L1669.1 194.3 L1669.9 194.4 L1670.6 194.5 L1671.3 194.6 L1671.9 194.7 L1672.5 194.7 L1673.0 194.8 L1673.6 194.9 L1674.1 194.9 L1674.6 195.0 L1675.1 195.0 L1675.6 195.1 L1676.0 195.1 L1676.5 195.2 L1676.9 195.2 L1677.3 195.3 L1677.6 195.3 L1678.0 195.4 L1678.4 195.4 L1678.8 195.5 L1679.2 195.5 L1679.6 195.6 L1680.0 195.6 L1680.4 195.6 L1680.8 195.7 L1681.1 195.7 L1681.4 195.8 L1681.7 195.8 L1681.9 195.8 L1682.1 195.8 L1682.3 195.9 L1682.4 195.9 L1682.5 195.9 L1682.7 195.9 L1682.8 195.9 L1682.9 195.9 L1683.0 195.9 L1683.1 196.0 L1683.2 196.0 L1683.2 196.0 L1683.3 196.0 L1683.3 196.0Z" fill="none" stroke="#000" stroke-opacity="0.3" stroke-width="1" clip-path="url(#pclip)"/>
<line x1="1019.7" y1="610.5" x2="1019.7" y2="617" stroke="#8c8c8c" stroke-width="1.5"/>
<text x="1019.7" y="632" font-size="14" fill="#d0d0d0" text-anchor="middle">0</text>
<line x1="1072.9" y1="610.5" x2="1072.9" y2="617" stroke="#8c8c8c" stroke-width="1.5"/>
<text x="1072.9" y="632" font-size="14" fill="#d0d0d0" text-anchor="middle">0,05</text>
<line x1="1126.2" y1="610.5" x2="1126.2" y2="617" stroke="#8c8c8c" stroke-width="1.5"/>
<text x="1126.2" y="632" font-size="14" fill="#d0d0d0" text-anchor="middle">0,1</text>
<line x1="1179.4" y1="610.5" x2="1179.4" y2="617" stroke="#8c8c8c" stroke-width="1.5"/>
<text x="1179.4" y="632" font-size="14" fill="#d0d0d0" text-anchor="middle">0,15</text>
<line x1="1232.6" y1="610.5" x2="1232.6" y2="617" stroke="#8c8c8c" stroke-width="1.5"/>
<text x="1232.6" y="632" font-size="14" fill="#d0d0d0" text-anchor="middle">0,2</text>
<line x1="1285.8" y1="610.5" x2="1285.8" y2="617" stroke="#8c8c8c" stroke-width="1.5"/>
<text x="1285.8" y="632" font-size="14" fill="#d0d0d0" text-anchor="middle">0,25</text>
<line x1="1339.1" y1="610.5" x2="1339.1" y2="617" stroke="#8c8c8c" stroke-width="1.5"/>
<text x="1339.1" y="632" font-size="14" fill="#d0d0d0" text-anchor="middle">0,3</text>
<line x1="1392.3" y1="610.5" x2="1392.3" y2="617" stroke="#8c8c8c" stroke-width="1.5"/>
<text x="1392.3" y="632" font-size="14" fill="#d0d0d0" text-anchor="middle">0,35</text>
<line x1="1445.5" y1="610.5" x2="1445.5" y2="617" stroke="#8c8c8c" stroke-width="1.5"/>
<text x="1445.5" y="632" font-size="14" fill="#d0d0d0" text-anchor="middle">0,4</text>
<line x1="1498.7" y1="610.5" x2="1498.7" y2="617" stroke="#8c8c8c" stroke-width="1.5"/>
<text x="1498.7" y="632" font-size="14" fill="#d0d0d0" text-anchor="middle">0,45</text>
<line x1="1552.0" y1="610.5" x2="1552.0" y2="617" stroke="#8c8c8c" stroke-width="1.5"/>
<text x="1552.0" y="632" font-size="14" fill="#d0d0d0" text-anchor="middle">0,5</text>
<line x1="1605.2" y1="610.5" x2="1605.2" y2="617" stroke="#8c8c8c" stroke-width="1.5"/>
<text x="1605.2" y="632" font-size="14" fill="#d0d0d0" text-anchor="middle">0,55</text>
<line x1="1013" y1="611.3" x2="1019.5" y2="611.3" stroke="#8c8c8c" stroke-width="1.5"/>
<text x="1013" y="616.3" font-size="14" fill="#d0d0d0" text-anchor="end">0</text>
<line x1="1013" y1="570.3" x2="1019.5" y2="570.3" stroke="#8c8c8c" stroke-width="1.5"/>
<text x="1013" y="575.3" font-size="14" fill="#d0d0d0" text-anchor="end">0,05</text>
<line x1="1013" y1="529.3" x2="1019.5" y2="529.3" stroke="#8c8c8c" stroke-width="1.5"/>
<text x="1013" y="534.3" font-size="14" fill="#d0d0d0" text-anchor="end">0,1</text>
<line x1="1013" y1="488.3" x2="1019.5" y2="488.3" stroke="#8c8c8c" stroke-width="1.5"/>
<text x="1013" y="493.3" font-size="14" fill="#d0d0d0" text-anchor="end">0,15</text>
<line x1="1013" y1="447.3" x2="1019.5" y2="447.3" stroke="#8c8c8c" stroke-width="1.5"/>
<text x="1013" y="452.3" font-size="14" fill="#d0d0d0" text-anchor="end">0,2</text>
<line x1="1013" y1="406.3" x2="1019.5" y2="406.3" stroke="#8c8c8c" stroke-width="1.5"/>
<text x="1013" y="411.3" font-size="14" fill="#d0d0d0" text-anchor="end">0,25</text>
<line x1="1013" y1="365.3" x2="1019.5" y2="365.3" stroke="#8c8c8c" stroke-width="1.5"/>
<text x="1013" y="370.3" font-size="14" fill="#d0d0d0" text-anchor="end">0,3</text>
<line x1="1013" y1="324.3" x2="1019.5" y2="324.3" stroke="#8c8c8c" stroke-width="1.5"/>
<text x="1013" y="329.3" font-size="14" fill="#d0d0d0" text-anchor="end">0,35</text>
<line x1="1013" y1="283.3" x2="1019.5" y2="283.3" stroke="#8c8c8c" stroke-width="1.5"/>
<text x="1013" y="288.3" font-size="14" fill="#d0d0d0" text-anchor="end">0,4</text>
<line x1="1013" y1="242.3" x2="1019.5" y2="242.3" stroke="#8c8c8c" stroke-width="1.5"/>
<text x="1013" y="247.3" font-size="14" fill="#d0d0d0" text-anchor="end">0,45</text>
<line x1="1013" y1="201.3" x2="1019.5" y2="201.3" stroke="#8c8c8c" stroke-width="1.5"/>
<text x="1013" y="206.3" font-size="14" fill="#d0d0d0" text-anchor="end">0,5</text>
<line x1="1013" y1="160.3" x2="1019.5" y2="160.3" stroke="#8c8c8c" stroke-width="1.5"/>
<text x="1013" y="165.3" font-size="14" fill="#d0d0d0" text-anchor="end">0,55</text>
<rect x="1402" y="578" width="254" height="27" fill="#2e2e2e"/>
<text x="1404.7" y="600" font-size="20" fill="#f0f0f0" textLength="155.8" lengthAdjust="spacingAndGlyphs">Gamut Coverage:</text><text x="1571.7" y="600" font-size="20" fill="#f0f0f0" textLength="65" lengthAdjust="spacingAndGlyphs">102,8%</text>
<rect x="1145.6" y="141.6" width="13.6" height="13.6" fill="none" stroke="#e8e8e8" stroke-width="1.6"/>
<rect x="1229.7" y="149.5" width="13.6" height="13.6" fill="none" stroke="#e8e8e8" stroke-width="1.6"/>
<rect x="1492.7" y="174.2" width="13.6" height="13.6" fill="none" stroke="#e8e8e8" stroke-width="1.6"/>
<rect x="1160.6" y="229.6" width="13.6" height="13.6" fill="none" stroke="#e8e8e8" stroke-width="1.6"/>
<rect x="1337.7" y="331.7" width="13.6" height="13.6" fill="none" stroke="#e8e8e8" stroke-width="1.6"/>
<rect x="1199.2" y="473.7" width="13.6" height="13.6" fill="none" stroke="#e8e8e8" stroke-width="1.6"/>
<rect x="1222.8" y="218.7" width="13.6" height="13.6" fill="none" stroke="#000" stroke-width="2"/>
<circle cx="1152.1" cy="148.5" r="4.2" fill="#00a000" stroke="#000" stroke-width="1.2"/>
<circle cx="1235" cy="156.5" r="4.2" fill="#b8b000" stroke="#000" stroke-width="1.2"/>
<circle cx="1507" cy="180" r="4.2" fill="#b00000" stroke="#000" stroke-width="1.2"/>
<circle cx="1167" cy="239.2" r="4.2" fill="#00b0b0" stroke="#000" stroke-width="1.2"/>
<circle cx="1342" cy="345" r="4.2" fill="#a000a0" stroke="#000" stroke-width="1.2"/>
<circle cx="1205" cy="481" r="4.2" fill="#0000a0" stroke="#000" stroke-width="1.2"/>
<circle cx="1227.5" cy="226.5" r="4.2" fill="#c8c8c8" stroke="#000" stroke-width="1.2"/>
<circle cx="1229" cy="228.5" r="4.2" fill="#fff" stroke="#000" stroke-width="1.2"/>
<text x="16" y="712" font-size="28" fill="#f2f2f2" textLength="219" lengthAdjust="spacingAndGlyphs">Current Reading</text>
<text x="16" y="781" font-size="25" fill="#f2f2f2">x: 0,3086</text>
<text x="172" y="781" font-size="25" fill="#f2f2f2">y: 0,324</text>
<text x="16" y="822" font-size="25" fill="#f2f2f2">fL: 174,82</text>
<text x="16" y="862" font-size="25" fill="#f2f2f2" textLength="159.5" lengthAdjust="spacingAndGlyphs">cd/m²: 598,97</text>
<text x="468" y="680" font-size="14" fill="#c8c8c8" text-anchor="middle">RGB Balance</text>
<rect x="358.5" y="685.3" width="250.0" height="180.20000000000005" fill="#252525" stroke="#8c8c8c" stroke-width="1.5"/>
<defs><linearGradient id="rbr" x1="0" y1="0" x2="0" y2="1"><stop offset="0" stop-color="#ff5a5a"/><stop offset="1" stop-color="#ff4040"/></linearGradient><linearGradient id="rbg" x1="0" y1="0" x2="0" y2="1"><stop offset="0" stop-color="#5aaa5a"/><stop offset="1" stop-color="#3c9a3c"/></linearGradient><linearGradient id="rbb" x1="0" y1="0" x2="0" y2="1"><stop offset="0" stop-color="#5a5aff"/><stop offset="1" stop-color="#3c3cf0"/></linearGradient></defs>
<line x1="352.5" y1="703.3" x2="608.5" y2="703.3" stroke="#8c8c8c" stroke-width="1.5"/>
<text x="352" y="708.3" font-size="14" fill="#d0d0d0" text-anchor="end">104</text>
<line x1="352.5" y1="739.4" x2="608.5" y2="739.4" stroke="#8c8c8c" stroke-width="1.5"/>
<text x="352" y="744.4" font-size="14" fill="#d0d0d0" text-anchor="end">102</text>
<line x1="352.5" y1="775.4" x2="608.5" y2="775.4" stroke="#8c8c8c" stroke-width="1.5"/>
<text x="352" y="780.4" font-size="14" fill="#d0d0d0" text-anchor="end">100</text>
<line x1="352.5" y1="811.4" x2="608.5" y2="811.4" stroke="#8c8c8c" stroke-width="1.5"/>
<text x="352" y="816.4" font-size="14" fill="#d0d0d0" text-anchor="end">98</text>
<line x1="352.5" y1="847.5" x2="608.5" y2="847.5" stroke="#8c8c8c" stroke-width="1.5"/>
<text x="352" y="852.5" font-size="14" fill="#d0d0d0" text-anchor="end">96</text>
<rect x="383.5" y="786.6" width="65.0" height="78.9" fill="url(#rbr)"/>
<path d="M383.5 865.5 V786.6 H448.5 V865.5" fill="none" stroke="#000" stroke-width="1.6"/>
<rect x="449.5" y="775.9" width="65.0" height="89.6" fill="url(#rbg)"/>
<path d="M449.5 865.5 V775.9 H514.5 V865.5" fill="none" stroke="#000" stroke-width="1.6"/>
<rect x="516" y="742.6" width="65" height="122.9" fill="url(#rbb)"/>
<path d="M516 865.5 V742.6 H581 V865.5" fill="none" stroke="#000" stroke-width="1.6"/>
<line x1="358.5" y1="865.5" x2="358.5" y2="871.5" stroke="#8c8c8c" stroke-width="1.5"/>
<line x1="608.5" y1="865.5" x2="608.5" y2="871.5" stroke="#8c8c8c" stroke-width="1.5"/>
<text x="483" y="881" font-size="14" fill="#d0d0d0" text-anchor="middle">100W</text>
<text x="809" y="671" font-size="14" fill="#c8c8c8" text-anchor="middle">CIE 1931 xy</text>
<defs><clipPath id="xyclip"><rect x="639" y="677" width="340" height="197"/></clipPath><filter id="xybl" x="-20%" y="-20%" width="140%" height="140%"><feGaussianBlur stdDeviation="5"/></filter></defs>
<rect x="638.5" y="676.5" width="341" height="198" fill="#eee" stroke="#9a9a9a" stroke-width="1.5"/>
<g clip-path="url(#xyclip)"><g filter="url(#xybl)"><path fill="#67ffd8" d="M630 668h10v10h-10z"/><path fill="#70ffd7" d="M640 668h10v10h-10z"/><path fill="#78ffd7" d="M650 668h10v10h-10z"/><path fill="#80ffd7" d="M660 668h10v10h-10z"/><path fill="#88ffd7" d="M670 668h10v10h-10z"/><path fill="#8fffd6" d="M680 668h10v10h-10z"/><path fill="#96ffd6" d="M690 668h10v10h-10z"/><path fill="#9cffd6" d="M700 668h10v10h-10z"/><path fill="#a2ffd5" d="M710 668h10v10h-10z"/><path fill="#a8ffd5" d="M720 668h10v10h-10z"/><path fill="#aeffd5" d="M730 668h10v10h-10z"/><path fill="#b4ffd4" d="M740 668h10v10h-10z"/><path fill="#b9ffd4" d="M750 668h10v10h-10z"/><path fill="#bfffd3" d="M760 668h10v10h-10z"/><path fill="#c4ffd3" d="M770 668h10v10h-10z"/><path fill="#c9ffd3" d="M780 668h10v10h-10z"/><path fill="#cfffd2" d="M790 668h10v10h-10z"/><path fill="#d4ffd2" d="M800 668h10v10h-10z"/><path fill="#d8ffd1" d="M810 668h10v10h-10z"/><path fill="#ddffd1" d="M820 668h10v10h-10z"/><path fill="#e2ffd1" d="M830 668h10v10h-10z"/><path fill="#e7ffd0" d="M840 668h10v10h-10z"/><path fill="#ecffd0" d="M850 668h10v10h-10z"/><path fill="#f0ffcf" d="M860 668h10v10h-10z"/><path fill="#f5ffcf" d="M870 668h10v10h-10z"/><path fill="#faffce" d="M880 668h10v10h-10z"/><path fill="#feffce" d="M890 668h10v10h-10z"/><path fill="#fffbca" d="M900 668h10v10h-10z"/><path fill="#fff7c6" d="M910 668h10v10h-10z"/><path fill="#fff3c3" d="M920 668h10v10h-10z"/><path fill="#ffefbf" d="M930 668h10v10h-10z"/><path fill="#ffebbb" d="M940 668h10v10h-10z"/><path fill="#ffe7b8" d="M950 668h10v10h-10z"/><path fill="#ffe4b4" d="M960 668h10v10h-10z"/><path fill="#ffe0b1" d="M970 668h10v10h-10z"/><path fill="#ffddae" d="M980 668h10v10h-10z"/><path fill="#ffd9ab" d="M990 668h10v10h-10z"/><path fill="#6bffdb" d="M630 678h10v10h-10z"/><path fill="#74ffdb" d="M640 678h10v10h-10z"/><path fill="#7dffdb" d="M650 678h10v10h-10z"/><path fill="#84ffda" d="M660 678h10v10h-10z"/><path fill="#8cffda" d="M670 678h10v10h-10z"/><path fill="#93ffda" d="M680 678h10v10h-10z"/><path fill="#99ffda" d="M690 678h10v10h-10z"/><path fill="#a0ffd9" d="M700 678h10v10h-10z"/><path fill="#a6ffd9" d="M710 678h10v10h-10z"/><path fill="#acffd9" d="M720 678h10v10h-10z"/><path fill="#b2ffd8" d="M730 678h10v10h-10z"/><path fill="#b8ffd8" d="M740 678h10v10h-10z"/><path fill="#bdffd8" d="M750 678h10v10h-10z"/><path fill="#c3ffd7" d="M760 678h10v10h-10z"/><path fill="#c8ffd7" d="M770 678h10v10h-10z"/><path fill="#cdffd7" d="M780 678h10v10h-10z"/><path fill="#d2ffd6" d="M790 678h10v10h-10z"/><path fill="#d7ffd6" d="M800 678h10v10h-10z"/><path fill="#dcffd6" d="M810 678h10v10h-10z"/><path fill="#e1ffd5" d="M820 678h10v10h-10z"/><path fill="#e6ffd5" d="M830 678h10v10h-10z"/><path fill="#ebffd4" d="M840 678h10v10h-10z"/><path fill="#f0ffd4" d="M850 678h10v10h-10z"/><path fill="#f4ffd4" d="M860 678h10v10h-10z"/><path fill="#f9ffd3" d="M870 678h10v10h-10z"/><path fill="#feffd3" d="M880 678h10v10h-10z"/><path fill="#fffcd0" d="M890 678h10v10h-10z"/><path fill="#fff7cc" d="M900 678h10v10h-10z"/><path fill="#fff3c8" d="M910 678h10v10h-10z"/><path fill="#ffefc4" d="M920 678h10v10h-10z"/><path fill="#ffebc0" d="M930 678h10v10h-10z"/><path fill="#ffe7bd" d="M940 678h10v10h-10z"/><path fill="#ffe4b9" d="M950 678h10v10h-10z"/><path fill="#ffe0b6" d="M960 678h10v10h-10z"/><path fill="#ffddb2" d="M970 678h10v10h-10z"/><path fill="#ffd9af" d="M980 678h10v10h-10z"/><path fill="#ffd6ac" d="M990 678h10v10h-10z"/><path fill="#70ffdf" d="M630 688h10v10h-10z"/><path fill="#78ffdf" d="M640 688h10v10h-10z"/><path fill="#81ffde" d="M650 688h10v10h-10z"/><path fill="#88ffde" d="M660 688h10v10h-10z"/><path fill="#90ffde" d="M670 688h10v10h-10z"/><path fill="#97ffde" d="M680 688h10v10h-10z"/><path fill="#9dffdd" d="M690 688h10v10h-10z"/><path fill="#a4ffdd" d="M700 688h10v10h-10z"/><path fill="#aaffdd" d="M710 688h10v10h-10z"/><path fill="#b0ffdd" d="M720 688h10v10h-10z"/><path fill="#b6ffdc" d="M730 688h10v10h-10z"/><path fill="#bbffdc" d="M740 688h10v10h-10z"/><path fill="#c1ffdc" d="M750 688h10v10h-10z"/><path fill="#c6ffdb" d="M760 688h10v10h-10z"/><path fill="#ccffdb" d="M770 688h10v10h-10z"/><path fill="#d1ffdb" d="M780 688h10v10h-10z"/><path fill="#d6ffda" d="M790 688h10v10h-10z"/><path fill="#dbffda" d="M800 688h10v10h-10z"/><path fill="#e0ffda" d="M810 688h10v10h-10z"/><path fill="#e5ffd9" d="M820 688h10v10h-10z"/><path fill="#eaffd9" d="M830 688h10v10h-10z"/><path fill="#efffd9" d="M840 688h10v10h-10z"/><path fill="#f3ffd8" d="M850 688h10v10h-10z"/><path fill="#f8ffd8" d="M860 688h10v10h-10z"/><path fill="#fdffd8" d="M870 688h10v10h-10z"/><path fill="#fffcd5" d="M880 688h10v10h-10z"/><path fill="#fff8d1" d="M890 688h10v10h-10z"/><path fill="#fff4cd" d="M900 688h10v10h-10z"/><path fill="#ffefc9" d="M910 688h10v10h-10z"/><path fill="#ffebc5" d="M920 688h10v10h-10z"/><path fill="#ffe8c1" d="M930 688h10v10h-10z"/><path fill="#ffe4be" d="M940 688h10v10h-10z"/><path fill="#ffe0ba" d="M950 688h10v10h-10z"/><path fill="#ffddb7" d="M960 688h10v10h-10z"/><path fill="#ffd9b4" d="M970 688h10v10h-10z"/><path fill="#ffd6b1" d="M980 688h10v10h-10z"/><path fill="#ffd3ae" d="M990 688h10v10h-10z"/><path fill="#74ffe3" d="M630 698h10v10h-10z"/><path fill="#7dffe2" d="M640 698h10v10h-10z"/><path fill="#85ffe2" d="M650 698h10v10h-10z"/><path fill="#8cffe2" d="M660 698h10v10h-10z"/><path fill="#94ffe2" d="M670 698h10v10h-10z"/><path fill="#9affe1" d="M680 698h10v10h-10z"/><path fill="#a1ffe1" d="M690 698h10v10h-10z"/><path fill="#a7ffe1" d="M700 698h10v10h-10z"/><path fill="#adffe1" d="M710 698h10v10h-10z"/><path fill="#b3ffe0" d="M720 698h10v10h-10z"/><path fill="#b9ffe0" d="M730 698h10v10h-10z"/><path fill="#bfffe0" d="M740 698h10v10h-10z"/><path fill="#c4ffe0" d="M750 698h10v10h-10z"/><path fill="#caffdf" d="M760 698h10v10h-10z"/><path fill="#cfffdf" d="M770 698h10v10h-10z"/><path fill="#d5ffdf" d="M780 698h10v10h-10z"/><path fill="#daffdf" d="M790 698h10v10h-10z"/><path fill="#dfffde" d="M800 698h10v10h-10z"/><path fill="#e4ffde" d="M810 698h10v10h-10z"/><path fill="#e9ffde" d="M820 698h10v10h-10z"/><path fill="#eeffdd" d="M830 698h10v10h-10z"/><path fill="#f3ffdd" d="M840 698h10v10h-10z"/><path fill="#f7ffdd" d="M850 698h10v10h-10z"/><path fill="#fcffdc" d="M860 698h10v10h-10z"/><path fill="#fffdda" d="M870 698h10v10h-10z"/><path fill="#fff8d6" d="M880 698h10v10h-10z"/><path fill="#fff4d2" d="M890 698h10v10h-10z"/><path fill="#fff0ce" d="M900 698h10v10h-10z"/><path fill="#ffecca" d="M910 698h10v10h-10z"/><path fill="#ffe8c6" d="M920 698h10v10h-10z"/><path fill="#ffe4c3" d="M930 698h10v10h-10z"/><path fill="#ffe0bf" d="M940 698h10v10h-10z"/><path fill="#ffddbc" d="M950 698h10v10h-10z"/><path fill="#ffd9b8" d="M960 698h10v10h-10z"/><path fill="#ffd6b5" d="M970 698h10v10h-10z"/><path fill="#ffd3b2" d="M980 698h10v10h-10z"/><path fill="#ffd0af" d="M990 698h10v10h-10z"/><path fill="#79ffe6" d="M630 708h10v10h-10z"/><path fill="#81ffe6" d="M640 708h10v10h-10z"/><path fill="#89ffe6" d="M650 708h10v10h-10z"/><path fill="#90ffe6" d="M660 708h10v10h-10z"/><path fill="#97ffe6" d="M670 708h10v10h-10z"/><path fill="#9effe5" d="M680 708h10v10h-10z"/><path fill="#a5ffe5" d="M690 708h10v10h-10z"/><path fill="#abffe5" d="M700 708h10v10h-10z"/><path fill="#b1ffe5" d="M710 708h10v10h-10z"/><path fill="#b7ffe4" d="M720 708h10v10h-10z"/><path fill="#bdffe4" d="M730 708h10v10h-10z"/><path fill="#c3ffe4" d="M740 708h10v10h-10z"/><path fill="#c8ffe4" d="M750 708h10v10h-10z"/><path fill="#ceffe4" d="M760 708h10v10h-10z"/><path fill="#d3ffe3" d="M770 708h10v10h-10z"/><path fill="#d8ffe3" d="M780 708h10v10h-10z"/><path fill="#deffe3" d="M790 708h10v10h-10z"/><path fill="#e3ffe3" d="M800 708h10v10h-10z"/><path fill="#e8ffe2" d="M810 708h10v10h-10z"/><path fill="#edffe2" d="M820 708h10v10h-10z"/><path fill="#f2ffe2" d="M830 708h10v10h-10z"/><path fill="#f7ffe1" d="M840 708h10v10h-10z"/><path fill="#fcffe1" d="M850 708h10v10h-10z"/><path fill="#fffee0" d="M860 708h10v10h-10z"/><path fill="#fff9db" d="M870 708h10v10h-10z"/><path fill="#fff4d7" d="M880 708h10v10h-10z"/><path fill="#fff0d3" d="M890 708h10v10h-10z"/><path fill="#ffeccf" d="M900 708h10v10h-10z"/><path fill="#ffe8cb" d="M910 708h10v10h-10z"/><path fill="#ffe4c7" d="M920 708h10v10h-10z"/><path fill="#ffe0c4" d="M930 708h10v10h-10z"/><path fill="#ffddc0" d="M940 708h10v10h-10z"/><path fill="#ffd9bd" d="M950 708h10v10h-10z"/><path fill="#ffd6ba" d="M960 708h10v10h-10z"/><path fill="#ffd3b6" d="M970 708h10v10h-10z"/><path fill="#ffcfb3" d="M980 708h10v10h-10z"/><path fill="#ffccb0" d="M990 708h10v10h-10z"/><path fill="#7dffea" d="M630 718h10v10h-10z"/><path fill="#85ffea" d="M640 718h10v10h-10z"/><path fill="#8dffea" d="M650 718h10v10h-10z"/><path fill="#94ffea" d="M660 718h10v10h-10z"/><path fill="#9bffe9" d="M670 718h10v10h-10z"/><path fill="#a2ffe9" d="M680 718h10v10h-10z"/><path fill="#a9ffe9" d="M690 718h10v10h-10z"/><path fill="#afffe9" d="M700 718h10v10h-10z"/><path fill="#b5ffe9" d="M710 718h10v10h-10z"/><path fill="#bbffe9" d="M720 718h10v10h-10z"/><path fill="#c1ffe8" d="M730 718h10v10h-10z"/><path fill="#c7ffe8" d="M740 718h10v10h-10z"/><path fill="#ccffe8" d="M750 718h10v10h-10z"/><path fill="#d2ffe8" d="M760 718h10v10h-10z"/><path fill="#d7ffe8" d="M770 718h10v10h-10z"/><path fill="#dcffe7" d="M780 718h10v10h-10z"/><path fill="#e2ffe7" d="M790 718h10v10h-10z"/><path fill="#e7ffe7" d="M800 718h10v10h-10z"/><path fill="#ecffe7" d="M810 718h10v10h-10z"/><path fill="#f1ffe6" d="M820 718h10v10h-10z"/><path fill="#f6ffe6" d="M830 718h10v10h-10z"/><path fill="#fbffe6" d="M840 718h10v10h-10z"/><path fill="#fffee5" d="M850 718h10v10h-10z"/><path fill="#fff9e0" d="M860 718h10v10h-10z"/><path fill="#fff5dc" d="M870 718h10v10h-10z"/><path fill="#fff0d8" d="M880 718h10v10h-10z"/><path fill="#ffecd4" d="M890 718h10v10h-10z"/><path fill="#ffe8d0" d="M900 718h10v10h-10z"/><path fill="#ffe4cc" d="M910 718h10v10h-10z"/><path fill="#ffe0c8" d="M920 718h10v10h-10z"/><path fill="#ffddc5" d="M930 718h10v10h-10z"/><path fill="#ffd9c1" d="M940 718h10v10h-10z"/><path fill="#ffd6be" d="M950 718h10v10h-10z"/><path fill="#ffd2bb" d="M960 718h10v10h-10z"/><path fill="#ffcfb8" d="M970 718h10v10h-10z"/><path fill="#ffccb5" d="M980 718h10v10h-10z"/><path fill="#ffc9b2" d="M990 718h10v10h-10z"/><path fill="#81ffee" d="M630 728h10v10h-10z"/><path fill="#89ffee" d="M640 728h10v10h-10z"/><path fill="#91ffee" d="M650 728h10v10h-10z"/><path fill="#98ffee" d="M660 728h10v10h-10z"/><path fill="#9fffed" d="M670 728h10v10h-10z"/><path fill="#a6ffed" d="M680 728h10v10h-10z"/><path fill="#adffed" d="M690 728h10v10h-10z"/><path fill="#b3ffed" d="M700 728h10v10h-10z"/><path fill="#b9ffed" d="M710 728h10v10h-10z"/><path fill="#bfffed" d="M720 728h10v10h-10z"/><path fill="#c5ffed" d="M730 728h10v10h-10z"/><path fill="#cbffec" d="M740 728h10v10h-10z"/><path fill="#d0ffec" d="M750 728h10v10h-10z"/><path fill="#d6ffec" d="M760 728h10v10h-10z"/><path fill="#dbffec" d="M770 728h10v10h-10z"/><path fill="#e0ffec" d="M780 728h10v10h-10z"/><path fill="#e6ffec" d="M790 728h10v10h-10z"/><path fill="#ebffeb" d="M800 728h10v10h-10z"/><path fill="#f0ffeb" d="M810 728h10v10h-10z"/><path fill="#f5ffeb" d="M820 728h10v10h-10z"/><path fill="#faffeb" d="M830 728h10v10h-10z"/><path fill="#ffffeb" d="M840 728h10v10h-10z"/><path fill="#fffae6" d="M850 728h10v10h-10z"/><path fill="#fff5e1" d="M860 728h10v10h-10z"/><path fill="#fff1dd" d="M870 728h10v10h-10z"/><path fill="#ffedd9" d="M880 728h10v10h-10z"/><path fill="#ffe8d5" d="M890 728h10v10h-10z"/><path fill="#ffe4d1" d="M900 728h10v10h-10z"/><path fill="#ffe0cd" d="M910 728h10v10h-10z"/><path fill="#ffddc9" d="M920 728h10v10h-10z"/><path fill="#ffd9c6" d="M930 728h10v10h-10z"/><path fill="#ffd6c3" d="M940 728h10v10h-10z"/><path fill="#ffd2bf" d="M950 728h10v10h-10z"/><path fill="#ffcfbc" d="M960 728h10v10h-10z"/><path fill="#ffccb9" d="M970 728h10v10h-10z"/><path fill="#ffc9b6" d="M980 728h10v10h-10z"/><path fill="#ffc6b3" d="M990 728h10v10h-10z"/><path fill="#86fff2" d="M630 738h10v10h-10z"/><path fill="#8efff2" d="M640 738h10v10h-10z"/><path fill="#95fff2" d="M650 738h10v10h-10z"/><path fill="#9dfff2" d="M660 738h10v10h-10z"/><path fill="#a4fff1" d="M670 738h10v10h-10z"/><path fill="#aafff1" d="M680 738h10v10h-10z"/><path fill="#b1fff1" d="M690 738h10v10h-10z"/><path fill="#b7fff1" d="M700 738h10v10h-10z"/><path fill="#bdfff1" d="M710 738h10v10h-10z"/><path fill="#c3fff1" d="M720 738h10v10h-10z"/><path fill="#c9fff1" d="M730 738h10v10h-10z"/><path fill="#cffff1" d="M740 738h10v10h-10z"/><path fill="#d4fff1" d="M750 738h10v10h-10z"/><path fill="#dafff0" d="M760 738h10v10h-10z"/><path fill="#dffff0" d="M770 738h10v10h-10z"/><path fill="#e4fff0" d="M780 738h10v10h-10z"/><path fill="#eafff0" d="M790 738h10v10h-10z"/><path fill="#effff0" d="M800 738h10v10h-10z"/><path fill="#f4fff0" d="M810 738h10v10h-10z"/><path fill="#f9fff0" d="M820 738h10v10h-10z"/><path fill="#feffef" d="M830 738h10v10h-10z"/><path fill="#fffbeb" d="M840 738h10v10h-10z"/><path fill="#fff6e7" d="M850 738h10v10h-10z"/><path fill="#fff1e2" d="M860 738h10v10h-10z"/><path fill="#ffedde" d="M870 738h10v10h-10z"/><path fill="#ffe9da" d="M880 738h10v10h-10z"/><path fill="#ffe4d6" d="M890 738h10v10h-10z"/><path fill="#ffe1d2" d="M900 738h10v10h-10z"/><path fill="#ffddce" d="M910 738h10v10h-10z"/><path fill="#ffd9cb" d="M920 738h10v10h-10z"/><path fill="#ffd6c7" d="M930 738h10v10h-10z"/><path fill="#ffd2c4" d="M940 738h10v10h-10z"/><path fill="#ffcfc0" d="M950 738h10v10h-10z"/><path fill="#ffcbbd" d="M960 738h10v10h-10z"/><path fill="#ffc8ba" d="M970 738h10v10h-10z"/><path fill="#ffc5b7" d="M980 738h10v10h-10z"/><path fill="#ffc2b4" d="M990 738h10v10h-10z"/><path fill="#8afff6" d="M630 748h10v10h-10z"/><path fill="#92fff6" d="M640 748h10v10h-10z"/><path fill="#9afff6" d="M650 748h10v10h-10z"/><path fill="#a1fff6" d="M660 748h10v10h-10z"/><path fill="#a8fff6" d="M670 748h10v10h-10z"/><path fill="#aefff6" d="M680 748h10v10h-10z"/><path fill="#b5fff5" d="M690 748h10v10h-10z"/><path fill="#bbfff5" d="M700 748h10v10h-10z"/><path fill="#c1fff5" d="M710 748h10v10h-10z"/><path fill="#c7fff5" d="M720 748h10v10h-10z"/><path fill="#cdfff5" d="M730 748h10v10h-10z"/><path fill="#d3fff5" d="M740 748h10v10h-10z"/><path fill="#d8fff5" d="M750 748h10v10h-10z"/><path fill="#defff5" d="M760 748h10v10h-10z"/><path fill="#e3fff5" d="M770 748h10v10h-10z"/><path fill="#e9fff5" d="M780 748h10v10h-10z"/><path fill="#eefff5" d="M790 748h10v10h-10z"/><path fill="#f3fff5" d="M800 748h10v10h-10z"/><path fill="#f9fff4" d="M810 748h10v10h-10z"/><path fill="#fefff4" d="M820 748h10v10h-10z"/><path fill="#fffbf1" d="M830 748h10v10h-10z"/><path fill="#fff6ec" d="M840 748h10v10h-10z"/><path fill="#fff2e7" d="M850 748h10v10h-10z"/><path fill="#ffede3" d="M860 748h10v10h-10z"/><path fill="#ffe9df" d="M870 748h10v10h-10z"/><path fill="#ffe5db" d="M880 748h10v10h-10z"/><path fill="#ffe1d7" d="M890 748h10v10h-10z"/><path fill="#ffddd3" d="M900 748h10v10h-10z"/><path fill="#ffd9cf" d="M910 748h10v10h-10z"/><path fill="#ffd5cc" d="M920 748h10v10h-10z"/><path fill="#ffd2c8" d="M930 748h10v10h-10z"/><path fill="#ffcec5" d="M940 748h10v10h-10z"/><path fill="#ffcbc1" d="M950 748h10v10h-10z"/><path fill="#ffc8be" d="M960 748h10v10h-10z"/><path fill="#ffc5bb" d="M970 748h10v10h-10z"/><path fill="#ffc2b8" d="M980 748h10v10h-10z"/><path fill="#ffbfb5" d="M990 748h10v10h-10z"/><path fill="#8ffffa" d="M630 758h10v10h-10z"/><path fill="#96fffa" d="M640 758h10v10h-10z"/><path fill="#9efffa" d="M650 758h10v10h-10z"/><path fill="#a5fffa" d="M660 758h10v10h-10z"/><path fill="#acfffa" d="M670 758h10v10h-10z"/><path fill="#b2fffa" d="M680 758h10v10h-10z"/><path fill="#b9fffa" d="M690 758h10v10h-10z"/><path fill="#bffffa" d="M700 758h10v10h-10z"/><path fill="#c5fffa" d="M710 758h10v10h-10z"/><path fill="#cbfffa" d="M720 758h10v10h-10z"/><path fill="#d1fffa" d="M730 758h10v10h-10z"/><path fill="#d7fffa" d="M740 758h10v10h-10z"/><path fill="#ddfffa" d="M750 758h10v10h-10z"/><path fill="#e2fffa" d="M760 758h10v10h-10z"/><path fill="#e8fffa" d="M770 758h10v10h-10z"/><path fill="#edfff9" d="M780 758h10v10h-10z"/><path fill="#f2fff9" d="M790 758h10v10h-10z"/><path fill="#f8fff9" d="M800 758h10v10h-10z"/><path fill="#fdfff9" d="M810 758h10v10h-10z"/><path fill="#fffcf6" d="M820 758h10v10h-10z"/><path fill="#fff7f1" d="M830 758h10v10h-10z"/><path fill="#fff2ec" d="M840 758h10v10h-10z"/><path fill="#ffede8" d="M850 758h10v10h-10z"/><path fill="#ffe9e4" d="M860 758h10v10h-10z"/><path fill="#ffe5df" d="M870 758h10v10h-10z"/><path fill="#ffe1db" d="M880 758h10v10h-10z"/><path fill="#ffddd7" d="M890 758h10v10h-10z"/><path fill="#ffd9d4" d="M900 758h10v10h-10z"/><path fill="#ffd5d0" d="M910 758h10v10h-10z"/><path fill="#ffd2cc" d="M920 758h10v10h-10z"/><path fill="#ffcec9" d="M930 758h10v10h-10z"/><path fill="#ffcbc6" d="M940 758h10v10h-10z"/><path fill="#ffc8c3" d="M950 758h10v10h-10z"/><path fill="#ffc4bf" d="M960 758h10v10h-10z"/><path fill="#ffc1bc" d="M970 758h10v10h-10z"/><path fill="#ffbeb9" d="M980 758h10v10h-10z"/><path fill="#ffbbb6" d="M990 758h10v10h-10z"/><path fill="#93fffe" d="M630 768h10v10h-10z"/><path fill="#9bfffe" d="M640 768h10v10h-10z"/><path fill="#a2fffe" d="M650 768h10v10h-10z"/><path fill="#a9fffe" d="M660 768h10v10h-10z"/><path fill="#b0fffe" d="M670 768h10v10h-10z"/><path fill="#b7fffe" d="M680 768h10v10h-10z"/><path fill="#bdfffe" d="M690 768h10v10h-10z"/><path fill="#c3fffe" d="M700 768h10v10h-10z"/><path fill="#c9fffe" d="M710 768h10v10h-10z"/><path fill="#cffffe" d="M720 768h10v10h-10z"/><path fill="#d5fffe" d="M730 768h10v10h-10z"/><path fill="#dbfffe" d="M740 768h10v10h-10z"/><path fill="#e1fffe" d="M750 768h10v10h-10z"/><path fill="#e6fffe" d="M760 768h10v10h-10z"/><path fill="#ecfffe" d="M770 768h10v10h-10z"/><path fill="#f1fffe" d="M780 768h10v10h-10z"/><path fill="#f7fffe" d="M790 768h10v10h-10z"/><path fill="#fcfffe" d="M800 768h10v10h-10z"/><path fill="#fffcfc" d="M810 768h10v10h-10z"/><path fill="#fff7f7" d="M820 768h10v10h-10z"/><path fill="#fff2f2" d="M830 768h10v10h-10z"/><path fill="#ffeeed" d="M840 768h10v10h-10z"/><path fill="#ffe9e9" d="M850 768h10v10h-10z"/><path fill="#ffe5e4" d="M860 768h10v10h-10z"/><path fill="#ffe1e0" d="M870 768h10v10h-10z"/><path fill="#ffdddc" d="M880 768h10v10h-10z"/><path fill="#ffd9d8" d="M890 768h10v10h-10z"/><path fill="#ffd5d5" d="M900 768h10v10h-10z"/><path fill="#ffd2d1" d="M910 768h10v10h-10z"/><path fill="#ffcecd" d="M920 768h10v10h-10z"/><path fill="#ffcbca" d="M930 768h10v10h-10z"/><path fill="#ffc7c7" d="M940 768h10v10h-10z"/><path fill="#ffc4c4" d="M950 768h10v10h-10z"/><path fill="#ffc1c0" d="M960 768h10v10h-10z"/><path fill="#ffbebd" d="M970 768h10v10h-10z"/><path fill="#ffbbba" d="M980 768h10v10h-10z"/><path fill="#ffb8b8" d="M990 768h10v10h-10z"/><path fill="#95fcff" d="M630 778h10v10h-10z"/><path fill="#9dfbff" d="M640 778h10v10h-10z"/><path fill="#a4fbff" d="M650 778h10v10h-10z"/><path fill="#abfbff" d="M660 778h10v10h-10z"/><path fill="#b2fbff" d="M670 778h10v10h-10z"/><path fill="#b8fbff" d="M680 778h10v10h-10z"/><path fill="#befbff" d="M690 778h10v10h-10z"/><path fill="#c5fbff" d="M700 778h10v10h-10z"/><path fill="#cbfbff" d="M710 778h10v10h-10z"/><path fill="#d1fbff" d="M720 778h10v10h-10z"/><path fill="#d6fbff" d="M730 778h10v10h-10z"/><path fill="#dcfbff" d="M740 778h10v10h-10z"/><path fill="#e2fbff" d="M750 778h10v10h-10z"/><path fill="#e7fbff" d="M760 778h10v10h-10z"/><path fill="#edfbff" d="M770 778h10v10h-10z"/><path fill="#f2fbff" d="M780 778h10v10h-10z"/><path fill="#f7fbff" d="M790 778h10v10h-10z"/><path fill="#fdfbff" d="M800 778h10v10h-10z"/><path fill="#fff8fc" d="M810 778h10v10h-10z"/><path fill="#fff3f7" d="M820 778h10v10h-10z"/><path fill="#ffeef2" d="M830 778h10v10h-10z"/><path fill="#ffe9ee" d="M840 778h10v10h-10z"/><path fill="#ffe5e9" d="M850 778h10v10h-10z"/><path fill="#ffe1e5" d="M860 778h10v10h-10z"/><path fill="#ffdde1" d="M870 778h10v10h-10z"/><path fill="#ffd9dd" d="M880 778h10v10h-10z"/><path fill="#ffd5d9" d="M890 778h10v10h-10z"/><path fill="#ffd1d5" d="M900 778h10v10h-10z"/><path fill="#ffced2" d="M910 778h10v10h-10z"/><path fill="#ffcace" d="M920 778h10v10h-10z"/><path fill="#ffc7cb" d="M930 778h10v10h-10z"/><path fill="#ffc4c8" d="M940 778h10v10h-10z"/><path fill="#ffc1c5" d="M950 778h10v10h-10z"/><path fill="#ffbdc1" d="M960 778h10v10h-10z"/><path fill="#ffbabe" d="M970 778h10v10h-10z"/><path fill="#ffb7bc" d="M980 778h10v10h-10z"/><path fill="#ffb5b9" d="M990 778h10v10h-10z"/><path fill="#97f7ff" d="M630 788h10v10h-10z"/><path fill="#9ef7ff" d="M640 788h10v10h-10z"/><path fill="#a5f7ff" d="M650 788h10v10h-10z"/><path fill="#acf7ff" d="M660 788h10v10h-10z"/><path fill="#b3f7ff" d="M670 788h10v10h-10z"/><path fill="#b9f7ff" d="M680 788h10v10h-10z"/><path fill="#bff7ff" d="M690 788h10v10h-10z"/><path fill="#c5f7ff" d="M700 788h10v10h-10z"/><path fill="#cbf7ff" d="M710 788h10v10h-10z"/><path fill="#d1f7ff" d="M720 788h10v10h-10z"/><path fill="#d7f6ff" d="M730 788h10v10h-10z"/><path fill="#dcf6ff" d="M740 788h10v10h-10z"/><path fill="#e2f6ff" d="M750 788h10v10h-10z"/><path fill="#e7f6ff" d="M760 788h10v10h-10z"/><path fill="#edf6ff" d="M770 788h10v10h-10z"/><path fill="#f2f6ff" d="M780 788h10v10h-10z"/><path fill="#f7f6ff" d="M790 788h10v10h-10z"/><path fill="#fcf6ff" d="M800 788h10v10h-10z"/><path fill="#fff3fc" d="M810 788h10v10h-10z"/><path fill="#ffeef8" d="M820 788h10v10h-10z"/><path fill="#ffeaf3" d="M830 788h10v10h-10z"/><path fill="#ffe5ee" d="M840 788h10v10h-10z"/><path fill="#ffe1ea" d="M850 788h10v10h-10z"/><path fill="#ffdde6" d="M860 788h10v10h-10z"/><path fill="#ffd9e2" d="M870 788h10v10h-10z"/><path fill="#ffd5de" d="M880 788h10v10h-10z"/><path fill="#ffd1da" d="M890 788h10v10h-10z"/><path fill="#ffcdd6" d="M900 788h10v10h-10z"/><path fill="#ffcad3" d="M910 788h10v10h-10z"/><path fill="#ffc7cf" d="M920 788h10v10h-10z"/><path fill="#ffc3cc" d="M930 788h10v10h-10z"/><path fill="#ffc0c9" d="M940 788h10v10h-10z"/><path fill="#ffbdc6" d="M950 788h10v10h-10z"/><path fill="#ffbac2" d="M960 788h10v10h-10z"/><path fill="#ffb7c0" d="M970 788h10v10h-10z"/><path fill="#ffb4bd" d="M980 788h10v10h-10z"/><path fill="#ffb1ba" d="M990 788h10v10h-10z"/><path fill="#99f3ff" d="M630 798h10v10h-10z"/><path fill="#a0f3ff" d="M640 798h10v10h-10z"/><path fill="#a7f3ff" d="M650 798h10v10h-10z"/><path fill="#adf3ff" d="M660 798h10v10h-10z"/><path fill="#b4f3ff" d="M670 798h10v10h-10z"/><path fill="#baf3ff" d="M680 798h10v10h-10z"/><path fill="#c0f2ff" d="M690 798h10v10h-10z"/><path fill="#c6f2ff" d="M700 798h10v10h-10z"/><path fill="#ccf2ff" d="M710 798h10v10h-10z"/><path fill="#d1f2ff" d="M720 798h10v10h-10z"/><path fill="#d7f2ff" d="M730 798h10v10h-10z"/><path fill="#dcf2ff" d="M740 798h10v10h-10z"/><path fill="#e2f2ff" d="M750 798h10v10h-10z"/><path fill="#e7f2ff" d="M760 798h10v10h-10z"/><path fill="#edf1ff" d="M770 798h10v10h-10z"/><path fill="#f2f1ff" d="M780 798h10v10h-10z"/><path fill="#f7f1ff" d="M790 798h10v10h-10z"/><path fill="#fcf1ff" d="M800 798h10v10h-10z"/><path fill="#ffeffd" d="M810 798h10v10h-10z"/><path fill="#ffeaf8" d="M820 798h10v10h-10z"/><path fill="#ffe5f3" d="M830 798h10v10h-10z"/><path fill="#ffe1ef" d="M840 798h10v10h-10z"/><path fill="#ffddea" d="M850 798h10v10h-10z"/><path fill="#ffd9e6" d="M860 798h10v10h-10z"/><path fill="#ffd5e2" d="M870 798h10v10h-10z"/><path fill="#ffd1de" d="M880 798h10v10h-10z"/><path fill="#ffcddb" d="M890 798h10v10h-10z"/><path fill="#ffcad7" d="M900 798h10v10h-10z"/><path fill="#ffc6d4" d="M910 798h10v10h-10z"/><path fill="#ffc3d0" d="M920 798h10v10h-10z"/><path fill="#ffc0cd" d="M930 798h10v10h-10z"/><path fill="#ffbcca" d="M940 798h10v10h-10z"/><path fill="#ffb9c7" d="M950 798h10v10h-10z"/><path fill="#ffb6c3" d="M960 798h10v10h-10z"/><path fill="#ffb3c1" d="M970 798h10v10h-10z"/><path fill="#ffb1be" d="M980 798h10v10h-10z"/><path fill="#ffaebb" d="M990 798h10v10h-10z"/><path fill="#9aefff" d="M630 808h10v10h-10z"/><path fill="#a1efff" d="M640 808h10v10h-10z"/><path fill="#a8efff" d="M650 808h10v10h-10z"/><path fill="#aeefff" d="M660 808h10v10h-10z"/><path fill="#b5eeff" d="M670 808h10v10h-10z"/><path fill="#bbeeff" d="M680 808h10v10h-10z"/><path fill="#c1eeff" d="M690 808h10v10h-10z"/><path fill="#c7eeff" d="M700 808h10v10h-10z"/><path fill="#cceeff" d="M710 808h10v10h-10z"/><path fill="#d2eeff" d="M720 808h10v10h-10z"/><path fill="#d7edff" d="M730 808h10v10h-10z"/><path fill="#ddedff" d="M740 808h10v10h-10z"/><path fill="#e2edff" d="M750 808h10v10h-10z"/><path fill="#e7edff" d="M760 808h10v10h-10z"/><path fill="#ededff" d="M770 808h10v10h-10z"/><path fill="#f2ecff" d="M780 808h10v10h-10z"/><path fill="#f7ecff" d="M790 808h10v10h-10z"/><path fill="#fcecff" d="M800 808h10v10h-10z"/><path fill="#ffeafd" d="M810 808h10v10h-10z"/><path fill="#ffe6f8" d="M820 808h10v10h-10z"/><path fill="#ffe1f4" d="M830 808h10v10h-10z"/><path fill="#ffddef" d="M840 808h10v10h-10z"/><path fill="#ffd9eb" d="M850 808h10v10h-10z"/><path fill="#ffd5e7" d="M860 808h10v10h-10z"/><path fill="#ffd1e3" d="M870 808h10v10h-10z"/><path fill="#ffcddf" d="M880 808h10v10h-10z"/><path fill="#ffc9db" d="M890 808h10v10h-10z"/><path fill="#ffc6d8" d="M900 808h10v10h-10z"/><path fill="#ffc2d4" d="M910 808h10v10h-10z"/><path fill="#ffbfd1" d="M920 808h10v10h-10z"/><path fill="#ffbcce" d="M930 808h10v10h-10z"/><path fill="#ffb9cb" d="M940 808h10v10h-10z"/><path fill="#ffb6c7" d="M950 808h10v10h-10z"/><path fill="#ffb3c4" d="M960 808h10v10h-10z"/><path fill="#ffb0c1" d="M970 808h10v10h-10z"/><path fill="#ffadbf" d="M980 808h10v10h-10z"/><path fill="#ffaabc" d="M990 808h10v10h-10z"/><path fill="#9cebff" d="M630 818h10v10h-10z"/><path fill="#a3ebff" d="M640 818h10v10h-10z"/><path fill="#a9eaff" d="M650 818h10v10h-10z"/><path fill="#afeaff" d="M660 818h10v10h-10z"/><path fill="#b6eaff" d="M670 818h10v10h-10z"/><path fill="#bceaff" d="M680 818h10v10h-10z"/><path fill="#c1eaff" d="M690 818h10v10h-10z"/><path fill="#c7eaff" d="M700 818h10v10h-10z"/><path fill="#cde9ff" d="M710 818h10v10h-10z"/><path fill="#d2e9ff" d="M720 818h10v10h-10z"/><path fill="#d8e9ff" d="M730 818h10v10h-10z"/><path fill="#dde9ff" d="M740 818h10v10h-10z"/><path fill="#e2e8ff" d="M750 818h10v10h-10z"/><path fill="#e7e8ff" d="M760 818h10v10h-10z"/><path fill="#ece8ff" d="M770 818h10v10h-10z"/><path fill="#f2e8ff" d="M780 818h10v10h-10z"/><path fill="#f7e8ff" d="M790 818h10v10h-10z"/><path fill="#fce7ff" d="M800 818h10v10h-10z"/><path fill="#ffe6fe" d="M810 818h10v10h-10z"/><path fill="#ffe1f9" d="M820 818h10v10h-10z"/><path fill="#ffddf4" d="M830 818h10v10h-10z"/><path fill="#ffd9f0" d="M840 818h10v10h-10z"/><path fill="#ffd4ec" d="M850 818h10v10h-10z"/><path fill="#ffd0e8" d="M860 818h10v10h-10z"/><path fill="#ffcde4" d="M870 818h10v10h-10z"/><path fill="#ffc9e0" d="M880 818h10v10h-10z"/><path fill="#ffc5dc" d="M890 818h10v10h-10z"/><path fill="#ffc2d9" d="M900 818h10v10h-10z"/><path fill="#ffbfd5" d="M910 818h10v10h-10z"/><path fill="#ffbbd2" d="M920 818h10v10h-10z"/><path fill="#ffb8cf" d="M930 818h10v10h-10z"/><path fill="#ffb5cb" d="M940 818h10v10h-10z"/><path fill="#ffb2c8" d="M950 818h10v10h-10z"/><path fill="#ffafc5" d="M960 818h10v10h-10z"/><path fill="#ffacc2" d="M970 818h10v10h-10z"/><path fill="#ffa9c0" d="M980 818h10v10h-10z"/><path fill="#ffa7bd" d="M990 818h10v10h-10z"/><path fill="#9de7ff" d="M630 828h10v10h-10z"/><path fill="#a4e7ff" d="M640 828h10v10h-10z"/><path fill="#aae6ff" d="M650 828h10v10h-10z"/><path fill="#b1e6ff" d="M660 828h10v10h-10z"/><path fill="#b7e6ff" d="M670 828h10v10h-10z"/><path fill="#bce6ff" d="M680 828h10v10h-10z"/><path fill="#c2e5ff" d="M690 828h10v10h-10z"/><path fill="#c8e5ff" d="M700 828h10v10h-10z"/><path fill="#cde5ff" d="M710 828h10v10h-10z"/><path fill="#d3e5ff" d="M720 828h10v10h-10z"/><path fill="#d8e4ff" d="M730 828h10v10h-10z"/><path fill="#dde4ff" d="M740 828h10v10h-10z"/><path fill="#e2e4ff" d="M750 828h10v10h-10z"/><path fill="#e7e4ff" d="M760 828h10v10h-10z"/><path fill="#ece3ff" d="M770 828h10v10h-10z"/><path fill="#f1e3ff" d="M780 828h10v10h-10z"/><path fill="#f6e3ff" d="M790 828h10v10h-10z"/><path fill="#fbe3ff" d="M800 828h10v10h-10z"/><path fill="#ffe1fe" d="M810 828h10v10h-10z"/><path fill="#ffddf9" d="M820 828h10v10h-10z"/><path fill="#ffd8f5" d="M830 828h10v10h-10z"/><path fill="#ffd4f0" d="M840 828h10v10h-10z"/><path fill="#ffd0ec" d="M850 828h10v10h-10z"/><path fill="#ffcce8" d="M860 828h10v10h-10z"/><path fill="#ffc9e4" d="M870 828h10v10h-10z"/><path fill="#ffc5e1" d="M880 828h10v10h-10z"/><path fill="#ffc1dd" d="M890 828h10v10h-10z"/><path fill="#ffbed9" d="M900 828h10v10h-10z"/><path fill="#ffbbd6" d="M910 828h10v10h-10z"/><path fill="#ffb8d3" d="M920 828h10v10h-10z"/><path fill="#ffb4cf" d="M930 828h10v10h-10z"/><path fill="#ffb1cc" d="M940 828h10v10h-10z"/><path fill="#ffaec9" d="M950 828h10v10h-10z"/><path fill="#ffabc6" d="M960 828h10v10h-10z"/><path fill="#ffa9c3" d="M970 828h10v10h-10z"/><path fill="#ffa6c1" d="M980 828h10v10h-10z"/><path fill="#ffa3be" d="M990 828h10v10h-10z"/><path fill="#9fe3ff" d="M630 838h10v10h-10z"/><path fill="#a5e2ff" d="M640 838h10v10h-10z"/><path fill="#abe2ff" d="M650 838h10v10h-10z"/><path fill="#b2e2ff" d="M660 838h10v10h-10z"/><path fill="#b7e2ff" d="M670 838h10v10h-10z"/><path fill="#bde1ff" d="M680 838h10v10h-10z"/><path fill="#c3e1ff" d="M690 838h10v10h-10z"/><path fill="#c8e1ff" d="M700 838h10v10h-10z"/><path fill="#cee1ff" d="M710 838h10v10h-10z"/><path fill="#d3e0ff" d="M720 838h10v10h-10z"/><path fill="#d8e0ff" d="M730 838h10v10h-10z"/><path fill="#dde0ff" d="M740 838h10v10h-10z"/><path fill="#e2dfff" d="M750 838h10v10h-10z"/><path fill="#e7dfff" d="M760 838h10v10h-10z"/><path fill="#ecdfff" d="M770 838h10v10h-10z"/><path fill="#f1deff" d="M780 838h10v10h-10z"/><path fill="#f6deff" d="M790 838h10v10h-10z"/><path fill="#fbdeff" d="M800 838h10v10h-10z"/><path fill="#ffddfe" d="M810 838h10v10h-10z"/><path fill="#ffd8fa" d="M820 838h10v10h-10z"/><path fill="#ffd4f5" d="M830 838h10v10h-10z"/><path fill="#ffd0f1" d="M840 838h10v10h-10z"/><path fill="#ffcced" d="M850 838h10v10h-10z"/><path fill="#ffc8e9" d="M860 838h10v10h-10z"/><path fill="#ffc5e5" d="M870 838h10v10h-10z"/><path fill="#ffc1e1" d="M880 838h10v10h-10z"/><path fill="#ffbede" d="M890 838h10v10h-10z"/><path fill="#ffbada" d="M900 838h10v10h-10z"/><path fill="#ffb7d7" d="M910 838h10v10h-10z"/><path fill="#ffb4d3" d="M920 838h10v10h-10z"/><path fill="#ffb1d0" d="M930 838h10v10h-10z"/><path fill="#ffaecd" d="M940 838h10v10h-10z"/><path fill="#ffabca" d="M950 838h10v10h-10z"/><path fill="#ffa8c7" d="M960 838h10v10h-10z"/><path fill="#ffa5c4" d="M970 838h10v10h-10z"/><path fill="#ffa2c2" d="M980 838h10v10h-10z"/><path fill="#ff9fbf" d="M990 838h10v10h-10z"/><path fill="#a0dfff" d="M630 848h10v10h-10z"/><path fill="#a6deff" d="M640 848h10v10h-10z"/><path fill="#addeff" d="M650 848h10v10h-10z"/><path fill="#b3deff" d="M660 848h10v10h-10z"/><path fill="#b8ddff" d="M670 848h10v10h-10z"/><path fill="#beddff" d="M680 848h10v10h-10z"/><path fill="#c3ddff" d="M690 848h10v10h-10z"/><path fill="#c9ddff" d="M700 848h10v10h-10z"/><path fill="#cedcff" d="M710 848h10v10h-10z"/><path fill="#d3dcff" d="M720 848h10v10h-10z"/><path fill="#d8dcff" d="M730 848h10v10h-10z"/><path fill="#dedbff" d="M740 848h10v10h-10z"/><path fill="#e3dbff" d="M750 848h10v10h-10z"/><path fill="#e7daff" d="M760 848h10v10h-10z"/><path fill="#ecdaff" d="M770 848h10v10h-10z"/><path fill="#f1daff" d="M780 848h10v10h-10z"/><path fill="#f6d9ff" d="M790 848h10v10h-10z"/><path fill="#fbd9ff" d="M800 848h10v10h-10z"/><path fill="#ffd8ff" d="M810 848h10v10h-10z"/><path fill="#ffd4fa" d="M820 848h10v10h-10z"/><path fill="#ffd0f6" d="M830 848h10v10h-10z"/><path fill="#ffccf1" d="M840 848h10v10h-10z"/><path fill="#ffc8ed" d="M850 848h10v10h-10z"/><path fill="#ffc4e9" d="M860 848h10v10h-10z"/><path fill="#ffc0e6" d="M870 848h10v10h-10z"/><path fill="#ffbde2" d="M880 848h10v10h-10z"/><path fill="#ffbade" d="M890 848h10v10h-10z"/><path fill="#ffb6db" d="M900 848h10v10h-10z"/><path fill="#ffb3d7" d="M910 848h10v10h-10z"/><path fill="#ffb0d4" d="M920 848h10v10h-10z"/><path fill="#ffadd1" d="M930 848h10v10h-10z"/><path fill="#ffaace" d="M940 848h10v10h-10z"/><path fill="#ffa7cb" d="M950 848h10v10h-10z"/><path fill="#ffa4c8" d="M960 848h10v10h-10z"/><path fill="#ffa1c5" d="M970 848h10v10h-10z"/><path fill="#ff9ec2" d="M980 848h10v10h-10z"/><path fill="#ff9cc0" d="M990 848h10v10h-10z"/><path fill="#a1dbff" d="M630 858h10v10h-10z"/><path fill="#a8daff" d="M640 858h10v10h-10z"/><path fill="#aedaff" d="M650 858h10v10h-10z"/><path fill="#b3daff" d="M660 858h10v10h-10z"/><path fill="#b9d9ff" d="M670 858h10v10h-10z"/><path fill="#bfd9ff" d="M680 858h10v10h-10z"/><path fill="#c4d9ff" d="M690 858h10v10h-10z"/><path fill="#c9d8ff" d="M700 858h10v10h-10z"/><path fill="#cfd8ff" d="M710 858h10v10h-10z"/><path fill="#d4d7ff" d="M720 858h10v10h-10z"/><path fill="#d9d7ff" d="M730 858h10v10h-10z"/><path fill="#ded7ff" d="M740 858h10v10h-10z"/><path fill="#e3d6ff" d="M750 858h10v10h-10z"/><path fill="#e8d6ff" d="M760 858h10v10h-10z"/><path fill="#ecd6ff" d="M770 858h10v10h-10z"/><path fill="#f1d5ff" d="M780 858h10v10h-10z"/><path fill="#f6d5ff" d="M790 858h10v10h-10z"/><path fill="#fad4ff" d="M800 858h10v10h-10z"/><path fill="#ffd4ff" d="M810 858h10v10h-10z"/><path fill="#ffd0fa" d="M820 858h10v10h-10z"/><path fill="#ffcbf6" d="M830 858h10v10h-10z"/><path fill="#ffc7f2" d="M840 858h10v10h-10z"/><path fill="#ffc4ee" d="M850 858h10v10h-10z"/><path fill="#ffc0ea" d="M860 858h10v10h-10z"/><path fill="#ffbce6" d="M870 858h10v10h-10z"/><path fill="#ffb9e2" d="M880 858h10v10h-10z"/><path fill="#ffb6df" d="M890 858h10v10h-10z"/><path fill="#ffb2dc" d="M900 858h10v10h-10z"/><path fill="#ffafd8" d="M910 858h10v10h-10z"/><path fill="#ffacd5" d="M920 858h10v10h-10z"/><path fill="#ffa9d2" d="M930 858h10v10h-10z"/><path fill="#ffa6cf" d="M940 858h10v10h-10z"/><path fill="#ffa3cc" d="M950 858h10v10h-10z"/><path fill="#ffa0c9" d="M960 858h10v10h-10z"/><path fill="#ff9dc6" d="M970 858h10v10h-10z"/><path fill="#ff9bc3" d="M980 858h10v10h-10z"/><path fill="#ff98c1" d="M990 858h10v10h-10z"/><path fill="#a3d7ff" d="M630 868h10v10h-10z"/><path fill="#a9d6ff" d="M640 868h10v10h-10z"/><path fill="#afd6ff" d="M650 868h10v10h-10z"/><path fill="#b4d5ff" d="M660 868h10v10h-10z"/><path fill="#bad5ff" d="M670 868h10v10h-10z"/><path fill="#bfd5ff" d="M680 868h10v10h-10z"/><path fill="#c5d4ff" d="M690 868h10v10h-10z"/><path fill="#cad4ff" d="M700 868h10v10h-10z"/><path fill="#cfd4ff" d="M710 868h10v10h-10z"/><path fill="#d4d3ff" d="M720 868h10v10h-10z"/><path fill="#d9d3ff" d="M730 868h10v10h-10z"/><path fill="#ded2ff" d="M740 868h10v10h-10z"/><path fill="#e3d2ff" d="M750 868h10v10h-10z"/><path fill="#e8d1ff" d="M760 868h10v10h-10z"/><path fill="#ecd1ff" d="M770 868h10v10h-10z"/><path fill="#f1d1ff" d="M780 868h10v10h-10z"/><path fill="#f6d0ff" d="M790 868h10v10h-10z"/><path fill="#fad0ff" d="M800 868h10v10h-10z"/><path fill="#ffcfff" d="M810 868h10v10h-10z"/><path fill="#ffcbfb" d="M820 868h10v10h-10z"/><path fill="#ffc7f6" d="M830 868h10v10h-10z"/><path fill="#ffc3f2" d="M840 868h10v10h-10z"/><path fill="#ffbfee" d="M850 868h10v10h-10z"/><path fill="#ffbcea" d="M860 868h10v10h-10z"/><path fill="#ffb8e7" d="M870 868h10v10h-10z"/><path fill="#ffb5e3" d="M880 868h10v10h-10z"/><path fill="#ffb2e0" d="M890 868h10v10h-10z"/><path fill="#ffaedc" d="M900 868h10v10h-10z"/><path fill="#ffabd9" d="M910 868h10v10h-10z"/><path fill="#ffa8d6" d="M920 868h10v10h-10z"/><path fill="#ffa5d3" d="M930 868h10v10h-10z"/><path fill="#ffa2d0" d="M940 868h10v10h-10z"/><path fill="#ff9fcd" d="M950 868h10v10h-10z"/><path fill="#ff9cca" d="M960 868h10v10h-10z"/><path fill="#ff9ac7" d="M970 868h10v10h-10z"/><path fill="#ff97c4" d="M980 868h10v10h-10z"/><path fill="#ff94c2" d="M990 868h10v10h-10z"/><path fill="#a4d2ff" d="M630 878h10v10h-10z"/><path fill="#aad2ff" d="M640 878h10v10h-10z"/><path fill="#b0d2ff" d="M650 878h10v10h-10z"/><path fill="#b5d1ff" d="M660 878h10v10h-10z"/><path fill="#bbd1ff" d="M670 878h10v10h-10z"/><path fill="#c0d0ff" d="M680 878h10v10h-10z"/><path fill="#c5d0ff" d="M690 878h10v10h-10z"/><path fill="#cad0ff" d="M700 878h10v10h-10z"/><path fill="#cfcfff" d="M710 878h10v10h-10z"/><path fill="#d4cfff" d="M720 878h10v10h-10z"/><path fill="#d9ceff" d="M730 878h10v10h-10z"/><path fill="#deceff" d="M740 878h10v10h-10z"/><path fill="#e3cdff" d="M750 878h10v10h-10z"/><path fill="#e8cdff" d="M760 878h10v10h-10z"/><path fill="#ecccff" d="M770 878h10v10h-10z"/><path fill="#f1ccff" d="M780 878h10v10h-10z"/><path fill="#f5cbff" d="M790 878h10v10h-10z"/><path fill="#facbff" d="M800 878h10v10h-10z"/><path fill="#ffcaff" d="M810 878h10v10h-10z"/><path fill="#ffc7fb" d="M820 878h10v10h-10z"/><path fill="#ffc3f7" d="M830 878h10v10h-10z"/><path fill="#ffbff3" d="M840 878h10v10h-10z"/><path fill="#ffbbef" d="M850 878h10v10h-10z"/><path fill="#ffb8eb" d="M860 878h10v10h-10z"/><path fill="#ffb4e7" d="M870 878h10v10h-10z"/><path fill="#ffb1e4" d="M880 878h10v10h-10z"/><path fill="#ffade0" d="M890 878h10v10h-10z"/><path fill="#ffaadd" d="M900 878h10v10h-10z"/><path fill="#ffa7da" d="M910 878h10v10h-10z"/><path fill="#ffa4d6" d="M920 878h10v10h-10z"/><path fill="#ffa1d3" d="M930 878h10v10h-10z"/><path fill="#ff9ed0" d="M940 878h10v10h-10z"/><path fill="#ff9bcd" d="M950 878h10v10h-10z"/><path fill="#ff99cb" d="M960 878h10v10h-10z"/><path fill="#ff96c8" d="M970 878h10v10h-10z"/><path fill="#ff93c5" d="M980 878h10v10h-10z"/><path fill="#ff90c2" d="M990 878h10v10h-10z"/></g></g>
<rect x="802" y="767.8" width="13" height="13" fill="none" stroke="#000" stroke-width="2"/>
<circle cx="781.2" cy="789.5" r="4.3" fill="#c0c0c0" stroke="#000" stroke-width="1.2"/>
<circle cx="780" cy="794" r="4.3" fill="#fff" stroke="#000" stroke-width="1.2"/>
<rect x="996" y="660.5" width="653" height="224.2" fill="#000"/>
<rect x="997" y="661.5" width="651" height="223.2" fill="#333"/>
<defs><linearGradient id="hsg" x1="0" y1="0" x2="1" y2="0"><stop offset="0" stop-color="#474747"/><stop offset="1" stop-color="#666"/></linearGradient><linearGradient id="vsg" x1="0" y1="0" x2="0" y2="1"><stop offset="0" stop-color="#4e4e4e"/><stop offset="1" stop-color="#666"/></linearGradient></defs>
<defs><clipPath id="tclipc"><rect x="997" y="661.5" width="633.5" height="203.3"/></clipPath><linearGradient id="thg" x1="0" y1="0" x2="0" y2="1"><stop offset="0" stop-color="#333"/><stop offset="0.5" stop-color="#333"/><stop offset="0.5" stop-color="#1a1a1a"/><stop offset="1" stop-color="#141414"/></linearGradient></defs>
<g clip-path="url(#tclipc)">
<rect x="997" y="661.5" width="634" height="33.4" fill="url(#thg)"/>
<text x="1108.0" y="685.5" font-size="18" fill="#f0f0f0" textLength="42" lengthAdjust="spacingAndGlyphs">White</text>
<text x="1188.2" y="685.5" font-size="18" fill="#f0f0f0" textLength="26.5" lengthAdjust="spacingAndGlyphs">Red</text>
<text x="1253.6" y="685.5" font-size="18" fill="#f0f0f0" textLength="42.4" lengthAdjust="spacingAndGlyphs">Green</text>
<text x="1333.0" y="685.5" font-size="18" fill="#f0f0f0" textLength="30.5" lengthAdjust="spacingAndGlyphs">Blue</text>
<text x="1404.0" y="685.5" font-size="18" fill="#f0f0f0" textLength="34.3" lengthAdjust="spacingAndGlyphs">Cyan</text>
<text x="1465.0" y="685.5" font-size="18" fill="#f0f0f0" textLength="62" lengthAdjust="spacingAndGlyphs">Magenta</text>
<text x="1548.0" y="685.5" font-size="18" fill="#f0f0f0" textLength="44.5" lengthAdjust="spacingAndGlyphs">Yellow</text>
<text x="1629.0" y="685.5" font-size="18" fill="#f0f0f0" textLength="40" lengthAdjust="spacingAndGlyphs">100W</text>
<rect x="997" y="694.9" width="634" height="30.85" fill="#404040"/>
<text x="1010" y="717.9" font-size="18" font-weight="bold" fill="#f4f4f4" textLength="64" lengthAdjust="spacingAndGlyphs">x: CIE31</text>
<text x="1095" y="717.9" font-size="18" fill="#ececec" textLength="50.0" lengthAdjust="spacingAndGlyphs">0,3089</text>
<text x="1172.2" y="717.9" font-size="18" fill="#ececec" textLength="50.0" lengthAdjust="spacingAndGlyphs">0,6495</text>
<text x="1240.8" y="717.9" font-size="18" fill="#ececec" textLength="50.0" lengthAdjust="spacingAndGlyphs">0,2998</text>
<text x="1318.5" y="717.9" font-size="18" fill="#ececec" textLength="50.0" lengthAdjust="spacingAndGlyphs">0,1491</text>
<text x="1387.2" y="717.9" font-size="18" fill="#ececec" textLength="50.0" lengthAdjust="spacingAndGlyphs">0,2221</text>
<text x="1464.8" y="717.9" font-size="18" fill="#ececec" textLength="50.0" lengthAdjust="spacingAndGlyphs">0,3156</text>
<text x="1536.2" y="717.9" font-size="18" fill="#ececec" textLength="50.0" lengthAdjust="spacingAndGlyphs">0,4186</text>
<text x="1613.8" y="717.9" font-size="18" fill="#ececec" textLength="50.0" lengthAdjust="spacingAndGlyphs">0,3086</text>
<rect x="997" y="725.8" width="634" height="30.85" fill="#7a7a7a"/>
<text x="1010" y="748.8" font-size="18" font-weight="bold" fill="#f4f4f4" textLength="64" lengthAdjust="spacingAndGlyphs">y: CIE31</text>
<text x="1095" y="748.8" font-size="18" fill="#ececec" textLength="50.0" lengthAdjust="spacingAndGlyphs">0,3252</text>
<text x="1172.2" y="748.8" font-size="18" fill="#ececec" textLength="50.0" lengthAdjust="spacingAndGlyphs">0,3313</text>
<text x="1240.8" y="748.8" font-size="18" fill="#ececec" textLength="50.0" lengthAdjust="spacingAndGlyphs">0,6041</text>
<text x="1318.5" y="748.8" font-size="18" fill="#ececec" textLength="50.0" lengthAdjust="spacingAndGlyphs">0,0591</text>
<text x="1387.2" y="748.8" font-size="18" fill="#ececec" textLength="50.0" lengthAdjust="spacingAndGlyphs">0,3232</text>
<text x="1464.8" y="748.8" font-size="18" fill="#ececec" textLength="50.0" lengthAdjust="spacingAndGlyphs">0,1497</text>
<text x="1536.2" y="748.8" font-size="18" fill="#ececec" textLength="50.0" lengthAdjust="spacingAndGlyphs">0,5075</text>
<text x="1613.8" y="748.8" font-size="18" fill="#ececec" textLength="50.0" lengthAdjust="spacingAndGlyphs">0,3240</text>
<rect x="997" y="756.6" width="634" height="30.85" fill="#404040"/>
<text x="1010" y="779.6" font-size="18" font-weight="bold" fill="#f4f4f4" textLength="11" lengthAdjust="spacingAndGlyphs">Y</text>
<text x="1095" y="779.6" font-size="18" fill="#ececec" textLength="68.2" lengthAdjust="spacingAndGlyphs">314,7324</text>
<text x="1172.2" y="779.6" font-size="18" fill="#ececec" textLength="59.1" lengthAdjust="spacingAndGlyphs">65,8086</text>
<text x="1240.8" y="779.6" font-size="18" fill="#ececec" textLength="68.2" lengthAdjust="spacingAndGlyphs">225,8282</text>
<text x="1318.5" y="779.6" font-size="18" fill="#ececec" textLength="59.1" lengthAdjust="spacingAndGlyphs">22,7995</text>
<text x="1387.2" y="779.6" font-size="18" fill="#ececec" textLength="68.2" lengthAdjust="spacingAndGlyphs">245,5225</text>
<text x="1464.8" y="779.6" font-size="18" fill="#ececec" textLength="59.1" lengthAdjust="spacingAndGlyphs">88,3694</text>
<text x="1536.2" y="779.6" font-size="18" fill="#ececec" textLength="68.2" lengthAdjust="spacingAndGlyphs">293,4363</text>
<text x="1613.8" y="779.6" font-size="18" fill="#ececec" textLength="68.2" lengthAdjust="spacingAndGlyphs">598,9700</text>
<rect x="997" y="787.5" width="634" height="30.85" fill="#7a7a7a"/>
<text x="1010" y="810.5" font-size="18" font-weight="bold" fill="#f4f4f4" textLength="65" lengthAdjust="spacingAndGlyphs">Target Y</text>
<text x="1095" y="810.5" font-size="18" fill="#ececec" textLength="68.2" lengthAdjust="spacingAndGlyphs">312,0584</text>
<text x="1172.2" y="810.5" font-size="18" fill="#ececec" textLength="59.1" lengthAdjust="spacingAndGlyphs">66,3611</text>
<text x="1240.8" y="810.5" font-size="18" fill="#ececec" textLength="68.2" lengthAdjust="spacingAndGlyphs">223,1712</text>
<text x="1318.5" y="810.5" font-size="18" fill="#ececec" textLength="59.1" lengthAdjust="spacingAndGlyphs">22,5261</text>
<text x="1387.2" y="810.5" font-size="18" fill="#ececec" textLength="68.2" lengthAdjust="spacingAndGlyphs">245,6973</text>
<text x="1464.8" y="810.5" font-size="18" fill="#ececec" textLength="59.1" lengthAdjust="spacingAndGlyphs">88,8872</text>
<text x="1536.2" y="810.5" font-size="18" fill="#ececec" textLength="68.2" lengthAdjust="spacingAndGlyphs">289,5323</text>
<text x="1613.8" y="810.5" font-size="18" fill="#ececec" textLength="68.2" lengthAdjust="spacingAndGlyphs">598,9700</text>
<rect x="997" y="818.3" width="634" height="30.85" fill="#404040"/>
<text x="1010" y="841.3" font-size="18" font-weight="bold" fill="#f4f4f4" textLength="66" lengthAdjust="spacingAndGlyphs">ΔE 2000</text>
<text x="1095" y="841.3" font-size="18" fill="#ececec" textLength="50.0" lengthAdjust="spacingAndGlyphs">1,7208</text>
<text x="1172.2" y="841.3" font-size="18" fill="#ececec" textLength="50.0" lengthAdjust="spacingAndGlyphs">1,8642</text>
<text x="1240.8" y="841.3" font-size="18" fill="#ececec" textLength="50.0" lengthAdjust="spacingAndGlyphs">0,4311</text>
<text x="1318.5" y="841.3" font-size="18" fill="#ececec" textLength="50.0" lengthAdjust="spacingAndGlyphs">0,2925</text>
<text x="1387.2" y="841.3" font-size="18" fill="#ececec" textLength="50.0" lengthAdjust="spacingAndGlyphs">1,2192</text>
<text x="1464.8" y="841.3" font-size="18" fill="#ececec" textLength="50.0" lengthAdjust="spacingAndGlyphs">0,6830</text>
<text x="1536.2" y="841.3" font-size="18" fill="#ececec" textLength="50.0" lengthAdjust="spacingAndGlyphs">0,4979</text>
<text x="1613.8" y="841.3" font-size="18" fill="#ececec" textLength="50.0" lengthAdjust="spacingAndGlyphs">2,5512</text>
<rect x="997" y="849.1" width="634" height="30.85" fill="#7a7a7a"/>
<text x="1010" y="872.1" font-size="18" font-weight="bold" fill="#f4f4f4" textLength="52" lengthAdjust="spacingAndGlyphs">ΔE ITP</text>
<text x="1095" y="872.1" font-size="18" fill="#ececec" textLength="50.0" lengthAdjust="spacingAndGlyphs">2,4137</text>
<text x="1172.2" y="872.1" font-size="18" fill="#ececec" textLength="50.0" lengthAdjust="spacingAndGlyphs">0,4343</text>
<text x="1240.8" y="872.1" font-size="18" fill="#ececec" textLength="50.0" lengthAdjust="spacingAndGlyphs">2,0933</text>
<text x="1318.5" y="872.1" font-size="18" fill="#ececec" textLength="50.0" lengthAdjust="spacingAndGlyphs">2,7725</text>
<text x="1387.2" y="872.1" font-size="18" fill="#ececec" textLength="50.0" lengthAdjust="spacingAndGlyphs">2,2362</text>
<text x="1464.8" y="872.1" font-size="18" fill="#ececec" textLength="50.0" lengthAdjust="spacingAndGlyphs">3,0232</text>
<text x="1536.2" y="872.1" font-size="18" fill="#ececec" textLength="50.0" lengthAdjust="spacingAndGlyphs">1,6523</text>
<text x="1613.8" y="872.1" font-size="18" fill="#ececec" textLength="50.0" lengthAdjust="spacingAndGlyphs">2,4120</text>
</g>
<rect x="1630.5" y="694.9" width="17.5" height="170.5" rx="2" fill="url(#vsg)"/>
<rect x="1631.5" y="696" width="15" height="16.5" rx="3" fill="#6e6e6e" stroke="#5a5a5a" stroke-width="1"/>
<path d="M1633.8 708.5 L1639 702 L1644.2 708.5Z" fill="#333"/>
<rect x="1632.5" y="717" width="13" height="105" rx="6" fill="#363636"/>
<rect x="1631.5" y="846.8" width="15" height="16.5" rx="3" fill="#6e6e6e" stroke="#5a5a5a" stroke-width="1"/>
<path d="M1633.8 851.5 L1639 858 L1644.2 851.5Z" fill="#333"/>
<rect x="997" y="865.3" width="634" height="19.3" rx="2" fill="url(#hsg)"/>
<rect x="999" y="867.4" width="14" height="15" rx="3" fill="#6e6e6e" stroke="#5a5a5a" stroke-width="1"/>
<path d="M1002.5 875 L1009.5 869.5 L1009.5 880.5Z" fill="#333"/>
<rect x="1016.5" y="867.5" width="546" height="15" rx="6" fill="#3a3a3a"/>
<rect x="1615.3" y="867.3" width="13.8" height="15.4" rx="3" fill="#7a7a7a" stroke="#6a6a6a" stroke-width="1"/>
<path d="M1625.8 875 L1619.2 869.8 L1619.2 880.2Z" fill="#333"/>
<defs>
<linearGradient id="btng" x1="0" y1="0" x2="0" y2="1"><stop offset="0" stop-color="#a9a9a9"/><stop offset="0.12" stop-color="#a0a0a0"/><stop offset="0.6" stop-color="#7c7c7c"/><stop offset="1" stop-color="#5a5a5a"/></linearGradient>
<linearGradient id="selg" x1="0" y1="0" x2="0" y2="1"><stop offset="0" stop-color="#1c1c1c"/><stop offset="1" stop-color="#353535"/></linearGradient>
<linearGradient id="ctlg" x1="0" y1="0" x2="0" y2="1"><stop offset="0" stop-color="#b2b2b2"/><stop offset="1" stop-color="#7e7e7e"/></linearGradient>
<linearGradient id="ctlg2" x1="0" y1="0" x2="0" y2="1"><stop offset="0" stop-color="#bababa"/><stop offset="1" stop-color="#858585"/></linearGradient>
<linearGradient id="vblk" x1="0" y1="0" x2="0" y2="1"><stop offset="0" stop-color="#8e8e8e"/><stop offset="1" stop-color="#5e5e5e"/></linearGradient>
<radialGradient id="icg" cx="0.5" cy="0.85" r="0.7"><stop offset="0" stop-color="#b8b8b8"/><stop offset="1" stop-color="#8a8a8a"/></radialGradient>
<linearGradient id="swin" x1="0" y1="0" x2="0" y2="1"><stop offset="0" stop-color="#000" stop-opacity="0.35"/><stop offset="0.15" stop-color="#000" stop-opacity="0"/></linearGradient>
<filter id="ashd" x="-30%" y="-30%" width="160%" height="160%"><feDropShadow dx="1" dy="1.5" stdDeviation="1" flood-color="#000" flood-opacity="0.7"/></filter>
</defs>
<rect x="2.5" y="928.7" width="155.3" height="85" rx="6" fill="url(#btng)"/>
<rect x="3.0" y="929.2" width="154.3" height="85" rx="6" fill="none" stroke="#b5b5b5" stroke-opacity="0.5" stroke-width="1"/>
<rect x="8.7" y="935.3" width="142.5" height="44.3" rx="4.5" fill="#c0c0c0"/>
<rect x="8.7" y="935.3" width="142.5" height="44.3" rx="4.5" fill="url(#swin)" stroke="#000" stroke-opacity="0.25" stroke-width="1"/>
<text x="80.0" y="998.5" font-size="13" font-weight="bold" fill="#2c2c2c" text-anchor="middle">White</text>
<rect x="160.3" y="928.7" width="155.3" height="85" rx="6" fill="url(#btng)"/>
<rect x="160.8" y="929.2" width="154.3" height="85" rx="6" fill="none" stroke="#b5b5b5" stroke-opacity="0.5" stroke-width="1"/>
<rect x="166.5" y="935.3" width="142.5" height="44.3" rx="4.5" fill="#c00000"/>
<rect x="166.5" y="935.3" width="142.5" height="44.3" rx="4.5" fill="url(#swin)" stroke="#000" stroke-opacity="0.25" stroke-width="1"/>
<text x="237.8" y="998.5" font-size="13" font-weight="bold" fill="#2c2c2c" text-anchor="middle">Red</text>
<rect x="318.3" y="928.7" width="155.3" height="85" rx="6" fill="url(#btng)"/>
<rect x="318.8" y="929.2" width="154.3" height="85" rx="6" fill="none" stroke="#b5b5b5" stroke-opacity="0.5" stroke-width="1"/>
<rect x="324.5" y="935.3" width="142.5" height="44.3" rx="4.5" fill="#00c000"/>
<rect x="324.5" y="935.3" width="142.5" height="44.3" rx="4.5" fill="url(#swin)" stroke="#000" stroke-opacity="0.25" stroke-width="1"/>
<text x="395.8" y="998.5" font-size="13" font-weight="bold" fill="#2c2c2c" text-anchor="middle">Green</text>
<rect x="476.6" y="928.7" width="155.3" height="85" rx="6" fill="url(#btng)"/>
<rect x="477.1" y="929.2" width="154.3" height="85" rx="6" fill="none" stroke="#b5b5b5" stroke-opacity="0.5" stroke-width="1"/>
<rect x="482.8" y="935.3" width="142.5" height="44.3" rx="4.5" fill="#0000c0"/>
<rect x="482.8" y="935.3" width="142.5" height="44.3" rx="4.5" fill="url(#swin)" stroke="#000" stroke-opacity="0.25" stroke-width="1"/>
<text x="554.1" y="998.5" font-size="13" font-weight="bold" fill="#2c2c2c" text-anchor="middle">Blue</text>
<rect x="634.1" y="928.7" width="155.3" height="85" rx="6" fill="url(#btng)"/>
<rect x="634.6" y="929.2" width="154.3" height="85" rx="6" fill="none" stroke="#b5b5b5" stroke-opacity="0.5" stroke-width="1"/>
<rect x="640.3000000000001" y="935.3" width="142.5" height="44.3" rx="4.5" fill="#00c0c0"/>
<rect x="640.3000000000001" y="935.3" width="142.5" height="44.3" rx="4.5" fill="url(#swin)" stroke="#000" stroke-opacity="0.25" stroke-width="1"/>
<text x="711.6" y="998.5" font-size="13" font-weight="bold" fill="#2c2c2c" text-anchor="middle">Cyan</text>
<rect x="792.3" y="928.7" width="155.3" height="85" rx="6" fill="url(#btng)"/>
<rect x="792.8" y="929.2" width="154.3" height="85" rx="6" fill="none" stroke="#b5b5b5" stroke-opacity="0.5" stroke-width="1"/>
<rect x="798.5" y="935.3" width="142.5" height="44.3" rx="4.5" fill="#c000c0"/>
<rect x="798.5" y="935.3" width="142.5" height="44.3" rx="4.5" fill="url(#swin)" stroke="#000" stroke-opacity="0.25" stroke-width="1"/>
<text x="869.8" y="998.5" font-size="13" font-weight="bold" fill="#2c2c2c" text-anchor="middle">Magenta</text>
<rect x="950.1" y="928.7" width="155.3" height="85" rx="6" fill="url(#btng)"/>
<rect x="950.6" y="929.2" width="154.3" height="85" rx="6" fill="none" stroke="#b5b5b5" stroke-opacity="0.5" stroke-width="1"/>
<rect x="956.3000000000001" y="935.3" width="142.5" height="44.3" rx="4.5" fill="#c0c000"/>
<rect x="956.3000000000001" y="935.3" width="142.5" height="44.3" rx="4.5" fill="url(#swin)" stroke="#000" stroke-opacity="0.25" stroke-width="1"/>
<text x="1027.6" y="998.5" font-size="13" font-weight="bold" fill="#2c2c2c" text-anchor="middle">Yellow</text>
<rect x="1108.2" y="929" width="155" height="85" rx="6" fill="url(#selg)"/>
<rect x="1114.8" y="934.7" width="142.5" height="45.2" rx="5" fill="#fff"/>
<text x="1186" y="998.5" font-size="13" font-weight="bold" fill="#f4f4f4" text-anchor="middle">100W</text>
<rect x="1267.1" y="928.5" width="59.9" height="85" rx="4" fill="url(#vblk)"/>
<rect x="1267.1" y="928.5" width="59.9" height="22" rx="4" fill="#8a8a8a"/>
<line x1="1267.1" y1="950.8" x2="1327" y2="950.8" stroke="#4a4a4a" stroke-width="1.2"/><line x1="1267.1" y1="952" x2="1327" y2="952" stroke="#a0a0a0" stroke-width="1"/>
<circle cx="1297.6" cy="939.5" r="9.5" fill="url(#icg)"/>
<path d="M1291.5 943 L1297.6 937 L1303.7 943Z" fill="#333"/>
<rect x="1278.5" y="959.5" width="37.5" height="37.5" rx="5" fill="#9c9c9c" stroke="#202020" stroke-width="3"/>
<rect x="1280" y="978" width="34.5" height="17.5" rx="0" fill="#848484"/>
<rect x="1288.8" y="969.9" width="17.7" height="17" fill="#000"/>
<rect x="1327.9" y="928" width="283.2" height="37.6" rx="3" fill="url(#ctlg)"/>
<line x1="1386.5" y1="928" x2="1386.5" y2="965.6" stroke="#3a3a3a" stroke-width="1.5"/>
<line x1="1442.3" y1="928" x2="1442.3" y2="965.6" stroke="#3a3a3a" stroke-width="1.5"/>
<line x1="1498.8" y1="928" x2="1498.8" y2="965.6" stroke="#3a3a3a" stroke-width="1.5"/>
<line x1="1555.3" y1="928" x2="1555.3" y2="965.6" stroke="#3a3a3a" stroke-width="1.5"/>
<circle cx="1357.2" cy="946.8" r="12.5" fill="url(#icg)"/>
<circle cx="1414.5" cy="946.8" r="12.5" fill="url(#icg)"/>
<circle cx="1470.5" cy="946.8" r="12.5" fill="url(#icg)"/>
<circle cx="1527" cy="946.8" r="12.5" fill="url(#icg)"/>
<circle cx="1583.1" cy="946.8" r="12.5" fill="url(#icg)"/>
<rect x="1353" y="942.5" width="8.5" height="8.5" fill="#333"/>
<path d="M1411 941 L1420 946.8 L1411 952.6Z" fill="#333"/>
<path d="M1467 942.3 h-2.3 v11.5 h2.3 M1475.5 942.3 h2.3 v11.5 h-2.3" fill="none" stroke="#2e2e2e" stroke-width="2.6"/><circle cx="1469.5" cy="947.3" r="1.1" fill="#333"/><circle cx="1473" cy="947.3" r="1.1" fill="#333"/>
<path d="M1527.4 947.3 c-2.8 -3.2 -7.2 -3.2 -7.2 0 c0 3.2 4.4 3.2 7.2 0 c2.8 -3.2 7.2 -3.2 7.2 0 c0 3.2 -4.4 3.2 -7.2 0Z" fill="none" stroke="#2e2e2e" stroke-width="2.4"/>
<path d="M1577.5 944.5 a6 6 0 0 1 10.5 -2.5 M1588.6 949 a6 6 0 0 1 -10.5 2.5" fill="none" stroke="#333" stroke-width="2.4"/><path d="M1585 938.5 l5 0.5 l-1 4.5z M1581 955 l-5 -0.5 l1 -4.5z" fill="#333"/>
<rect x="1327.9" y="967" width="170.9" height="45" rx="3" fill="url(#ctlg2)"/>
<rect x="1498.8" y="967" width="175" height="45" rx="3" fill="url(#ctlg2)"/>
<line x1="1498.8" y1="967" x2="1498.8" y2="1005" stroke="#3a3a3a" stroke-width="1.5"/>
<circle cx="1367" cy="986" r="12" fill="url(#icg)"/><circle cx="1633.7" cy="986" r="12" fill="url(#icg)"/>
<path d="M1366 980 l-5 6 l5 6 M1372 980 l-5 6 l5 6" fill="none" stroke="#333" stroke-width="2.2"/>
<path d="M1629 980 l5 6 l-5 6 M1635 980 l5 6 l-5 6" fill="none" stroke="#333" stroke-width="2.2"/>
<text x="1400.5" y="995.3" font-size="26.5" fill="#333" stroke="#333" stroke-width="0.7" textLength="62.7" lengthAdjust="spacingAndGlyphs">Back</text>
<text x="1534.3" y="995.3" font-size="26.5" fill="#333" stroke="#333" stroke-width="0.7" textLength="64.2" lengthAdjust="spacingAndGlyphs">Next</text>
<g filter="url(#ashd)" transform="translate(1638.3 945.6)" stroke="#e00808" stroke-width="7.4" stroke-linecap="round"><line x1="0" y1="-13" x2="0" y2="13" transform="rotate(0)"/><line x1="0" y1="-13" x2="0" y2="13" transform="rotate(60)"/><line x1="0" y1="-13" x2="0" y2="13" transform="rotate(120)"/></g>
</svg>
</body></html>
